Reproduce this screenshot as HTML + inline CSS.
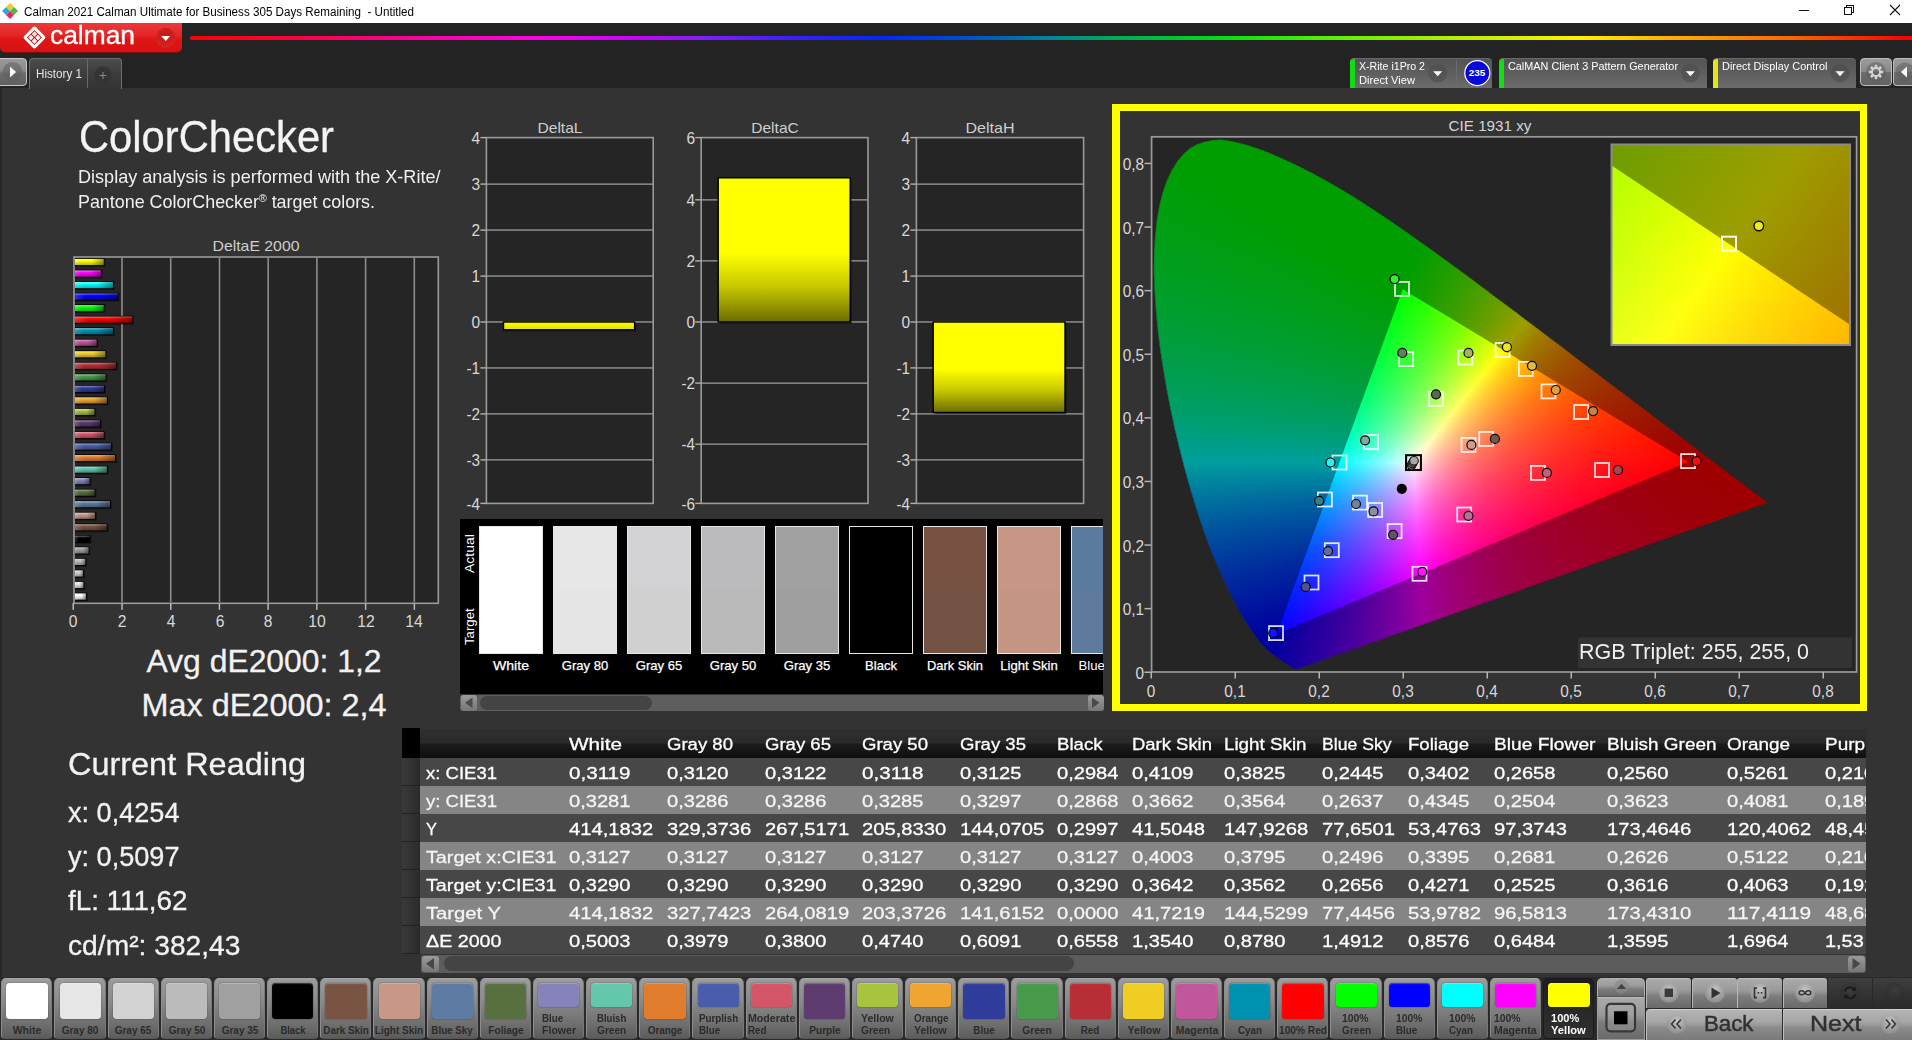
<!DOCTYPE html>
<html><head><meta charset="utf-8"><title>Calman</title>
<style>
html,body{margin:0;padding:0;}
html{width:1912px;height:1040px;overflow:hidden;}
body{width:1912px;height:1040px;overflow:hidden;background:#333;font-family:"Liberation Sans",sans-serif;position:relative;}
.a{position:absolute;box-sizing:border-box;}
.t{position:absolute;white-space:nowrap;line-height:1;}
svg{position:absolute;left:0;top:0;}
</style></head><body>

<div class="a" style="left:0px;top:0px;width:1912px;height:23px;background:#fff;"></div>
<svg width="24" height="23" viewBox="0 0 24 23">
<g transform="translate(10,11)">
<polygon points="0,-8 4,-4 0,0 -4,-4" fill="#f7c81e"/>
<polygon points="4,-4 8,0 4,4 0,0" fill="#4cb848"/>
<polygon points="-4,-4 0,0 -4,4 -8,0" fill="#29a9e0"/>
<polygon points="0,0 4,4 0,8 -4,4" fill="#e8245b"/>
</g></svg>
<span class="t" style="top:6.2px;left:24.0px;transform-origin:0 0;font-size:12px;color:#000;transform:scaleX(0.9697);">Calman 2021 Calman Ultimate for Business 305 Days Remaining&nbsp; - Untitled</span>
<svg width="1912" height="23" viewBox="0 0 1912 23" shape-rendering="crispEdges">
<rect x="1799" y="10" width="10" height="1" fill="#111"/>
<rect x="1844.5" y="7.5" width="7" height="7" fill="#fff" stroke="#111" stroke-width="1"/>
<path d="M1846.5 7.5 v-2 h7 v7 h-2" fill="none" stroke="#111" stroke-width="1"/>
</svg>
<svg width="1912" height="23" viewBox="0 0 1912 23">
<path d="M1890 5 l10 10 M1900 5 l-10 10" stroke="#111" stroke-width="1.1" fill="none"/>
</svg>
<div class="a" style="left:0px;top:23px;width:1912px;height:65px;background:#232323;"></div>
<div class="a" style="left:0px;top:23px;width:182.3px;height:28.6px;background:linear-gradient(#ea3a3a 0%,#e52424 45%,#dd1515 55%,#d81212 100%);border-radius:0 0 5px 5px;box-shadow:0 1px 0 #7a1010;"></div>
<svg width="190" height="60" viewBox="0 0 190 60"><g transform="translate(34.45,37.5) rotate(45)"><rect x="-8.3" y="-8.3" width="16.6" height="16.6" rx="2.2" fill="#fff"/><rect x="-5.3" y="-5.3" width="10.6" height="10.6" fill="#b81414"/><rect x="-4.5" y="-4.5" width="4.05" height="4.05" rx=".5" fill="#ffeeee"/><rect x="0.45" y="-4.5" width="4.05" height="4.05" rx=".5" fill="#ffeeee"/><rect x="-4.5" y="0.45" width="4.05" height="4.05" rx=".5" fill="#ffeeee"/><rect x="0.45" y="0.45" width="4.05" height="4.05" rx=".5" fill="#ffeeee"/></g><defs><radialGradient id="rdd" cx="50%" cy="40%" r="60%"><stop offset="0" stop-color="#c01818"/><stop offset="1" stop-color="#d62424"/></radialGradient></defs><circle cx="165.7" cy="37.7" r="10" fill="url(#rdd)"/><polygon points="161.2,36 170.2,36 165.7,41" fill="#fff"/></svg>
<span class="t" style="top:21.9px;left:50.3px;transform-origin:0 0;font-size:26.3px;color:#fff;transform:scaleX(1.0026);-webkit-text-stroke:0.35px #fff;">calman</span>
<div class="a" style="left:190px;top:35.6px;width:1722px;height:4.8px;background:linear-gradient(90deg,#ff0000 0%,#ff0040 6%,#ff0096 12.5%,#ff00e6 20.4%,#c800ff 25.7%,#821eff 29.7%,#3c1eff 34.9%,#0028ff 40.2%,#0050c8 45.4%,#0082a0 49.7%,#00aa5a 53.7%,#00dc14 59.7%,#50f000 65.5%,#b4f000 73.4%,#fff000 80.7%,#ffaa00 86.5%,#ff6400 93.1%,#ff0000 99.7%);filter:blur(0.6px);border-radius:2px 0 0 2px;"></div>
<div class="a" style="left:-1px;top:58px;width:28px;height:28.3px;background:linear-gradient(#9a9a9a,#8a8a8a 45%,#6c6c6c 55%,#606060);border:1px solid #c8c8c8;border-radius:0 4px 4px 0;"></div>
<svg width="30" height="90" viewBox="0 0 30 90"><circle cx="12.5" cy="72" r="10" fill="#5e5e5e" opacity=".55"/><polygon points="10,66.5 10,77.5 16,72" fill="#fff"/></svg>
<div class="a" style="left:29px;top:58px;width:92.5px;height:30.5px;background:linear-gradient(#4c4c4c,#3c3c3c 50%,#333);border:1px solid #6e6e6e;border-bottom:none;border-radius:4px 4px 0 0;"></div>
<div class="a" style="left:87px;top:59px;width:1px;height:29px;background:#6a6a6a;"></div>
<span class="t" style="top:67.7px;left:35.5px;transform-origin:0 0;font-size:12.2px;color:#e4e4e4;transform:scaleX(0.9565);">History 1</span>
<svg width="130" height="90" viewBox="0 0 130 90"><circle cx="103" cy="75" r="8.5" fill="#343434"/><path d="M99.5 75.5 h7 M103 72 v7" stroke="#8a8a8a" stroke-width="1"/></svg>
<div class="a" style="left:1349.7px;top:57.8px;width:142.6px;height:30px;background:linear-gradient(#545454,#5c5c5c 40%,#6c6c6c 100%);border-radius:4px 4px 0 0;border-top:1px solid #6a6a6a;overflow:hidden;"><div style="position:absolute;left:0;top:-1px;width:5.2px;height:31px;background:#14dc14"></div></div>
<span class="t" style="top:60.6px;left:1358.5px;transform-origin:0 0;font-size:11.3px;color:#fff;transform:scaleX(0.9385);">X-Rite i1Pro 2</span>
<span class="t" style="top:74.6px;left:1358.5px;transform-origin:0 0;font-size:11.3px;color:#fff;transform:scaleX(0.9838);">Direct View</span>
<svg width="1912" height="90" viewBox="0 0 1912 90"><circle cx="1437.7" cy="73.2" r="9.3" fill="#4a4a4a" opacity=".55"/><polygon points="1433.2,71.2 1442.2,71.2 1437.7,76.2" fill="#fff"/></svg>
<div class="a" style="left:1456px;top:60px;width:1px;height:28px;background:#6c6c6c;"></div>
<svg width="1912" height="90" viewBox="0 0 1912 90"><circle cx="1477.3" cy="73.1" r="12.5" fill="#0808dc" stroke="#fff" stroke-width="1.2"/></svg>
<span class="t" style="top:68.3px;left:1477.3px;transform-origin:0 0;font-size:9.8px;color:#fff;font-weight:bold;transform:translateX(-8.25px) scaleX(1.0086);">235</span>
<div class="a" style="left:1498.6px;top:57.8px;width:208px;height:30px;background:linear-gradient(#545454,#5c5c5c 40%,#6c6c6c 100%);border-radius:4px 4px 0 0;border-top:1px solid #6a6a6a;overflow:hidden;"><div style="position:absolute;left:0;top:-1px;width:5.2px;height:31px;background:#14dc14"></div></div>
<span class="t" style="top:60.6px;left:1507.5px;transform-origin:0 0;font-size:11.3px;color:#fff;transform:scaleX(0.9601);">CalMAN Client 3 Pattern Generator</span>
<svg width="1912" height="90" viewBox="0 0 1912 90"><circle cx="1690.4" cy="73.2" r="9.3" fill="#4a4a4a" opacity=".55"/><polygon points="1685.9,71.2 1694.9,71.2 1690.4,76.2" fill="#fff"/></svg>
<div class="a" style="left:1713.2px;top:57.8px;width:143px;height:30px;background:linear-gradient(#545454,#5c5c5c 40%,#6c6c6c 100%);border-radius:4px 4px 0 0;border-top:1px solid #6a6a6a;overflow:hidden;"><div style="position:absolute;left:0;top:-1px;width:5.2px;height:31px;background:#e4e41c"></div></div>
<span class="t" style="top:60.6px;left:1721.7px;transform-origin:0 0;font-size:11.3px;color:#fff;transform:scaleX(0.9657);">Direct Display Control</span>
<svg width="1912" height="90" viewBox="0 0 1912 90"><circle cx="1840" cy="73.2" r="9.3" fill="#4a4a4a" opacity=".55"/><polygon points="1835.5,71.2 1844.5,71.2 1840,76.2" fill="#fff"/></svg>
<div class="a" style="left:1859.6px;top:57.8px;width:32.8px;height:27.8px;background:linear-gradient(#9c9c9c,#8a8a8a 48%,#6e6e6e 52%,#626262);border:1px solid #bdbdbd;border-radius:4px;"></div>
<div class="a" style="left:1893px;top:57.8px;width:19px;height:27.8px;background:linear-gradient(#9c9c9c,#8a8a8a 48%,#6e6e6e 52%,#626262);border:1px solid #bdbdbd;border-right:none;border-radius:4px 0 0 4px;"></div>
<svg width="1912" height="90" viewBox="0 0 1912 90"><circle cx="1876" cy="72" r="10" fill="#5a5a5a" opacity=".5"/><rect x="-1.3" y="-7.2" width="2.6" height="3" fill="#d4d4d4" transform="translate(1876,72) rotate(0)"/><rect x="-1.3" y="-7.2" width="2.6" height="3" fill="#d4d4d4" transform="translate(1876,72) rotate(45)"/><rect x="-1.3" y="-7.2" width="2.6" height="3" fill="#d4d4d4" transform="translate(1876,72) rotate(90)"/><rect x="-1.3" y="-7.2" width="2.6" height="3" fill="#d4d4d4" transform="translate(1876,72) rotate(135)"/><rect x="-1.3" y="-7.2" width="2.6" height="3" fill="#d4d4d4" transform="translate(1876,72) rotate(180)"/><rect x="-1.3" y="-7.2" width="2.6" height="3" fill="#d4d4d4" transform="translate(1876,72) rotate(225)"/><rect x="-1.3" y="-7.2" width="2.6" height="3" fill="#d4d4d4" transform="translate(1876,72) rotate(270)"/><rect x="-1.3" y="-7.2" width="2.6" height="3" fill="#d4d4d4" transform="translate(1876,72) rotate(315)"/><circle cx="1876" cy="72" r="4.1" fill="none" stroke="#d4d4d4" stroke-width="2"/><circle cx="1905" cy="72" r="9.5" fill="#5a5a5a" opacity=".5"/><polygon points="1907,66.5 1907,77.5 1901,72" fill="#fff"/></svg>
<div class="a" style="left:0px;top:88px;width:1.5px;height:889px;background:#262626;"></div>
<span class="t" style="top:115.2px;left:78.5px;transform-origin:0 0;font-size:43.8px;color:#f4f4f4;transform:scaleX(0.9524);-webkit-text-stroke:0.3px #f2f2f2;">ColorChecker</span>
<span class="t" style="top:168.1px;left:78.0px;transform-origin:0 0;font-size:18.6px;color:#f0f0f0;transform:scaleX(0.9717);">Display analysis is performed with the X-Rite/</span>
<span class="t" style="top:192.9px;left:78.0px;transform-origin:0 0;font-size:18.6px;color:#f0f0f0;transform:scaleX(0.9616);">Pantone ColorChecker<span style="font-size:11px;position:relative;top:-5.5px">&reg;</span> target colors.</span>
<span class="t" style="top:237.8px;left:256.0px;transform-origin:0 0;font-size:15px;color:#cfcfcf;transform:translateX(-43.50px) scaleX(1.0537);">DeltaE 2000</span>
<svg width="460" height="640" viewBox="0 0 460 640"><defs><linearGradient id="b0" x1="0" y1="0" x2="0" y2="1"><stop offset="0" stop-color="#ffffff"/><stop offset=".35" stop-color="#ffffff"/><stop offset="1" stop-color="#b2b2b2"/></linearGradient><linearGradient id="b1" x1="0" y1="0" x2="0" y2="1"><stop offset="0" stop-color="#f1f1f1"/><stop offset=".35" stop-color="#e6e6e6"/><stop offset="1" stop-color="#a1a1a1"/></linearGradient><linearGradient id="b2" x1="0" y1="0" x2="0" y2="1"><stop offset="0" stop-color="#e6e6e7"/><stop offset=".35" stop-color="#d2d2d3"/><stop offset="1" stop-color="#939394"/></linearGradient><linearGradient id="b3" x1="0" y1="0" x2="0" y2="1"><stop offset="0" stop-color="#dadada"/><stop offset=".35" stop-color="#bbbbbc"/><stop offset="1" stop-color="#838384"/></linearGradient><linearGradient id="b4" x1="0" y1="0" x2="0" y2="1"><stop offset="0" stop-color="#cbcbcb"/><stop offset=".35" stop-color="#a0a0a0"/><stop offset="1" stop-color="#707070"/></linearGradient><linearGradient id="b5" x1="0" y1="0" x2="0" y2="1"><stop offset="0" stop-color="#737373"/><stop offset=".35" stop-color="#000000"/><stop offset="1" stop-color="#000000"/></linearGradient><linearGradient id="b6" x1="0" y1="0" x2="0" y2="1"><stop offset="0" stop-color="#b5a198"/><stop offset=".35" stop-color="#795443"/><stop offset="1" stop-color="#553b2f"/></linearGradient><linearGradient id="b7" x1="0" y1="0" x2="0" y2="1"><stop offset="0" stop-color="#e1c6bc"/><stop offset=".35" stop-color="#c99786"/><stop offset="1" stop-color="#8d6a5e"/></linearGradient><linearGradient id="b8" x1="0" y1="0" x2="0" y2="1"><stop offset="0" stop-color="#a6b6cc"/><stop offset=".35" stop-color="#5d7ba3"/><stop offset="1" stop-color="#415672"/></linearGradient><linearGradient id="b9" x1="0" y1="0" x2="0" y2="1"><stop offset="0" stop-color="#a3b096"/><stop offset=".35" stop-color="#587040"/><stop offset="1" stop-color="#3e4e2d"/></linearGradient><linearGradient id="b10" x1="0" y1="0" x2="0" y2="1"><stop offset="0" stop-color="#bcbbd8"/><stop offset=".35" stop-color="#8583b9"/><stop offset="1" stop-color="#5d5c82"/></linearGradient><linearGradient id="b11" x1="0" y1="0" x2="0" y2="1"><stop offset="0" stop-color="#a9e0d1"/><stop offset=".35" stop-color="#63c7ab"/><stop offset="1" stop-color="#458b78"/></linearGradient><linearGradient id="b12" x1="0" y1="0" x2="0" y2="1"><stop offset="0" stop-color="#eeb78a"/><stop offset=".35" stop-color="#e07c2b"/><stop offset="1" stop-color="#9d571e"/></linearGradient><linearGradient id="b13" x1="0" y1="0" x2="0" y2="1"><stop offset="0" stop-color="#9ba6d1"/><stop offset=".35" stop-color="#4a5dab"/><stop offset="1" stop-color="#344178"/></linearGradient><linearGradient id="b14" x1="0" y1="0" x2="0" y2="1"><stop offset="0" stop-color="#e7a2ab"/><stop offset=".35" stop-color="#d45567"/><stop offset="1" stop-color="#943b48"/></linearGradient><linearGradient id="b15" x1="0" y1="0" x2="0" y2="1"><stop offset="0" stop-color="#a693af"/><stop offset=".35" stop-color="#5e3b6e"/><stop offset="1" stop-color="#42294d"/></linearGradient><linearGradient id="b16" x1="0" y1="0" x2="0" y2="1"><stop offset="0" stop-color="#cfdf95"/><stop offset=".35" stop-color="#a8c43e"/><stop offset="1" stop-color="#76892b"/></linearGradient><linearGradient id="b17" x1="0" y1="0" x2="0" y2="1"><stop offset="0" stop-color="#f7ce8e"/><stop offset=".35" stop-color="#f0a531"/><stop offset="1" stop-color="#a87322"/></linearGradient><linearGradient id="b18" x1="0" y1="0" x2="0" y2="1"><stop offset="0" stop-color="#8d94c9"/><stop offset=".35" stop-color="#2f3c9c"/><stop offset="1" stop-color="#212a6d"/></linearGradient><linearGradient id="b19" x1="0" y1="0" x2="0" y2="1"><stop offset="0" stop-color="#99c79b"/><stop offset=".35" stop-color="#469a4a"/><stop offset="1" stop-color="#316c34"/></linearGradient><linearGradient id="b20" x1="0" y1="0" x2="0" y2="1"><stop offset="0" stop-color="#d88c91"/><stop offset=".35" stop-color="#b82e37"/><stop offset="1" stop-color="#812026"/></linearGradient><linearGradient id="b21" x1="0" y1="0" x2="0" y2="1"><stop offset="0" stop-color="#f7e485"/><stop offset=".35" stop-color="#f0cd22"/><stop offset="1" stop-color="#a89018"/></linearGradient><linearGradient id="b22" x1="0" y1="0" x2="0" y2="1"><stop offset="0" stop-color="#dda2c7"/><stop offset=".35" stop-color="#c2569a"/><stop offset="1" stop-color="#883c6c"/></linearGradient><linearGradient id="b23" x1="0" y1="0" x2="0" y2="1"><stop offset="0" stop-color="#73c2d4"/><stop offset=".35" stop-color="#0091b0"/><stop offset="1" stop-color="#00667b"/></linearGradient><linearGradient id="b24" x1="0" y1="0" x2="0" y2="1"><stop offset="0" stop-color="#ff7373"/><stop offset=".35" stop-color="#ff0000"/><stop offset="1" stop-color="#b20000"/></linearGradient><linearGradient id="b25" x1="0" y1="0" x2="0" y2="1"><stop offset="0" stop-color="#73ff73"/><stop offset=".35" stop-color="#00ff00"/><stop offset="1" stop-color="#00b200"/></linearGradient><linearGradient id="b26" x1="0" y1="0" x2="0" y2="1"><stop offset="0" stop-color="#7373ff"/><stop offset=".35" stop-color="#0000ff"/><stop offset="1" stop-color="#0000b2"/></linearGradient><linearGradient id="b27" x1="0" y1="0" x2="0" y2="1"><stop offset="0" stop-color="#73ffff"/><stop offset=".35" stop-color="#00ffff"/><stop offset="1" stop-color="#00b2b2"/></linearGradient><linearGradient id="b28" x1="0" y1="0" x2="0" y2="1"><stop offset="0" stop-color="#ff73ff"/><stop offset=".35" stop-color="#ff00ff"/><stop offset="1" stop-color="#b200b2"/></linearGradient><linearGradient id="b29" x1="0" y1="0" x2="0" y2="1"><stop offset="0" stop-color="#ffff73"/><stop offset=".35" stop-color="#ffff00"/><stop offset="1" stop-color="#b2b200"/></linearGradient><linearGradient id="bsh" x1="0" y1="0" x2="1" y2="0"><stop offset="0" stop-color="#fff" stop-opacity=".18"/><stop offset=".25" stop-color="#fff" stop-opacity="0"/><stop offset=".6" stop-color="#000" stop-opacity="0"/><stop offset="1" stop-color="#000" stop-opacity=".38"/></linearGradient></defs><rect x="74" y="257" width="364" height="346" fill="#252525"/><rect x="121.2" y="258" width="1.6" height="344" fill="#8c8c8c"/><rect x="169.9" y="258" width="1.6" height="344" fill="#8c8c8c"/><rect x="218.7" y="258" width="1.6" height="344" fill="#8c8c8c"/><rect x="267.4" y="258" width="1.6" height="344" fill="#8c8c8c"/><rect x="316.1" y="258" width="1.6" height="344" fill="#8c8c8c"/><rect x="364.8" y="258" width="1.6" height="344" fill="#8c8c8c"/><rect x="413.5" y="258" width="1.6" height="344" fill="#8c8c8c"/><rect x="74.6" y="593.12" width="13.09" height="8.3" fill="#000" opacity=".45"/><rect x="74.2" y="592.66" width="12.39" height="7.7" fill="#000"/><rect x="74.8" y="593.41" width="11.04" height="6.2" fill="url(#b0)"/><rect x="74.8" y="593.41" width="11.04" height="6.2" fill="url(#bsh)"/><rect x="74.6" y="581.58" width="10.59" height="8.3" fill="#000" opacity=".45"/><rect x="74.2" y="581.13" width="9.89" height="7.7" fill="#000"/><rect x="74.8" y="581.88" width="8.54" height="6.2" fill="url(#b1)"/><rect x="74.8" y="581.88" width="8.54" height="6.2" fill="url(#bsh)"/><rect x="74.6" y="570.04" width="10.16" height="8.3" fill="#000" opacity=".45"/><rect x="74.2" y="569.59" width="9.46" height="7.7" fill="#000"/><rect x="74.8" y="570.34" width="8.11" height="6.2" fill="url(#b2)"/><rect x="74.8" y="570.34" width="8.11" height="6.2" fill="url(#bsh)"/><rect x="74.6" y="558.51" width="12.45" height="8.3" fill="#000" opacity=".45"/><rect x="74.2" y="558.06" width="11.75" height="7.7" fill="#000"/><rect x="74.8" y="558.81" width="10.40" height="6.2" fill="url(#b3)"/><rect x="74.8" y="558.81" width="10.40" height="6.2" fill="url(#bsh)"/><rect x="74.6" y="546.98" width="15.74" height="8.3" fill="#000" opacity=".45"/><rect x="74.2" y="546.52" width="15.04" height="7.7" fill="#000"/><rect x="74.8" y="547.27" width="13.69" height="6.2" fill="url(#b4)"/><rect x="74.8" y="547.27" width="13.69" height="6.2" fill="url(#bsh)"/><rect x="74.6" y="535.44" width="16.88" height="8.3" fill="#000" opacity=".45"/><rect x="74.2" y="534.99" width="16.18" height="7.7" fill="#000"/><rect x="74.8" y="535.74" width="14.83" height="6.2" fill="url(#b5)"/><rect x="74.8" y="535.74" width="14.83" height="6.2" fill="url(#bsh)"/><rect x="74.6" y="523.91" width="33.88" height="8.3" fill="#000" opacity=".45"/><rect x="74.2" y="523.46" width="33.18" height="7.7" fill="#000"/><rect x="74.8" y="524.21" width="31.83" height="6.2" fill="url(#b6)"/><rect x="74.8" y="524.21" width="31.83" height="6.2" fill="url(#bsh)"/><rect x="74.6" y="512.37" width="22.29" height="8.3" fill="#000" opacity=".45"/><rect x="74.2" y="511.92" width="21.59" height="7.7" fill="#000"/><rect x="74.8" y="512.67" width="20.24" height="6.2" fill="url(#b7)"/><rect x="74.8" y="512.67" width="20.24" height="6.2" fill="url(#bsh)"/><rect x="74.6" y="500.84" width="37.23" height="8.3" fill="#000" opacity=".45"/><rect x="74.2" y="500.38" width="36.53" height="7.7" fill="#000"/><rect x="74.8" y="501.13" width="35.18" height="6.2" fill="url(#b8)"/><rect x="74.8" y="501.13" width="35.18" height="6.2" fill="url(#bsh)"/><rect x="74.6" y="489.30" width="21.79" height="8.3" fill="#000" opacity=".45"/><rect x="74.2" y="488.85" width="21.09" height="7.7" fill="#000"/><rect x="74.8" y="489.60" width="19.74" height="6.2" fill="url(#b9)"/><rect x="74.8" y="489.60" width="19.74" height="6.2" fill="url(#bsh)"/><rect x="74.6" y="477.76" width="16.70" height="8.3" fill="#000" opacity=".45"/><rect x="74.2" y="477.31" width="16.00" height="7.7" fill="#000"/><rect x="74.8" y="478.06" width="14.65" height="6.2" fill="url(#b10)"/><rect x="74.8" y="478.06" width="14.65" height="6.2" fill="url(#bsh)"/><rect x="74.6" y="466.23" width="34.02" height="8.3" fill="#000" opacity=".45"/><rect x="74.2" y="465.78" width="33.32" height="7.7" fill="#000"/><rect x="74.8" y="466.53" width="31.97" height="6.2" fill="url(#b11)"/><rect x="74.8" y="466.53" width="31.97" height="6.2" fill="url(#bsh)"/><rect x="74.6" y="454.70" width="42.22" height="8.3" fill="#000" opacity=".45"/><rect x="74.2" y="454.25" width="41.52" height="7.7" fill="#000"/><rect x="74.8" y="455.00" width="40.17" height="6.2" fill="url(#b12)"/><rect x="74.8" y="455.00" width="40.17" height="6.2" fill="url(#bsh)"/><rect x="74.6" y="443.16" width="38.17" height="8.3" fill="#000" opacity=".45"/><rect x="74.2" y="442.71" width="37.47" height="7.7" fill="#000"/><rect x="74.8" y="443.46" width="36.12" height="6.2" fill="url(#b13)"/><rect x="74.8" y="443.46" width="36.12" height="6.2" fill="url(#bsh)"/><rect x="74.6" y="431.62" width="30.86" height="8.3" fill="#000" opacity=".45"/><rect x="74.2" y="431.17" width="30.16" height="7.7" fill="#000"/><rect x="74.8" y="431.92" width="28.81" height="6.2" fill="url(#b14)"/><rect x="74.8" y="431.92" width="28.81" height="6.2" fill="url(#bsh)"/><rect x="74.6" y="420.09" width="27.21" height="8.3" fill="#000" opacity=".45"/><rect x="74.2" y="419.64" width="26.51" height="7.7" fill="#000"/><rect x="74.8" y="420.39" width="25.16" height="6.2" fill="url(#b15)"/><rect x="74.8" y="420.39" width="25.16" height="6.2" fill="url(#bsh)"/><rect x="74.6" y="408.56" width="21.61" height="8.3" fill="#000" opacity=".45"/><rect x="74.2" y="408.11" width="20.91" height="7.7" fill="#000"/><rect x="74.8" y="408.86" width="19.56" height="6.2" fill="url(#b16)"/><rect x="74.8" y="408.86" width="19.56" height="6.2" fill="url(#bsh)"/><rect x="74.6" y="397.02" width="34.03" height="8.3" fill="#000" opacity=".45"/><rect x="74.2" y="396.57" width="33.33" height="7.7" fill="#000"/><rect x="74.8" y="397.32" width="31.98" height="6.2" fill="url(#b17)"/><rect x="74.8" y="397.32" width="31.98" height="6.2" fill="url(#bsh)"/><rect x="74.6" y="385.49" width="31.35" height="8.3" fill="#000" opacity=".45"/><rect x="74.2" y="385.03" width="30.65" height="7.7" fill="#000"/><rect x="74.8" y="385.78" width="29.30" height="6.2" fill="url(#b18)"/><rect x="74.8" y="385.78" width="29.30" height="6.2" fill="url(#bsh)"/><rect x="74.6" y="373.95" width="32.81" height="8.3" fill="#000" opacity=".45"/><rect x="74.2" y="373.50" width="32.11" height="7.7" fill="#000"/><rect x="74.8" y="374.25" width="30.76" height="6.2" fill="url(#b19)"/><rect x="74.8" y="374.25" width="30.76" height="6.2" fill="url(#bsh)"/><rect x="74.6" y="362.42" width="43.04" height="8.3" fill="#000" opacity=".45"/><rect x="74.2" y="361.96" width="42.34" height="7.7" fill="#000"/><rect x="74.8" y="362.71" width="40.99" height="6.2" fill="url(#b20)"/><rect x="74.8" y="362.71" width="40.99" height="6.2" fill="url(#bsh)"/><rect x="74.6" y="350.88" width="32.57" height="8.3" fill="#000" opacity=".45"/><rect x="74.2" y="350.43" width="31.87" height="7.7" fill="#000"/><rect x="74.8" y="351.18" width="30.52" height="6.2" fill="url(#b21)"/><rect x="74.8" y="351.18" width="30.52" height="6.2" fill="url(#bsh)"/><rect x="74.6" y="339.35" width="23.80" height="8.3" fill="#000" opacity=".45"/><rect x="74.2" y="338.89" width="23.10" height="7.7" fill="#000"/><rect x="74.8" y="339.64" width="21.75" height="6.2" fill="url(#b22)"/><rect x="74.8" y="339.64" width="21.75" height="6.2" fill="url(#bsh)"/><rect x="74.6" y="327.81" width="40.12" height="8.3" fill="#000" opacity=".45"/><rect x="74.2" y="327.36" width="39.42" height="7.7" fill="#000"/><rect x="74.8" y="328.11" width="38.07" height="6.2" fill="url(#b23)"/><rect x="74.8" y="328.11" width="38.07" height="6.2" fill="url(#bsh)"/><rect x="74.6" y="316.28" width="59.36" height="8.3" fill="#000" opacity=".45"/><rect x="74.2" y="315.82" width="58.66" height="7.7" fill="#000"/><rect x="74.8" y="316.57" width="57.31" height="6.2" fill="url(#b24)"/><rect x="74.8" y="316.57" width="57.31" height="6.2" fill="url(#bsh)"/><rect x="74.6" y="304.74" width="30.86" height="8.3" fill="#000" opacity=".45"/><rect x="74.2" y="304.29" width="30.16" height="7.7" fill="#000"/><rect x="74.8" y="305.04" width="28.81" height="6.2" fill="url(#b25)"/><rect x="74.8" y="305.04" width="28.81" height="6.2" fill="url(#bsh)"/><rect x="74.6" y="293.21" width="44.99" height="8.3" fill="#000" opacity=".45"/><rect x="74.2" y="292.75" width="44.29" height="7.7" fill="#000"/><rect x="74.8" y="293.50" width="42.94" height="6.2" fill="url(#b26)"/><rect x="74.8" y="293.50" width="42.94" height="6.2" fill="url(#bsh)"/><rect x="74.6" y="281.67" width="40.12" height="8.3" fill="#000" opacity=".45"/><rect x="74.2" y="281.22" width="39.42" height="7.7" fill="#000"/><rect x="74.8" y="281.97" width="38.07" height="6.2" fill="url(#b27)"/><rect x="74.8" y="281.97" width="38.07" height="6.2" fill="url(#bsh)"/><rect x="74.6" y="270.14" width="28.18" height="8.3" fill="#000" opacity=".45"/><rect x="74.2" y="269.69" width="27.48" height="7.7" fill="#000"/><rect x="74.8" y="270.44" width="26.13" height="6.2" fill="url(#b28)"/><rect x="74.8" y="270.44" width="26.13" height="6.2" fill="url(#bsh)"/><rect x="74.6" y="258.60" width="30.86" height="8.3" fill="#000" opacity=".45"/><rect x="74.2" y="258.15" width="30.16" height="7.7" fill="#000"/><rect x="74.8" y="258.90" width="28.81" height="6.2" fill="url(#b29)"/><rect x="74.8" y="258.90" width="28.81" height="6.2" fill="url(#bsh)"/><rect x="74" y="257" width="364.3" height="346.3" fill="none" stroke="#9a9a9a" stroke-width="1.6"/><rect x="72.5" y="603" width="1.5" height="6.8" fill="#b8b8b8"/><rect x="121.3" y="603" width="1.5" height="6.8" fill="#b8b8b8"/><rect x="170.0" y="603" width="1.5" height="6.8" fill="#b8b8b8"/><rect x="218.7" y="603" width="1.5" height="6.8" fill="#b8b8b8"/><rect x="267.4" y="603" width="1.5" height="6.8" fill="#b8b8b8"/><rect x="316.1" y="603" width="1.5" height="6.8" fill="#b8b8b8"/><rect x="364.9" y="603" width="1.5" height="6.8" fill="#b8b8b8"/><rect x="413.6" y="603" width="1.5" height="6.8" fill="#b8b8b8"/></svg>
<span class="t" style="top:613.1px;left:73.3px;transform-origin:0 0;font-size:16.4px;color:#d8d8d8;transform:translateX(-4.35px) scaleX(0.9534);">0</span>
<span class="t" style="top:613.1px;left:122.0px;transform-origin:0 0;font-size:16.4px;color:#d8d8d8;transform:translateX(-4.35px) scaleX(0.9534);">2</span>
<span class="t" style="top:613.1px;left:170.7px;transform-origin:0 0;font-size:16.4px;color:#d8d8d8;transform:translateX(-4.35px) scaleX(0.9534);">4</span>
<span class="t" style="top:613.1px;left:219.5px;transform-origin:0 0;font-size:16.4px;color:#d8d8d8;transform:translateX(-4.35px) scaleX(0.9534);">6</span>
<span class="t" style="top:613.1px;left:268.2px;transform-origin:0 0;font-size:16.4px;color:#d8d8d8;transform:translateX(-4.35px) scaleX(0.9534);">8</span>
<span class="t" style="top:613.1px;left:316.9px;transform-origin:0 0;font-size:16.4px;color:#d8d8d8;transform:translateX(-8.80px) scaleX(0.9652);">10</span>
<span class="t" style="top:613.1px;left:365.6px;transform-origin:0 0;font-size:16.4px;color:#d8d8d8;transform:translateX(-8.80px) scaleX(0.9652);">12</span>
<span class="t" style="top:613.1px;left:414.3px;transform-origin:0 0;font-size:16.4px;color:#d8d8d8;transform:translateX(-8.80px) scaleX(0.9652);">14</span>
<span class="t" style="top:644.6px;left:263.5px;transform-origin:0 0;font-size:32px;color:#f2f2f2;transform:translateX(-117.50px) scaleX(0.9956);-webkit-text-stroke:0.3px #f2f2f2;">Avg dE2000: 1,2</span>
<span class="t" style="top:688.7px;left:263.5px;transform-origin:0 0;font-size:32px;color:#f2f2f2;transform:translateX(-122.50px) scaleX(1.0127);-webkit-text-stroke:0.3px #f2f2f2;">Max dE2000: 2,4</span>
<span class="t" style="top:748.4px;left:67.5px;transform-origin:0 0;font-size:32.2px;color:#f2f2f2;transform:scaleX(1.0077);-webkit-text-stroke:0.3px #f2f2f2;">Current Reading</span>
<span class="t" style="top:798.8px;left:67.5px;transform-origin:0 0;font-size:27.2px;color:#f2f2f2;transform:scaleX(0.9968);-webkit-text-stroke:0.3px #f2f2f2;">x: 0,4254</span>
<span class="t" style="top:842.6px;left:67.5px;transform-origin:0 0;font-size:27.2px;color:#f2f2f2;transform:scaleX(0.9968);-webkit-text-stroke:0.3px #f2f2f2;">y: 0,5097</span>
<span class="t" style="top:887.2px;left:67.5px;transform-origin:0 0;font-size:27.2px;color:#f2f2f2;transform:scaleX(1.0222);-webkit-text-stroke:0.3px #f2f2f2;">fL: 111,62</span>
<span class="t" style="top:931.5px;left:67.5px;transform-origin:0 0;font-size:27.2px;color:#f2f2f2;transform:scaleX(1.0377);-webkit-text-stroke:0.3px #f2f2f2;">cd/m&sup2;: 382,43</span>
<span class="t" style="top:129.7px;left:479.9px;transform-origin:0 0;font-size:16.1px;color:#d8d8d8;transform:translateX(-8.60px) scaleX(0.9606);">4</span>
<span class="t" style="top:176.2px;left:479.9px;transform-origin:0 0;font-size:16.1px;color:#d8d8d8;transform:translateX(-8.60px) scaleX(0.9606);">3</span>
<span class="t" style="top:222.2px;left:479.9px;transform-origin:0 0;font-size:16.1px;color:#d8d8d8;transform:translateX(-8.60px) scaleX(0.9606);">2</span>
<span class="t" style="top:268.1px;left:479.9px;transform-origin:0 0;font-size:16.1px;color:#d8d8d8;transform:translateX(-8.60px) scaleX(0.9606);">1</span>
<span class="t" style="top:314.1px;left:479.9px;transform-origin:0 0;font-size:16.1px;color:#d8d8d8;transform:translateX(-8.60px) scaleX(0.9606);">0</span>
<span class="t" style="top:360.0px;left:479.9px;transform-origin:0 0;font-size:16.1px;color:#d8d8d8;transform:translateX(-13.60px) scaleX(0.9502);">-1</span>
<span class="t" style="top:406.0px;left:479.9px;transform-origin:0 0;font-size:16.1px;color:#d8d8d8;transform:translateX(-13.60px) scaleX(0.9502);">-2</span>
<span class="t" style="top:451.9px;left:479.9px;transform-origin:0 0;font-size:16.1px;color:#d8d8d8;transform:translateX(-13.60px) scaleX(0.9502);">-3</span>
<span class="t" style="top:495.5px;left:479.9px;transform-origin:0 0;font-size:16.1px;color:#d8d8d8;transform:translateX(-13.60px) scaleX(0.9502);">-4</span>
<span class="t" style="top:129.7px;left:694.7px;transform-origin:0 0;font-size:16.1px;color:#d8d8d8;transform:translateX(-8.60px) scaleX(0.9606);">6</span>
<span class="t" style="top:191.9px;left:694.7px;transform-origin:0 0;font-size:16.1px;color:#d8d8d8;transform:translateX(-8.60px) scaleX(0.9606);">4</span>
<span class="t" style="top:253.0px;left:694.7px;transform-origin:0 0;font-size:16.1px;color:#d8d8d8;transform:translateX(-8.60px) scaleX(0.9606);">2</span>
<span class="t" style="top:314.1px;left:694.7px;transform-origin:0 0;font-size:16.1px;color:#d8d8d8;transform:translateX(-8.60px) scaleX(0.9606);">0</span>
<span class="t" style="top:375.2px;left:694.7px;transform-origin:0 0;font-size:16.1px;color:#d8d8d8;transform:translateX(-13.60px) scaleX(0.9502);">-2</span>
<span class="t" style="top:436.3px;left:694.7px;transform-origin:0 0;font-size:16.1px;color:#d8d8d8;transform:translateX(-13.60px) scaleX(0.9502);">-4</span>
<span class="t" style="top:495.5px;left:694.7px;transform-origin:0 0;font-size:16.1px;color:#d8d8d8;transform:translateX(-13.60px) scaleX(0.9502);">-6</span>
<span class="t" style="top:129.7px;left:909.9px;transform-origin:0 0;font-size:16.1px;color:#d8d8d8;transform:translateX(-8.60px) scaleX(0.9606);">4</span>
<span class="t" style="top:176.2px;left:909.9px;transform-origin:0 0;font-size:16.1px;color:#d8d8d8;transform:translateX(-8.60px) scaleX(0.9606);">3</span>
<span class="t" style="top:222.2px;left:909.9px;transform-origin:0 0;font-size:16.1px;color:#d8d8d8;transform:translateX(-8.60px) scaleX(0.9606);">2</span>
<span class="t" style="top:268.1px;left:909.9px;transform-origin:0 0;font-size:16.1px;color:#d8d8d8;transform:translateX(-8.60px) scaleX(0.9606);">1</span>
<span class="t" style="top:314.1px;left:909.9px;transform-origin:0 0;font-size:16.1px;color:#d8d8d8;transform:translateX(-8.60px) scaleX(0.9606);">0</span>
<span class="t" style="top:360.0px;left:909.9px;transform-origin:0 0;font-size:16.1px;color:#d8d8d8;transform:translateX(-13.60px) scaleX(0.9502);">-1</span>
<span class="t" style="top:406.0px;left:909.9px;transform-origin:0 0;font-size:16.1px;color:#d8d8d8;transform:translateX(-13.60px) scaleX(0.9502);">-2</span>
<span class="t" style="top:451.9px;left:909.9px;transform-origin:0 0;font-size:16.1px;color:#d8d8d8;transform:translateX(-13.60px) scaleX(0.9502);">-3</span>
<span class="t" style="top:495.5px;left:909.9px;transform-origin:0 0;font-size:16.1px;color:#d8d8d8;transform:translateX(-13.60px) scaleX(0.9502);">-4</span>
<svg width="1110" height="520" viewBox="0 0 1110 520"><defs><linearGradient id="yb" x1="0" y1="0" x2="0" y2="1"><stop offset="0" stop-color="#ffff00"/><stop offset=".52" stop-color="#ffff00"/><stop offset=".76" stop-color="#c6c600"/><stop offset="1" stop-color="#6c6c00"/></linearGradient><linearGradient id="yb2" x1="0" y1="0" x2="0" y2="1"><stop offset="0" stop-color="#ffff00"/><stop offset="1" stop-color="#e0e000"/></linearGradient></defs><rect x="486.4" y="137.6" width="166.8" height="365.8" fill="#252525"/><rect x="486.4" y="183.4" width="166.8" height="1.5" fill="#8c8c8c"/><rect x="486.4" y="229.3" width="166.8" height="1.5" fill="#8c8c8c"/><rect x="486.4" y="275.3" width="166.8" height="1.5" fill="#8c8c8c"/><rect x="486.4" y="321.2" width="166.8" height="1.5" fill="#8c8c8c"/><rect x="486.4" y="367.2" width="166.8" height="1.5" fill="#8c8c8c"/><rect x="486.4" y="413.1" width="166.8" height="1.5" fill="#8c8c8c"/><rect x="486.4" y="459.1" width="166.8" height="1.5" fill="#8c8c8c"/><rect x="505" y="323.5" width="131.1" height="7.8" fill="#000" opacity=".5"/><rect x="503.5" y="322.0" width="131.1" height="7.8" fill="url(#yb2)" stroke="#000" stroke-width="1.4"/><rect x="486.4" y="137.6" width="166.8" height="365.8" fill="none" stroke="#9a9a9a" stroke-width="1.6"/><rect x="480.4" y="136.9" width="6" height="1.4" fill="#b0b0b0"/><rect x="480.4" y="183.4" width="6" height="1.4" fill="#b0b0b0"/><rect x="480.4" y="229.4" width="6" height="1.4" fill="#b0b0b0"/><rect x="480.4" y="275.4" width="6" height="1.4" fill="#b0b0b0"/><rect x="480.4" y="321.3" width="6" height="1.4" fill="#b0b0b0"/><rect x="480.4" y="367.2" width="6" height="1.4" fill="#b0b0b0"/><rect x="480.4" y="413.2" width="6" height="1.4" fill="#b0b0b0"/><rect x="480.4" y="459.2" width="6" height="1.4" fill="#b0b0b0"/><rect x="480.4" y="502.7" width="6" height="1.4" fill="#b0b0b0"/><rect x="701.2" y="137.6" width="166.8" height="365.8" fill="#252525"/><rect x="701.2" y="199.1" width="166.8" height="1.5" fill="#8c8c8c"/><rect x="701.2" y="260.1" width="166.8" height="1.5" fill="#8c8c8c"/><rect x="701.2" y="321.2" width="166.8" height="1.5" fill="#8c8c8c"/><rect x="701.2" y="382.4" width="166.8" height="1.5" fill="#8c8c8c"/><rect x="701.2" y="443.4" width="166.8" height="1.5" fill="#8c8c8c"/><rect x="719.7" y="179.3" width="132" height="144.2" fill="#000" opacity=".5"/><rect x="718.2" y="177.8" width="132" height="144.2" fill="url(#yb)" stroke="#000" stroke-width="1.4"/><rect x="701.2" y="137.6" width="166.8" height="365.8" fill="none" stroke="#9a9a9a" stroke-width="1.6"/><rect x="695.2" y="136.9" width="6" height="1.4" fill="#b0b0b0"/><rect x="695.2" y="199.1" width="6" height="1.4" fill="#b0b0b0"/><rect x="695.2" y="260.2" width="6" height="1.4" fill="#b0b0b0"/><rect x="695.2" y="321.3" width="6" height="1.4" fill="#b0b0b0"/><rect x="695.2" y="382.4" width="6" height="1.4" fill="#b0b0b0"/><rect x="695.2" y="443.5" width="6" height="1.4" fill="#b0b0b0"/><rect x="695.2" y="502.7" width="6" height="1.4" fill="#b0b0b0"/><rect x="916.4" y="137.6" width="167.2" height="365.8" fill="#252525"/><rect x="916.4" y="183.4" width="167.2" height="1.5" fill="#8c8c8c"/><rect x="916.4" y="229.3" width="167.2" height="1.5" fill="#8c8c8c"/><rect x="916.4" y="275.3" width="167.2" height="1.5" fill="#8c8c8c"/><rect x="916.4" y="321.2" width="167.2" height="1.5" fill="#8c8c8c"/><rect x="916.4" y="367.2" width="167.2" height="1.5" fill="#8c8c8c"/><rect x="916.4" y="413.1" width="167.2" height="1.5" fill="#8c8c8c"/><rect x="916.4" y="459.1" width="167.2" height="1.5" fill="#8c8c8c"/><rect x="934.7" y="323.5" width="131.8" height="90.5" fill="#000" opacity=".5"/><rect x="933.2" y="322.0" width="131.8" height="90.5" fill="url(#yb)" stroke="#000" stroke-width="1.4"/><rect x="916.4" y="137.6" width="167.2" height="365.8" fill="none" stroke="#9a9a9a" stroke-width="1.6"/><rect x="910.4" y="136.9" width="6" height="1.4" fill="#b0b0b0"/><rect x="910.4" y="183.4" width="6" height="1.4" fill="#b0b0b0"/><rect x="910.4" y="229.4" width="6" height="1.4" fill="#b0b0b0"/><rect x="910.4" y="275.4" width="6" height="1.4" fill="#b0b0b0"/><rect x="910.4" y="321.3" width="6" height="1.4" fill="#b0b0b0"/><rect x="910.4" y="367.2" width="6" height="1.4" fill="#b0b0b0"/><rect x="910.4" y="413.2" width="6" height="1.4" fill="#b0b0b0"/><rect x="910.4" y="459.2" width="6" height="1.4" fill="#b0b0b0"/><rect x="910.4" y="502.7" width="6" height="1.4" fill="#b0b0b0"/></svg>
<span class="t" style="top:119.8px;left:559.5px;transform-origin:0 0;font-size:15px;color:#cfcfcf;transform:translateX(-22.50px) scaleX(1.0378);">DeltaL</span>
<span class="t" style="top:119.8px;left:775.0px;transform-origin:0 0;font-size:15px;color:#cfcfcf;transform:translateX(-23.75px) scaleX(1.0358);">DeltaC</span>
<span class="t" style="top:119.8px;left:989.5px;transform-origin:0 0;font-size:15px;color:#cfcfcf;transform:translateX(-24.50px) scaleX(1.0685);">DeltaH</span>
<div class="a" style="left:459.8px;top:518.5px;width:643.7px;height:175.5px;background:#000;overflow:hidden;"></div>
<div class="a" style="left:478.8px;top:526.2px;width:63.8px;height:128px;background:linear-gradient(#ffffff 0,#ffffff 50%,#ffffff 50%,#ffffff 100%);border:1.3px solid #e6e6e6;"></div>
<div class="a" style="left:552.85px;top:526.2px;width:63.8px;height:128px;background:linear-gradient(#e7e7e7 0,#e7e7e7 50%,#e5e5e5 50%,#e5e5e5 100%);border:1.3px solid #e6e6e6;"></div>
<div class="a" style="left:626.9px;top:526.2px;width:63.8px;height:128px;background:linear-gradient(#d2d2d4 0,#d2d2d4 50%,#d0d0d0 50%,#d0d0d0 100%);border:1.3px solid #e6e6e6;"></div>
<div class="a" style="left:700.95px;top:526.2px;width:63.8px;height:128px;background:linear-gradient(#bbbbbd 0,#bbbbbd 50%,#b9b9b9 50%,#b9b9b9 100%);border:1.3px solid #e6e6e6;"></div>
<div class="a" style="left:775px;top:526.2px;width:63.8px;height:128px;background:linear-gradient(#a1a1a1 0,#a1a1a1 50%,#9f9f9f 50%,#9f9f9f 100%);border:1.3px solid #e6e6e6;"></div>
<div class="a" style="left:849.05px;top:526.2px;width:63.8px;height:128px;background:linear-gradient(#000000 0,#000000 50%,#000000 50%,#000000 100%);border:1.3px solid #e6e6e6;"></div>
<div class="a" style="left:923.1px;top:526.2px;width:63.8px;height:128px;background:linear-gradient(#775242 0,#775242 50%,#735244 50%,#735244 100%);border:1.3px solid #e6e6e6;"></div>
<div class="a" style="left:997.15px;top:526.2px;width:63.8px;height:128px;background:linear-gradient(#c79684 0,#c79684 50%,#c49583 50%,#c49583 100%);border:1.3px solid #e6e6e6;"></div>
<div class="a" style="left:1071.2px;top:526.2px;width:32.3px;height:128px;background:linear-gradient(#5b7a9f 0,#5b7a9f 50%,#5e7a9c 50%,#5e7a9c 100%);border:1.3px solid #e6e6e6;border-right:none;"></div>
<span class="t" style="top:658.8px;left:510.7px;transform-origin:0 0;font-size:13.2px;color:#fff;transform:translateX(-18.00px) scaleX(1.0677);-webkit-text-stroke:0.25px #fff;">White</span>
<span class="t" style="top:658.8px;left:584.8px;transform-origin:0 0;font-size:13.2px;color:#fff;transform:translateX(-23.25px) scaleX(0.9910);-webkit-text-stroke:0.25px #fff;">Gray 80</span>
<span class="t" style="top:658.8px;left:658.8px;transform-origin:0 0;font-size:13.2px;color:#fff;transform:translateX(-23.25px) scaleX(0.9910);-webkit-text-stroke:0.25px #fff;">Gray 65</span>
<span class="t" style="top:658.8px;left:732.9px;transform-origin:0 0;font-size:13.2px;color:#fff;transform:translateX(-23.25px) scaleX(0.9910);-webkit-text-stroke:0.25px #fff;">Gray 50</span>
<span class="t" style="top:658.8px;left:806.9px;transform-origin:0 0;font-size:13.2px;color:#fff;transform:translateX(-23.25px) scaleX(0.9910);-webkit-text-stroke:0.25px #fff;">Gray 35</span>
<span class="t" style="top:658.8px;left:880.9px;transform-origin:0 0;font-size:13.2px;color:#fff;transform:translateX(-16.00px) scaleX(0.9922);-webkit-text-stroke:0.25px #fff;">Black</span>
<span class="t" style="top:658.8px;left:955.0px;transform-origin:0 0;font-size:13.2px;color:#fff;transform:translateX(-28.00px) scaleX(0.9795);-webkit-text-stroke:0.25px #fff;">Dark Skin</span>
<span class="t" style="top:658.8px;left:1029.1px;transform-origin:0 0;font-size:13.2px;color:#fff;transform:translateX(-28.75px) scaleX(0.9927);-webkit-text-stroke:0.25px #fff;">Light Skin</span>
<div class="a" style="left:1078.5px;top:656.5px;width:25px;height:18px;overflow:hidden"><span class="t" style="left:0;top:2.4px;font-size:13.2px;color:#fff">Blue Sky</span></div>
<span class="t" style="left:463px;top:573px;font-size:13.2px;color:#fff;transform-origin:0 0;transform:rotate(-90deg) scaleX(1.06)">Actual</span>
<span class="t" style="left:463px;top:644.5px;font-size:13.2px;color:#fff;transform-origin:0 0;transform:rotate(-90deg) scaleX(1.0)">Target</span>
<div class="a" style="left:459.8px;top:694.5px;width:643.7px;height:16.5px;background:#5e5e5e;border-radius:3px;"></div>
<div class="a" style="left:479.5px;top:695.5px;width:172px;height:14.5px;background:#444;border-radius:7px;"></div>
<div class="a" style="left:461px;top:695px;width:15.5px;height:15.5px;background:linear-gradient(#9a9a9a,#777);border-radius:3px;"></div>
<div class="a" style="left:1088px;top:695px;width:15.5px;height:15.5px;background:linear-gradient(#9a9a9a,#777);border-radius:3px;"></div>
<svg width="1110" height="720" viewBox="0 0 1110 720"><polygon points="472.5,697.5 472.5,708 465,702.7" fill="#4a4a4a"/><polygon points="1092,697.5 1092,708 1099.5,702.7" fill="#4a4a4a"/></svg>
<div class="a" style="left:1112px;top:103.8px;width:755px;height:607.2px;border:8px solid #ffff00;border-top-width:7.4px;border-bottom-width:7.4px;border-right-width:7.5px;"></div>
<div class="a" style="left:1151px;top:136px;width:706px;height:536.5px;background:#252525;"></div>
<svg width="1912" height="720" viewBox="0 0 1912 720"><defs><linearGradient id="g0" gradientUnits="userSpaceOnUse" x1="1211" x2="1226" y1="0" y2="0"><stop offset="0" stop-color="#00ff00"/><stop offset="1" stop-color="#00ff00"/></linearGradient><linearGradient id="g1" gradientUnits="userSpaceOnUse" x1="1202" x2="1237" y1="0" y2="0"><stop offset="0" stop-color="#00ff00"/><stop offset="1" stop-color="#00ff00"/></linearGradient><linearGradient id="g2" gradientUnits="userSpaceOnUse" x1="1196" x2="1245" y1="0" y2="0"><stop offset="0" stop-color="#00ff00"/><stop offset="1" stop-color="#00ff00"/></linearGradient><linearGradient id="g3" gradientUnits="userSpaceOnUse" x1="1193" x2="1252" y1="0" y2="0"><stop offset="0" stop-color="#00ff00"/><stop offset="1" stop-color="#00ff00"/></linearGradient><linearGradient id="g4" gradientUnits="userSpaceOnUse" x1="1189" x2="1258" y1="0" y2="0"><stop offset="0" stop-color="#00ff00"/><stop offset="1" stop-color="#00ff00"/></linearGradient><linearGradient id="g5" gradientUnits="userSpaceOnUse" x1="1186" x2="1264" y1="0" y2="0"><stop offset="0" stop-color="#00ff00"/><stop offset="1" stop-color="#00ff00"/></linearGradient><linearGradient id="g6" gradientUnits="userSpaceOnUse" x1="1184" x2="1269" y1="0" y2="0"><stop offset="0" stop-color="#00ff00"/><stop offset="1" stop-color="#00ff00"/></linearGradient><linearGradient id="g7" gradientUnits="userSpaceOnUse" x1="1182" x2="1273" y1="0" y2="0"><stop offset="0" stop-color="#00ff00"/><stop offset="1" stop-color="#00ff00"/></linearGradient><linearGradient id="g8" gradientUnits="userSpaceOnUse" x1="1180" x2="1278" y1="0" y2="0"><stop offset="0" stop-color="#00ff00"/><stop offset="1" stop-color="#00ff00"/></linearGradient><linearGradient id="g9" gradientUnits="userSpaceOnUse" x1="1179" x2="1283" y1="0" y2="0"><stop offset="0" stop-color="#00ff01"/><stop offset="1" stop-color="#00ff00"/></linearGradient><linearGradient id="g10" gradientUnits="userSpaceOnUse" x1="1177" x2="1287" y1="0" y2="0"><stop offset="0" stop-color="#00ff02"/><stop offset="1" stop-color="#00ff00"/></linearGradient><linearGradient id="g11" gradientUnits="userSpaceOnUse" x1="1175" x2="1292" y1="0" y2="0"><stop offset="0" stop-color="#00ff03"/><stop offset="1" stop-color="#00ff00"/></linearGradient><linearGradient id="g12" gradientUnits="userSpaceOnUse" x1="1174" x2="1296" y1="0" y2="0"><stop offset="0" stop-color="#00ff04"/><stop offset="0.148" stop-color="#00ff00"/><stop offset="1" stop-color="#00ff00"/></linearGradient><linearGradient id="g13" gradientUnits="userSpaceOnUse" x1="1173" x2="1300" y1="0" y2="0"><stop offset="0" stop-color="#00ff05"/><stop offset="0.173" stop-color="#00ff00"/><stop offset="1" stop-color="#00ff00"/></linearGradient><linearGradient id="g14" gradientUnits="userSpaceOnUse" x1="1172" x2="1304" y1="0" y2="0"><stop offset="0" stop-color="#00ff06"/><stop offset="0.197" stop-color="#00ff00"/><stop offset="1" stop-color="#00ff00"/></linearGradient><linearGradient id="g15" gradientUnits="userSpaceOnUse" x1="1170" x2="1308" y1="0" y2="0"><stop offset="0" stop-color="#00ff07"/><stop offset="0.232" stop-color="#00ff00"/><stop offset="1" stop-color="#00ff00"/></linearGradient><linearGradient id="g16" gradientUnits="userSpaceOnUse" x1="1169" x2="1312" y1="0" y2="0"><stop offset="0" stop-color="#00ff08"/><stop offset="0.252" stop-color="#00ff00"/><stop offset="1" stop-color="#00ff00"/></linearGradient><linearGradient id="g17" gradientUnits="userSpaceOnUse" x1="1168" x2="1316" y1="0" y2="0"><stop offset="0" stop-color="#00ff09"/><stop offset="0.27" stop-color="#00ff00"/><stop offset="1" stop-color="#00ff00"/></linearGradient><linearGradient id="g18" gradientUnits="userSpaceOnUse" x1="1168" x2="1319" y1="0" y2="0"><stop offset="0" stop-color="#00ff0a"/><stop offset="0.291" stop-color="#00ff00"/><stop offset="1" stop-color="#00ff00"/></linearGradient><linearGradient id="g19" gradientUnits="userSpaceOnUse" x1="1167" x2="1323" y1="0" y2="0"><stop offset="0" stop-color="#00ff0a"/><stop offset="0.308" stop-color="#00ff00"/><stop offset="1" stop-color="#00ff00"/></linearGradient><linearGradient id="g20" gradientUnits="userSpaceOnUse" x1="1166" x2="1327" y1="0" y2="0"><stop offset="0" stop-color="#00ff0b"/><stop offset="0.323" stop-color="#00ff00"/><stop offset="1" stop-color="#00ff00"/></linearGradient><linearGradient id="g21" gradientUnits="userSpaceOnUse" x1="1165" x2="1330" y1="0" y2="0"><stop offset="0" stop-color="#00ff0c"/><stop offset="0.345" stop-color="#00ff00"/><stop offset="1" stop-color="#00ff00"/></linearGradient><linearGradient id="g22" gradientUnits="userSpaceOnUse" x1="1164" x2="1334" y1="0" y2="0"><stop offset="0" stop-color="#00ff0d"/><stop offset="0.359" stop-color="#00ff00"/><stop offset="1" stop-color="#00ff00"/></linearGradient><linearGradient id="g23" gradientUnits="userSpaceOnUse" x1="1163" x2="1337" y1="0" y2="0"><stop offset="0" stop-color="#00ff0e"/><stop offset="0.374" stop-color="#00ff00"/><stop offset="1" stop-color="#00ff00"/></linearGradient><linearGradient id="g24" gradientUnits="userSpaceOnUse" x1="1163" x2="1340" y1="0" y2="0"><stop offset="0" stop-color="#00ff0f"/><stop offset="0.39" stop-color="#00ff00"/><stop offset="1" stop-color="#00ff00"/></linearGradient><linearGradient id="g25" gradientUnits="userSpaceOnUse" x1="1162" x2="1344" y1="0" y2="0"><stop offset="0" stop-color="#00ff10"/><stop offset="0.401" stop-color="#00ff00"/><stop offset="1" stop-color="#00ff00"/></linearGradient><linearGradient id="g26" gradientUnits="userSpaceOnUse" x1="1161" x2="1347" y1="0" y2="0"><stop offset="0" stop-color="#00ff11"/><stop offset="0.414" stop-color="#00ff00"/><stop offset="1" stop-color="#00ff00"/></linearGradient><linearGradient id="g27" gradientUnits="userSpaceOnUse" x1="1161" x2="1350" y1="0" y2="0"><stop offset="0" stop-color="#00ff12"/><stop offset="0.429" stop-color="#00ff00"/><stop offset="1" stop-color="#00ff00"/></linearGradient><linearGradient id="g28" gradientUnits="userSpaceOnUse" x1="1160" x2="1354" y1="0" y2="0"><stop offset="0" stop-color="#00ff13"/><stop offset="0.438" stop-color="#00ff00"/><stop offset="1" stop-color="#00ff00"/></linearGradient><linearGradient id="g29" gradientUnits="userSpaceOnUse" x1="1160" x2="1357" y1="0" y2="0"><stop offset="0" stop-color="#00ff14"/><stop offset="0.447" stop-color="#00ff00"/><stop offset="1" stop-color="#00ff00"/></linearGradient><linearGradient id="g30" gradientUnits="userSpaceOnUse" x1="1159" x2="1360" y1="0" y2="0"><stop offset="0" stop-color="#00ff15"/><stop offset="0.463" stop-color="#00ff00"/><stop offset="1" stop-color="#00ff00"/></linearGradient><linearGradient id="g31" gradientUnits="userSpaceOnUse" x1="1159" x2="1363" y1="0" y2="0"><stop offset="0" stop-color="#00ff15"/><stop offset="0.471" stop-color="#00ff00"/><stop offset="1" stop-color="#00ff00"/></linearGradient><linearGradient id="g32" gradientUnits="userSpaceOnUse" x1="1158" x2="1366" y1="0" y2="0"><stop offset="0" stop-color="#00ff16"/><stop offset="0.481" stop-color="#00ff00"/><stop offset="1" stop-color="#00ff00"/></linearGradient><linearGradient id="g33" gradientUnits="userSpaceOnUse" x1="1158" x2="1370" y1="0" y2="0"><stop offset="0" stop-color="#00ff17"/><stop offset="0.491" stop-color="#00ff00"/><stop offset="1" stop-color="#00ff00"/></linearGradient><linearGradient id="g34" gradientUnits="userSpaceOnUse" x1="1157" x2="1373" y1="0" y2="0"><stop offset="0" stop-color="#00ff18"/><stop offset="0.5" stop-color="#00ff00"/><stop offset="1" stop-color="#00ff00"/></linearGradient><linearGradient id="g35" gradientUnits="userSpaceOnUse" x1="1157" x2="1376" y1="0" y2="0"><stop offset="0" stop-color="#00ff19"/><stop offset="0.507" stop-color="#00ff00"/><stop offset="1" stop-color="#00ff00"/></linearGradient><linearGradient id="g36" gradientUnits="userSpaceOnUse" x1="1157" x2="1379" y1="0" y2="0"><stop offset="0" stop-color="#00ff1a"/><stop offset="0.518" stop-color="#00ff00"/><stop offset="1" stop-color="#00ff00"/></linearGradient><linearGradient id="g37" gradientUnits="userSpaceOnUse" x1="1156" x2="1382" y1="0" y2="0"><stop offset="0" stop-color="#00ff1b"/><stop offset="0.527" stop-color="#00ff00"/><stop offset="1" stop-color="#00ff00"/></linearGradient><linearGradient id="g38" gradientUnits="userSpaceOnUse" x1="1156" x2="1385" y1="0" y2="0"><stop offset="0" stop-color="#00ff1c"/><stop offset="0.533" stop-color="#00ff00"/><stop offset="1" stop-color="#00ff00"/></linearGradient><linearGradient id="g39" gradientUnits="userSpaceOnUse" x1="1156" x2="1388" y1="0" y2="0"><stop offset="0" stop-color="#00ff1d"/><stop offset="0.543" stop-color="#00ff00"/><stop offset="1" stop-color="#00ff00"/></linearGradient><linearGradient id="g40" gradientUnits="userSpaceOnUse" x1="1155" x2="1391" y1="0" y2="0"><stop offset="0" stop-color="#00ff1e"/><stop offset="0.551" stop-color="#00ff00"/><stop offset="1" stop-color="#00ff00"/></linearGradient><linearGradient id="g41" gradientUnits="userSpaceOnUse" x1="1155" x2="1394" y1="0" y2="0"><stop offset="0" stop-color="#00ff1f"/><stop offset="0.556" stop-color="#00ff00"/><stop offset="1" stop-color="#00ff00"/></linearGradient><linearGradient id="g42" gradientUnits="userSpaceOnUse" x1="1155" x2="1396" y1="0" y2="0"><stop offset="0" stop-color="#00ff20"/><stop offset="0.568" stop-color="#00ff00"/><stop offset="1" stop-color="#00ff00"/></linearGradient><linearGradient id="g43" gradientUnits="userSpaceOnUse" x1="1155" x2="1399" y1="0" y2="0"><stop offset="0" stop-color="#00ff21"/><stop offset="0.574" stop-color="#00ff00"/><stop offset="1" stop-color="#00ff00"/></linearGradient><linearGradient id="g44" gradientUnits="userSpaceOnUse" x1="1154" x2="1402" y1="0" y2="0"><stop offset="0" stop-color="#00ff22"/><stop offset="0.581" stop-color="#00ff00"/><stop offset="1" stop-color="#00ff00"/></linearGradient><linearGradient id="g45" gradientUnits="userSpaceOnUse" x1="1154" x2="1405" y1="0" y2="0"><stop offset="0" stop-color="#00ff23"/><stop offset="0.59" stop-color="#00ff00"/><stop offset="1" stop-color="#00ff00"/></linearGradient><linearGradient id="g46" gradientUnits="userSpaceOnUse" x1="1154" x2="1408" y1="0" y2="0"><stop offset="0" stop-color="#00ff23"/><stop offset="0.594" stop-color="#00ff00"/><stop offset="1" stop-color="#00ff00"/></linearGradient><linearGradient id="g47" gradientUnits="userSpaceOnUse" x1="1154" x2="1411" y1="0" y2="0"><stop offset="0" stop-color="#00ff24"/><stop offset="0.599" stop-color="#00ff00"/><stop offset="1" stop-color="#00ff00"/></linearGradient><linearGradient id="g48" gradientUnits="userSpaceOnUse" x1="1154" x2="1414" y1="0" y2="0"><stop offset="0" stop-color="#00ff25"/><stop offset="0.608" stop-color="#00ff00"/><stop offset="1" stop-color="#00ff00"/></linearGradient><linearGradient id="g49" gradientUnits="userSpaceOnUse" x1="1153" x2="1416" y1="0" y2="0"><stop offset="0" stop-color="#00ff26"/><stop offset="0.616" stop-color="#00ff00"/><stop offset="1" stop-color="#00ff00"/></linearGradient><linearGradient id="g50" gradientUnits="userSpaceOnUse" x1="1153" x2="1419" y1="0" y2="0"><stop offset="0" stop-color="#00ff27"/><stop offset="0.62" stop-color="#00ff00"/><stop offset="1" stop-color="#00ff00"/></linearGradient><linearGradient id="g51" gradientUnits="userSpaceOnUse" x1="1153" x2="1422" y1="0" y2="0"><stop offset="0" stop-color="#00ff28"/><stop offset="0.628" stop-color="#00ff00"/><stop offset="1" stop-color="#02ff00"/></linearGradient><linearGradient id="g52" gradientUnits="userSpaceOnUse" x1="1153" x2="1425" y1="0" y2="0"><stop offset="0" stop-color="#00ff29"/><stop offset="0.632" stop-color="#00ff00"/><stop offset="0.982" stop-color="#00ff00"/><stop offset="1" stop-color="#06ff00"/></linearGradient><linearGradient id="g53" gradientUnits="userSpaceOnUse" x1="1153" x2="1428" y1="0" y2="0"><stop offset="0" stop-color="#00ff2a"/><stop offset="0.636" stop-color="#00ff00"/><stop offset="0.967" stop-color="#00ff00"/><stop offset="1" stop-color="#0bff00"/></linearGradient><linearGradient id="g54" gradientUnits="userSpaceOnUse" x1="1153" x2="1430" y1="0" y2="0"><stop offset="0" stop-color="#00ff2b"/><stop offset="0.646" stop-color="#00ff00"/><stop offset="0.957" stop-color="#00ff00"/><stop offset="1" stop-color="#0fff00"/></linearGradient><linearGradient id="g55" gradientUnits="userSpaceOnUse" x1="1153" x2="1433" y1="0" y2="0"><stop offset="0" stop-color="#00ff2c"/><stop offset="0.65" stop-color="#00ff00"/><stop offset="0.943" stop-color="#00ff00"/><stop offset="1" stop-color="#13ff00"/></linearGradient><linearGradient id="g56" gradientUnits="userSpaceOnUse" x1="1153" x2="1436" y1="0" y2="0"><stop offset="0" stop-color="#00ff2d"/><stop offset="0.364" stop-color="#00ff17"/><stop offset="0.654" stop-color="#00ff00"/><stop offset="0.933" stop-color="#00ff00"/><stop offset="1" stop-color="#18ff00"/></linearGradient><linearGradient id="g57" gradientUnits="userSpaceOnUse" x1="1152" x2="1439" y1="0" y2="0"><stop offset="0" stop-color="#00ff2f"/><stop offset="0.662" stop-color="#00ff00"/><stop offset="0.92" stop-color="#00ff00"/><stop offset="1" stop-color="#1dff00"/></linearGradient><linearGradient id="g58" gradientUnits="userSpaceOnUse" x1="1152" x2="1442" y1="0" y2="0"><stop offset="0" stop-color="#00ff30"/><stop offset="0.666" stop-color="#00ff00"/><stop offset="0.907" stop-color="#00ff00"/><stop offset="1" stop-color="#22ff00"/></linearGradient><linearGradient id="g59" gradientUnits="userSpaceOnUse" x1="1152" x2="1444" y1="0" y2="0"><stop offset="0" stop-color="#00ff31"/><stop offset="0.315" stop-color="#00ff1d"/><stop offset="0.671" stop-color="#00ff00"/><stop offset="0.897" stop-color="#00ff00"/><stop offset="1" stop-color="#26ff00"/></linearGradient><linearGradient id="g60" gradientUnits="userSpaceOnUse" x1="1152" x2="1447" y1="0" y2="0"><stop offset="0" stop-color="#00ff32"/><stop offset="0.447" stop-color="#00ff14"/><stop offset="0.675" stop-color="#00ff00"/><stop offset="0.888" stop-color="#00ff00"/><stop offset="1" stop-color="#2bff00"/></linearGradient><linearGradient id="g61" gradientUnits="userSpaceOnUse" x1="1152" x2="1450" y1="0" y2="0"><stop offset="0" stop-color="#00ff33"/><stop offset="0.456" stop-color="#00ff14"/><stop offset="0.681" stop-color="#00ff00"/><stop offset="0.876" stop-color="#00ff00"/><stop offset="1" stop-color="#31ff00"/></linearGradient><linearGradient id="g62" gradientUnits="userSpaceOnUse" x1="1152" x2="1453" y1="0" y2="0"><stop offset="0" stop-color="#00ff34"/><stop offset="0.389" stop-color="#00ff1a"/><stop offset="0.684" stop-color="#00ff00"/><stop offset="0.864" stop-color="#00ff00"/><stop offset="1" stop-color="#36ff00"/></linearGradient><linearGradient id="g63" gradientUnits="userSpaceOnUse" x1="1152" x2="1455" y1="0" y2="0"><stop offset="0" stop-color="#00ff35"/><stop offset="0.413" stop-color="#00ff19"/><stop offset="0.69" stop-color="#00ff00"/><stop offset="0.855" stop-color="#00ff00"/><stop offset="1" stop-color="#3aff00"/></linearGradient><linearGradient id="g64" gradientUnits="userSpaceOnUse" x1="1152" x2="1458" y1="0" y2="0"><stop offset="0" stop-color="#00ff36"/><stop offset="0.435" stop-color="#00ff18"/><stop offset="0.696" stop-color="#00ff00"/><stop offset="0.846" stop-color="#00ff00"/><stop offset="1" stop-color="#40ff00"/></linearGradient><linearGradient id="g65" gradientUnits="userSpaceOnUse" x1="1152" x2="1461" y1="0" y2="0"><stop offset="0" stop-color="#00ff37"/><stop offset="0.395" stop-color="#00ff1c"/><stop offset="0.699" stop-color="#00ff00"/><stop offset="0.835" stop-color="#00ff00"/><stop offset="1" stop-color="#46ff00"/></linearGradient><linearGradient id="g66" gradientUnits="userSpaceOnUse" x1="1152" x2="1463" y1="0" y2="0"><stop offset="0" stop-color="#00ff38"/><stop offset="0.418" stop-color="#00ff1b"/><stop offset="0.704" stop-color="#00ff00"/><stop offset="0.826" stop-color="#00ff00"/><stop offset="1" stop-color="#4aff00"/></linearGradient><linearGradient id="g67" gradientUnits="userSpaceOnUse" x1="1152" x2="1466" y1="0" y2="0"><stop offset="0" stop-color="#00ff39"/><stop offset="0.379" stop-color="#00ff1f"/><stop offset="0.71" stop-color="#00ff00"/><stop offset="0.818" stop-color="#00ff00"/><stop offset="1" stop-color="#50ff00"/></linearGradient><linearGradient id="g68" gradientUnits="userSpaceOnUse" x1="1152" x2="1469" y1="0" y2="0"><stop offset="0" stop-color="#00ff3a"/><stop offset="0.413" stop-color="#00ff1d"/><stop offset="0.713" stop-color="#00ff00"/><stop offset="0.808" stop-color="#00ff00"/><stop offset="1" stop-color="#57ff00"/></linearGradient><linearGradient id="g69" gradientUnits="userSpaceOnUse" x1="1152" x2="1472" y1="0" y2="0"><stop offset="0" stop-color="#00ff3c"/><stop offset="0.388" stop-color="#00ff20"/><stop offset="0.716" stop-color="#00ff00"/><stop offset="0.797" stop-color="#00ff00"/><stop offset="1" stop-color="#5dff00"/></linearGradient><linearGradient id="g70" gradientUnits="userSpaceOnUse" x1="1153" x2="1474" y1="0" y2="0"><stop offset="0" stop-color="#00ff3d"/><stop offset="0.421" stop-color="#00ff1e"/><stop offset="0.723" stop-color="#00ff00"/><stop offset="0.788" stop-color="#00ff00"/><stop offset="0.888" stop-color="#2bff00"/><stop offset="1" stop-color="#62ff00"/></linearGradient><linearGradient id="g71" gradientUnits="userSpaceOnUse" x1="1153" x2="1477" y1="0" y2="0"><stop offset="0" stop-color="#00ff3e"/><stop offset="0.395" stop-color="#00ff21"/><stop offset="0.725" stop-color="#00ff00"/><stop offset="0.781" stop-color="#00ff00"/><stop offset="0.898" stop-color="#35ff00"/><stop offset="1" stop-color="#69ff00"/></linearGradient><linearGradient id="g72" gradientUnits="userSpaceOnUse" x1="1153" x2="1480" y1="0" y2="0"><stop offset="0" stop-color="#00ff3f"/><stop offset="0.382" stop-color="#00ff23"/><stop offset="0.728" stop-color="#00ff00"/><stop offset="0.771" stop-color="#00ff00"/><stop offset="0.875" stop-color="#2fff00"/><stop offset="1" stop-color="#6fff00"/></linearGradient><linearGradient id="g73" gradientUnits="userSpaceOnUse" x1="1153" x2="1482" y1="0" y2="0"><stop offset="0" stop-color="#00ff40"/><stop offset="0.371" stop-color="#00ff25"/><stop offset="0.763" stop-color="#00ff00"/><stop offset="0.86" stop-color="#2cff00"/><stop offset="1" stop-color="#75ff00"/></linearGradient><linearGradient id="g74" gradientUnits="userSpaceOnUse" x1="1153" x2="1485" y1="0" y2="0"><stop offset="0" stop-color="#00ff41"/><stop offset="0.358" stop-color="#00ff27"/><stop offset="0.753" stop-color="#00ff00"/><stop offset="0.898" stop-color="#44ff00"/><stop offset="1" stop-color="#7cff00"/></linearGradient><linearGradient id="g75" gradientUnits="userSpaceOnUse" x1="1153" x2="1488" y1="0" y2="0"><stop offset="0" stop-color="#00ff42"/><stop offset="0.403" stop-color="#00ff24"/><stop offset="0.746" stop-color="#00ff00"/><stop offset="0.887" stop-color="#44ff00"/><stop offset="1" stop-color="#83ff00"/></linearGradient><linearGradient id="g76" gradientUnits="userSpaceOnUse" x1="1153" x2="1490" y1="0" y2="0"><stop offset="0" stop-color="#00ff44"/><stop offset="0.404" stop-color="#00ff25"/><stop offset="0.739" stop-color="#00ff01"/><stop offset="0.878" stop-color="#44ff00"/><stop offset="1" stop-color="#89ff00"/></linearGradient><linearGradient id="g77" gradientUnits="userSpaceOnUse" x1="1153" x2="1493" y1="0" y2="0"><stop offset="0" stop-color="#00ff45"/><stop offset="0.403" stop-color="#00ff26"/><stop offset="0.729" stop-color="#00ff03"/><stop offset="0.868" stop-color="#44ff00"/><stop offset="1" stop-color="#91ff00"/></linearGradient><linearGradient id="g78" gradientUnits="userSpaceOnUse" x1="1153" x2="1496" y1="0" y2="0"><stop offset="0" stop-color="#00ff46"/><stop offset="0.347" stop-color="#00ff2c"/><stop offset="0.72" stop-color="#00ff05"/><stop offset="0.752" stop-color="#0fff00"/><stop offset="0.857" stop-color="#44ff00"/><stop offset="1" stop-color="#98ff00"/></linearGradient><linearGradient id="g79" gradientUnits="userSpaceOnUse" x1="1153" x2="1498" y1="0" y2="0"><stop offset="0" stop-color="#00ff47"/><stop offset="0.359" stop-color="#00ff2c"/><stop offset="0.716" stop-color="#00ff06"/><stop offset="0.759" stop-color="#15ff00"/><stop offset="0.849" stop-color="#44ff00"/><stop offset="1" stop-color="#9fff00"/></linearGradient><linearGradient id="g80" gradientUnits="userSpaceOnUse" x1="1153" x2="1501" y1="0" y2="0"><stop offset="0" stop-color="#00ff49"/><stop offset="0.371" stop-color="#00ff2c"/><stop offset="0.707" stop-color="#00ff07"/><stop offset="0.761" stop-color="#1bff00"/><stop offset="0.862" stop-color="#51ff00"/><stop offset="1" stop-color="#a7ff00"/></linearGradient><linearGradient id="g81" gradientUnits="userSpaceOnUse" x1="1154" x2="1504" y1="0" y2="0"><stop offset="0" stop-color="#00ff4a"/><stop offset="0.38" stop-color="#00ff2c"/><stop offset="0.697" stop-color="#00ff09"/><stop offset="0.763" stop-color="#21ff00"/><stop offset="0.837" stop-color="#49ff00"/><stop offset="1" stop-color="#afff00"/></linearGradient><linearGradient id="g82" gradientUnits="userSpaceOnUse" x1="1154" x2="1506" y1="0" y2="0"><stop offset="0" stop-color="#00ff4b"/><stop offset="0.392" stop-color="#00ff2c"/><stop offset="0.693" stop-color="#00ff0a"/><stop offset="0.77" stop-color="#28ff00"/><stop offset="0.864" stop-color="#5dff00"/><stop offset="1" stop-color="#b6ff00"/></linearGradient><linearGradient id="g83" gradientUnits="userSpaceOnUse" x1="1154" x2="1509" y1="0" y2="0"><stop offset="0" stop-color="#00ff4c"/><stop offset="0.361" stop-color="#00ff30"/><stop offset="0.685" stop-color="#00ff0c"/><stop offset="0.772" stop-color="#2eff00"/><stop offset="0.845" stop-color="#58ff00"/><stop offset="1" stop-color="#bfff00"/></linearGradient><linearGradient id="g84" gradientUnits="userSpaceOnUse" x1="1154" x2="1512" y1="0" y2="0"><stop offset="0" stop-color="#00ff4e"/><stop offset="0.383" stop-color="#00ff2f"/><stop offset="0.676" stop-color="#00ff0e"/><stop offset="0.774" stop-color="#34ff00"/><stop offset="0.846" stop-color="#5fff00"/><stop offset="1" stop-color="#c8ff00"/></linearGradient><linearGradient id="g85" gradientUnits="userSpaceOnUse" x1="1154" x2="1514" y1="0" y2="0"><stop offset="0" stop-color="#00ff4f"/><stop offset="0.364" stop-color="#00ff32"/><stop offset="0.669" stop-color="#00ff10"/><stop offset="0.781" stop-color="#3cff00"/><stop offset="0.831" stop-color="#5aff00"/><stop offset="0.931" stop-color="#9cff00"/><stop offset="1" stop-color="#d0ff00"/></linearGradient><linearGradient id="g86" gradientUnits="userSpaceOnUse" x1="1154" x2="1517" y1="0" y2="0"><stop offset="0" stop-color="#00ff50"/><stop offset="0.333" stop-color="#00ff36"/><stop offset="0.664" stop-color="#00ff11"/><stop offset="0.782" stop-color="#43ff00"/><stop offset="0.846" stop-color="#6aff00"/><stop offset="1" stop-color="#d9ff00"/></linearGradient><linearGradient id="g87" gradientUnits="userSpaceOnUse" x1="1155" x2="1520" y1="0" y2="0"><stop offset="0" stop-color="#00ff52"/><stop offset="0.364" stop-color="#00ff34"/><stop offset="0.655" stop-color="#00ff13"/><stop offset="0.784" stop-color="#4aff00"/><stop offset="0.855" stop-color="#77ff00"/><stop offset="1" stop-color="#e3ff00"/></linearGradient><linearGradient id="g88" gradientUnits="userSpaceOnUse" x1="1155" x2="1522" y1="0" y2="0"><stop offset="0" stop-color="#00ff53"/><stop offset="0.357" stop-color="#00ff36"/><stop offset="0.649" stop-color="#00ff15"/><stop offset="0.79" stop-color="#52ff00"/><stop offset="0.837" stop-color="#70ff00"/><stop offset="0.924" stop-color="#aeff00"/><stop offset="1" stop-color="#ebff00"/></linearGradient><linearGradient id="g89" gradientUnits="userSpaceOnUse" x1="1155" x2="1525" y1="0" y2="0"><stop offset="0" stop-color="#00ff54"/><stop offset="0.349" stop-color="#00ff38"/><stop offset="0.641" stop-color="#00ff16"/><stop offset="0.792" stop-color="#59ff00"/><stop offset="0.832" stop-color="#74ff00"/><stop offset="0.922" stop-color="#b5ff00"/><stop offset="1" stop-color="#f6ff00"/></linearGradient><linearGradient id="g90" gradientUnits="userSpaceOnUse" x1="1155" x2="1528" y1="0" y2="0"><stop offset="0" stop-color="#00ff56"/><stop offset="0.34" stop-color="#00ff3a"/><stop offset="0.635" stop-color="#00ff18"/><stop offset="0.794" stop-color="#61ff00"/><stop offset="0.831" stop-color="#7aff00"/><stop offset="0.914" stop-color="#b8ff00"/><stop offset="1" stop-color="#fffe00"/></linearGradient><linearGradient id="g91" gradientUnits="userSpaceOnUse" x1="1155" x2="1530" y1="0" y2="0"><stop offset="0" stop-color="#00ff57"/><stop offset="0.333" stop-color="#00ff3c"/><stop offset="0.629" stop-color="#00ff1a"/><stop offset="0.712" stop-color="#30ff0e"/><stop offset="0.8" stop-color="#6aff00"/><stop offset="0.885" stop-color="#a8ff00"/><stop offset="0.989" stop-color="#ffff00"/><stop offset="1" stop-color="#fff500"/></linearGradient><linearGradient id="g92" gradientUnits="userSpaceOnUse" x1="1155" x2="1533" y1="0" y2="0"><stop offset="0" stop-color="#00ff59"/><stop offset="0.336" stop-color="#00ff3d"/><stop offset="0.622" stop-color="#00ff1c"/><stop offset="0.728" stop-color="#3fff0c"/><stop offset="0.807" stop-color="#75ff00"/><stop offset="0.884" stop-color="#afff00"/><stop offset="0.976" stop-color="#feff00"/><stop offset="1" stop-color="#ffeb00"/></linearGradient><linearGradient id="g93" gradientUnits="userSpaceOnUse" x1="1156" x2="1536" y1="0" y2="0"><stop offset="0" stop-color="#00ff5a"/><stop offset="0.337" stop-color="#00ff3e"/><stop offset="0.613" stop-color="#00ff1d"/><stop offset="0.718" stop-color="#3fff0e"/><stop offset="0.808" stop-color="#7dff00"/><stop offset="0.895" stop-color="#c1ff00"/><stop offset="0.963" stop-color="#fdff00"/><stop offset="1" stop-color="#ffe100"/></linearGradient><linearGradient id="g94" gradientUnits="userSpaceOnUse" x1="1156" x2="1538" y1="0" y2="0"><stop offset="0" stop-color="#00ff5c"/><stop offset="0.351" stop-color="#00ff3e"/><stop offset="0.61" stop-color="#00ff1f"/><stop offset="0.694" stop-color="#33ff13"/><stop offset="0.78" stop-color="#6eff05"/><stop offset="0.809" stop-color="#84ff00"/><stop offset="0.874" stop-color="#b7ff00"/><stop offset="0.955" stop-color="#ffff00"/><stop offset="1" stop-color="#ffda00"/></linearGradient><linearGradient id="g95" gradientUnits="userSpaceOnUse" x1="1156" x2="1541" y1="0" y2="0"><stop offset="0" stop-color="#00ff5d"/><stop offset="0.294" stop-color="#00ff45"/><stop offset="0.603" stop-color="#00ff21"/><stop offset="0.694" stop-color="#38ff14"/><stop offset="0.782" stop-color="#76ff05"/><stop offset="0.852" stop-color="#adff00"/><stop offset="0.943" stop-color="#feff00"/><stop offset="1" stop-color="#ffd100"/></linearGradient><linearGradient id="g96" gradientUnits="userSpaceOnUse" x1="1156" x2="1544" y1="0" y2="0"><stop offset="0" stop-color="#00ff5f"/><stop offset="0.327" stop-color="#00ff43"/><stop offset="0.595" stop-color="#00ff23"/><stop offset="0.668" stop-color="#2cff19"/><stop offset="0.753" stop-color="#67ff0b"/><stop offset="0.812" stop-color="#95ff00"/><stop offset="0.933" stop-color="#ffff00"/><stop offset="0.961" stop-color="#ffe500"/><stop offset="1" stop-color="#ffc900"/></linearGradient><linearGradient id="g97" gradientUnits="userSpaceOnUse" x1="1157" x2="1546" y1="0" y2="0"><stop offset="0" stop-color="#00ff60"/><stop offset="0.35" stop-color="#00ff42"/><stop offset="0.591" stop-color="#00ff25"/><stop offset="0.753" stop-color="#6dff0c"/><stop offset="0.817" stop-color="#a0ff00"/><stop offset="0.923" stop-color="#feff00"/><stop offset="0.949" stop-color="#ffe800"/><stop offset="1" stop-color="#ffc300"/></linearGradient><linearGradient id="g98" gradientUnits="userSpaceOnUse" x1="1157" x2="1549" y1="0" y2="0"><stop offset="0" stop-color="#00ff61"/><stop offset="0.324" stop-color="#00ff46"/><stop offset="0.584" stop-color="#00ff27"/><stop offset="0.724" stop-color="#5eff11"/><stop offset="0.819" stop-color="#a9ff00"/><stop offset="0.911" stop-color="#fdff00"/><stop offset="0.974" stop-color="#ffcb00"/><stop offset="1" stop-color="#ffbb00"/></linearGradient><linearGradient id="g99" gradientUnits="userSpaceOnUse" x1="1157" x2="1551" y1="0" y2="0"><stop offset="0" stop-color="#00ff63"/><stop offset="0.358" stop-color="#00ff44"/><stop offset="0.579" stop-color="#00ff29"/><stop offset="0.723" stop-color="#62ff12"/><stop offset="0.822" stop-color="#b3ff00"/><stop offset="0.904" stop-color="#ffff00"/><stop offset="0.957" stop-color="#ffd100"/><stop offset="1" stop-color="#ffb500"/></linearGradient><linearGradient id="g100" gradientUnits="userSpaceOnUse" x1="1157" x2="1554" y1="0" y2="0"><stop offset="0" stop-color="#00ff65"/><stop offset="0.343" stop-color="#00ff47"/><stop offset="0.572" stop-color="#00ff2b"/><stop offset="0.635" stop-color="#28ff22"/><stop offset="0.723" stop-color="#68ff13"/><stop offset="0.826" stop-color="#bfff00"/><stop offset="0.892" stop-color="#feff00"/><stop offset="0.952" stop-color="#ffcc00"/><stop offset="1" stop-color="#ffae00"/></linearGradient><linearGradient id="g101" gradientUnits="userSpaceOnUse" x1="1157" x2="1557" y1="0" y2="0"><stop offset="0" stop-color="#00ff66"/><stop offset="0.338" stop-color="#00ff49"/><stop offset="0.568" stop-color="#00ff2d"/><stop offset="0.657" stop-color="#3dff1f"/><stop offset="0.762" stop-color="#8fff0d"/><stop offset="0.828" stop-color="#c9ff00"/><stop offset="0.882" stop-color="#ffff00"/><stop offset="0.932" stop-color="#ffd200"/><stop offset="1" stop-color="#ffa700"/></linearGradient><linearGradient id="g102" gradientUnits="userSpaceOnUse" x1="1158" x2="1559" y1="0" y2="0"><stop offset="0" stop-color="#00ff68"/><stop offset="0.332" stop-color="#00ff4b"/><stop offset="0.561" stop-color="#00ff2f"/><stop offset="0.651" stop-color="#3dff21"/><stop offset="0.743" stop-color="#85ff12"/><stop offset="0.83" stop-color="#d4ff00"/><stop offset="0.873" stop-color="#feff00"/><stop offset="0.933" stop-color="#ffcb00"/><stop offset="1" stop-color="#ffa200"/></linearGradient><linearGradient id="g103" gradientUnits="userSpaceOnUse" x1="1158" x2="1562" y1="0" y2="0"><stop offset="0" stop-color="#00ff69"/><stop offset="0.257" stop-color="#00ff54"/><stop offset="0.554" stop-color="#00ff31"/><stop offset="0.641" stop-color="#3bff24"/><stop offset="0.72" stop-color="#79ff16"/><stop offset="0.834" stop-color="#e1ff00"/><stop offset="0.864" stop-color="#fffe00"/><stop offset="0.928" stop-color="#ffc600"/><stop offset="1" stop-color="#ff9b00"/></linearGradient><linearGradient id="g104" gradientUnits="userSpaceOnUse" x1="1158" x2="1565" y1="0" y2="0"><stop offset="0" stop-color="#00ff6b"/><stop offset="0.342" stop-color="#00ff4d"/><stop offset="0.548" stop-color="#00ff33"/><stop offset="0.634" stop-color="#3bff26"/><stop offset="0.727" stop-color="#86ff16"/><stop offset="0.803" stop-color="#ccff07"/><stop offset="0.853" stop-color="#ffff00"/><stop offset="0.885" stop-color="#ffe000"/><stop offset="0.921" stop-color="#ffc300"/><stop offset="1" stop-color="#ff9500"/></linearGradient><linearGradient id="g105" gradientUnits="userSpaceOnUse" x1="1158" x2="1567" y1="0" y2="0"><stop offset="0" stop-color="#00ff6d"/><stop offset="0.347" stop-color="#00ff4e"/><stop offset="0.545" stop-color="#00ff35"/><stop offset="0.628" stop-color="#3bff28"/><stop offset="0.711" stop-color="#7eff1a"/><stop offset="0.778" stop-color="#baff0d"/><stop offset="0.844" stop-color="#feff00"/><stop offset="0.917" stop-color="#ffc000"/><stop offset="1" stop-color="#ff9100"/></linearGradient><linearGradient id="g106" gradientUnits="userSpaceOnUse" x1="1159" x2="1570" y1="0" y2="0"><stop offset="0" stop-color="#00ff6e"/><stop offset="0.275" stop-color="#00ff57"/><stop offset="0.538" stop-color="#00ff37"/><stop offset="0.618" stop-color="#39ff2b"/><stop offset="0.693" stop-color="#76ff1e"/><stop offset="0.769" stop-color="#bbff10"/><stop offset="0.835" stop-color="#ffff02"/><stop offset="0.869" stop-color="#ffdd00"/><stop offset="0.903" stop-color="#ffc200"/><stop offset="0.951" stop-color="#ffa300"/><stop offset="1" stop-color="#ff8b00"/></linearGradient><linearGradient id="g107" gradientUnits="userSpaceOnUse" x1="1159" x2="1573" y1="0" y2="0"><stop offset="0" stop-color="#00ff70"/><stop offset="0.251" stop-color="#00ff5b"/><stop offset="0.531" stop-color="#00ff39"/><stop offset="0.594" stop-color="#2cff30"/><stop offset="0.674" stop-color="#6cff23"/><stop offset="0.761" stop-color="#bcff12"/><stop offset="0.824" stop-color="#feff05"/><stop offset="0.855" stop-color="#ffe000"/><stop offset="0.906" stop-color="#ffb800"/><stop offset="1" stop-color="#ff8500"/></linearGradient><linearGradient id="g108" gradientUnits="userSpaceOnUse" x1="1159" x2="1575" y1="0" y2="0"><stop offset="0" stop-color="#00ff72"/><stop offset="0.279" stop-color="#00ff5a"/><stop offset="0.526" stop-color="#00ff3c"/><stop offset="0.603" stop-color="#37ff30"/><stop offset="0.683" stop-color="#79ff23"/><stop offset="0.743" stop-color="#b1ff17"/><stop offset="0.817" stop-color="#fffe07"/><stop offset="0.846" stop-color="#ffe100"/><stop offset="0.894" stop-color="#ffba00"/><stop offset="0.945" stop-color="#ff9b00"/><stop offset="1" stop-color="#ff8100"/></linearGradient><linearGradient id="g109" gradientUnits="userSpaceOnUse" x1="1160" x2="1578" y1="0" y2="0"><stop offset="0" stop-color="#00ff73"/><stop offset="0.244" stop-color="#00ff5f"/><stop offset="0.522" stop-color="#00ff3e"/><stop offset="0.593" stop-color="#35ff33"/><stop offset="0.667" stop-color="#73ff26"/><stop offset="0.742" stop-color="#b9ff18"/><stop offset="0.806" stop-color="#ffff0a"/><stop offset="0.847" stop-color="#ffd700"/><stop offset="0.888" stop-color="#ffb700"/><stop offset="0.943" stop-color="#ff9600"/><stop offset="1" stop-color="#ff7c00"/></linearGradient><linearGradient id="g110" gradientUnits="userSpaceOnUse" x1="1160" x2="1581" y1="0" y2="0"><stop offset="0" stop-color="#00ff75"/><stop offset="0.261" stop-color="#00ff5f"/><stop offset="0.515" stop-color="#00ff40"/><stop offset="0.584" stop-color="#33ff36"/><stop offset="0.656" stop-color="#6fff2a"/><stop offset="0.722" stop-color="#aeff1d"/><stop offset="0.798" stop-color="#fffe0d"/><stop offset="0.838" stop-color="#ffd503"/><stop offset="0.881" stop-color="#ffb400"/><stop offset="0.931" stop-color="#ff9600"/><stop offset="1" stop-color="#ff7700"/></linearGradient><linearGradient id="g111" gradientUnits="userSpaceOnUse" x1="1160" x2="1583" y1="0" y2="0"><stop offset="0" stop-color="#00ff77"/><stop offset="0.26" stop-color="#00ff61"/><stop offset="0.511" stop-color="#00ff43"/><stop offset="0.577" stop-color="#31ff39"/><stop offset="0.66" stop-color="#78ff2b"/><stop offset="0.728" stop-color="#bbff1d"/><stop offset="0.79" stop-color="#ffff10"/><stop offset="0.823" stop-color="#ffdc07"/><stop offset="0.853" stop-color="#ffc200"/><stop offset="0.877" stop-color="#ffb100"/><stop offset="0.931" stop-color="#ff9100"/><stop offset="1" stop-color="#ff7300"/></linearGradient><linearGradient id="g112" gradientUnits="userSpaceOnUse" x1="1161" x2="1586" y1="0" y2="0"><stop offset="0" stop-color="#00ff79"/><stop offset="0.266" stop-color="#00ff62"/><stop offset="0.506" stop-color="#00ff45"/><stop offset="0.567" stop-color="#2fff3b"/><stop offset="0.647" stop-color="#74ff2e"/><stop offset="0.715" stop-color="#b7ff21"/><stop offset="0.779" stop-color="#feff13"/><stop offset="0.824" stop-color="#ffd207"/><stop offset="0.871" stop-color="#ffae00"/><stop offset="0.934" stop-color="#ff8a00"/><stop offset="1" stop-color="#ff6f00"/></linearGradient><linearGradient id="g113" gradientUnits="userSpaceOnUse" x1="1161" x2="1588" y1="0" y2="0"><stop offset="0" stop-color="#00ff7a"/><stop offset="0.265" stop-color="#00ff64"/><stop offset="0.501" stop-color="#00ff47"/><stop offset="0.557" stop-color="#2bff3f"/><stop offset="0.649" stop-color="#7bff2f"/><stop offset="0.71" stop-color="#b8ff24"/><stop offset="0.773" stop-color="#fffe16"/><stop offset="0.808" stop-color="#ffd90c"/><stop offset="0.871" stop-color="#ffa800"/><stop offset="0.923" stop-color="#ff8b00"/><stop offset="1" stop-color="#ff6b00"/></linearGradient><linearGradient id="g114" gradientUnits="userSpaceOnUse" x1="1161" x2="1591" y1="0" y2="0"><stop offset="0" stop-color="#00ff7c"/><stop offset="0.253" stop-color="#00ff67"/><stop offset="0.495" stop-color="#00ff4a"/><stop offset="0.549" stop-color="#29ff42"/><stop offset="0.637" stop-color="#77ff33"/><stop offset="0.698" stop-color="#b4ff27"/><stop offset="0.763" stop-color="#feff19"/><stop offset="0.819" stop-color="#ffc709"/><stop offset="0.877" stop-color="#ff9e00"/><stop offset="0.93" stop-color="#ff8200"/><stop offset="1" stop-color="#ff6700"/></linearGradient><linearGradient id="g115" gradientUnits="userSpaceOnUse" x1="1161" x2="1594" y1="0" y2="0"><stop offset="0" stop-color="#00ff7e"/><stop offset="0.273" stop-color="#00ff67"/><stop offset="0.49" stop-color="#00ff4c"/><stop offset="0.538" stop-color="#25ff45"/><stop offset="0.626" stop-color="#73ff36"/><stop offset="0.681" stop-color="#abff2c"/><stop offset="0.755" stop-color="#fffe1c"/><stop offset="0.792" stop-color="#ffd610"/><stop offset="0.861" stop-color="#ffa100"/><stop offset="0.915" stop-color="#ff8400"/><stop offset="1" stop-color="#ff6300"/></linearGradient><linearGradient id="g116" gradientUnits="userSpaceOnUse" x1="1162" x2="1596" y1="0" y2="0"><stop offset="0" stop-color="#00ff80"/><stop offset="0.26" stop-color="#00ff6a"/><stop offset="0.486" stop-color="#00ff4e"/><stop offset="0.588" stop-color="#55ff3f"/><stop offset="0.634" stop-color="#81ff37"/><stop offset="0.689" stop-color="#bbff2c"/><stop offset="0.747" stop-color="#ffff1f"/><stop offset="0.79" stop-color="#ffd011"/><stop offset="0.853" stop-color="#ffa103"/><stop offset="0.903" stop-color="#ff8500"/><stop offset="1" stop-color="#ff5f00"/></linearGradient><linearGradient id="g117" gradientUnits="userSpaceOnUse" x1="1162" x2="1599" y1="0" y2="0"><stop offset="0" stop-color="#00ff82"/><stop offset="0.27" stop-color="#00ff6b"/><stop offset="0.481" stop-color="#00ff51"/><stop offset="0.551" stop-color="#3bff46"/><stop offset="0.616" stop-color="#76ff3b"/><stop offset="0.682" stop-color="#bcff2f"/><stop offset="0.737" stop-color="#feff23"/><stop offset="0.767" stop-color="#ffde18"/><stop offset="0.803" stop-color="#ffbd0e"/><stop offset="0.854" stop-color="#ff9a03"/><stop offset="0.945" stop-color="#ff6e00"/><stop offset="1" stop-color="#ff5b00"/></linearGradient><linearGradient id="g118" gradientUnits="userSpaceOnUse" x1="1163" x2="1602" y1="0" y2="0"><stop offset="0" stop-color="#00ff84"/><stop offset="0.248" stop-color="#00ff6f"/><stop offset="0.474" stop-color="#00ff54"/><stop offset="0.569" stop-color="#51ff45"/><stop offset="0.613" stop-color="#7bff3e"/><stop offset="0.67" stop-color="#b8ff33"/><stop offset="0.729" stop-color="#ffff26"/><stop offset="0.772" stop-color="#ffcf16"/><stop offset="0.843" stop-color="#ff9a05"/><stop offset="0.868" stop-color="#ff8c00"/><stop offset="0.938" stop-color="#ff6c00"/><stop offset="1" stop-color="#ff5800"/></linearGradient><linearGradient id="g119" gradientUnits="userSpaceOnUse" x1="1163" x2="1604" y1="0" y2="0"><stop offset="0" stop-color="#00ff86"/><stop offset="0.279" stop-color="#00ff6e"/><stop offset="0.469" stop-color="#00ff56"/><stop offset="0.535" stop-color="#36ff4d"/><stop offset="0.596" stop-color="#70ff42"/><stop offset="0.664" stop-color="#b9ff36"/><stop offset="0.721" stop-color="#feff29"/><stop offset="0.76" stop-color="#ffd41b"/><stop offset="0.789" stop-color="#ffba12"/><stop offset="0.841" stop-color="#ff9606"/><stop offset="0.871" stop-color="#ff8600"/><stop offset="0.914" stop-color="#ff7200"/><stop offset="1" stop-color="#ff5500"/></linearGradient><linearGradient id="g120" gradientUnits="userSpaceOnUse" x1="1163" x2="1607" y1="0" y2="0"><stop offset="0" stop-color="#00ff88"/><stop offset="0.27" stop-color="#00ff71"/><stop offset="0.466" stop-color="#00ff59"/><stop offset="0.534" stop-color="#3aff4f"/><stop offset="0.595" stop-color="#75ff45"/><stop offset="0.658" stop-color="#baff39"/><stop offset="0.712" stop-color="#fdff2d"/><stop offset="0.775" stop-color="#ffbe16"/><stop offset="0.831" stop-color="#ff9608"/><stop offset="0.874" stop-color="#ff7f00"/><stop offset="0.91" stop-color="#ff6f00"/><stop offset="1" stop-color="#ff5100"/></linearGradient><linearGradient id="g121" gradientUnits="userSpaceOnUse" x1="1164" x2="1610" y1="0" y2="0"><stop offset="0" stop-color="#00ff8a"/><stop offset="0.24" stop-color="#00ff76"/><stop offset="0.46" stop-color="#00ff5c"/><stop offset="0.529" stop-color="#3cff51"/><stop offset="0.603" stop-color="#86ff45"/><stop offset="0.657" stop-color="#c3ff3a"/><stop offset="0.704" stop-color="#ffff30"/><stop offset="0.742" stop-color="#ffd320"/><stop offset="0.783" stop-color="#ffb014"/><stop offset="0.821" stop-color="#ff960a"/><stop offset="0.874" stop-color="#ff7a00"/><stop offset="0.906" stop-color="#ff6c00"/><stop offset="1" stop-color="#ff4e00"/></linearGradient><linearGradient id="g122" gradientUnits="userSpaceOnUse" x1="1164" x2="1612" y1="0" y2="0"><stop offset="0" stop-color="#00ff8c"/><stop offset="0.252" stop-color="#00ff77"/><stop offset="0.455" stop-color="#00ff5e"/><stop offset="0.525" stop-color="#3cff54"/><stop offset="0.589" stop-color="#7dff49"/><stop offset="0.654" stop-color="#c7ff3d"/><stop offset="0.696" stop-color="#feff34"/><stop offset="0.725" stop-color="#ffdd27"/><stop offset="0.763" stop-color="#ffb91a"/><stop offset="0.826" stop-color="#ff8e0a"/><stop offset="0.877" stop-color="#ff7500"/><stop offset="0.938" stop-color="#ff5d00"/><stop offset="1" stop-color="#ff4b00"/></linearGradient><linearGradient id="g123" gradientUnits="userSpaceOnUse" x1="1164" x2="1615" y1="0" y2="0"><stop offset="0" stop-color="#00ff8e"/><stop offset="0.244" stop-color="#00ff7a"/><stop offset="0.45" stop-color="#00ff61"/><stop offset="0.521" stop-color="#3eff57"/><stop offset="0.581" stop-color="#7bff4d"/><stop offset="0.641" stop-color="#c0ff41"/><stop offset="0.69" stop-color="#ffff37"/><stop offset="0.721" stop-color="#ffd929"/><stop offset="0.761" stop-color="#ffb41b"/><stop offset="0.816" stop-color="#ff8e0c"/><stop offset="0.878" stop-color="#ff7000"/><stop offset="1" stop-color="#ff4700"/></linearGradient><linearGradient id="g124" gradientUnits="userSpaceOnUse" x1="1165" x2="1617" y1="0" y2="0"><stop offset="0" stop-color="#00ff90"/><stop offset="0.235" stop-color="#00ff7d"/><stop offset="0.447" stop-color="#00ff64"/><stop offset="0.496" stop-color="#2bff5d"/><stop offset="0.566" stop-color="#72ff51"/><stop offset="0.635" stop-color="#c1ff45"/><stop offset="0.681" stop-color="#feff3b"/><stop offset="0.71" stop-color="#ffdc2d"/><stop offset="0.75" stop-color="#ffb61e"/><stop offset="0.808" stop-color="#ff8e0f"/><stop offset="0.883" stop-color="#ff6a00"/><stop offset="1" stop-color="#ff4500"/></linearGradient><linearGradient id="g125" gradientUnits="userSpaceOnUse" x1="1165" x2="1620" y1="0" y2="0"><stop offset="0" stop-color="#00ff92"/><stop offset="0.237" stop-color="#00ff7f"/><stop offset="0.442" stop-color="#00ff67"/><stop offset="0.495" stop-color="#2fff5f"/><stop offset="0.569" stop-color="#7cff53"/><stop offset="0.622" stop-color="#baff49"/><stop offset="0.673" stop-color="#fdff3f"/><stop offset="0.705" stop-color="#ffd82f"/><stop offset="0.736" stop-color="#ffba23"/><stop offset="0.804" stop-color="#ff8a0f"/><stop offset="0.884" stop-color="#ff6500"/><stop offset="1" stop-color="#ff4200"/></linearGradient><linearGradient id="g126" gradientUnits="userSpaceOnUse" x1="1165" x2="1623" y1="0" y2="0"><stop offset="0" stop-color="#00ff94"/><stop offset="0.21" stop-color="#00ff84"/><stop offset="0.437" stop-color="#00ff6a"/><stop offset="0.491" stop-color="#31ff62"/><stop offset="0.561" stop-color="#7aff57"/><stop offset="0.616" stop-color="#bbff4d"/><stop offset="0.666" stop-color="#ffff42"/><stop offset="0.694" stop-color="#ffdb33"/><stop offset="0.736" stop-color="#ffb323"/><stop offset="0.795" stop-color="#ff8a12"/><stop offset="0.884" stop-color="#ff6100"/><stop offset="1" stop-color="#ff3f00"/></linearGradient><linearGradient id="g127" gradientUnits="userSpaceOnUse" x1="1166" x2="1625" y1="0" y2="0"><stop offset="0" stop-color="#00ff96"/><stop offset="0.233" stop-color="#00ff84"/><stop offset="0.434" stop-color="#00ff6d"/><stop offset="0.488" stop-color="#33ff65"/><stop offset="0.553" stop-color="#78ff5a"/><stop offset="0.612" stop-color="#bfff50"/><stop offset="0.658" stop-color="#fdff46"/><stop offset="0.691" stop-color="#ffd735"/><stop offset="0.725" stop-color="#ffb526"/><stop offset="0.793" stop-color="#ff8612"/><stop offset="0.889" stop-color="#ff5c00"/><stop offset="1" stop-color="#ff3c00"/></linearGradient><linearGradient id="g128" gradientUnits="userSpaceOnUse" x1="1166" x2="1628" y1="0" y2="0"><stop offset="0" stop-color="#00ff99"/><stop offset="0.216" stop-color="#00ff88"/><stop offset="0.429" stop-color="#00ff70"/><stop offset="0.485" stop-color="#35ff68"/><stop offset="0.545" stop-color="#76ff5e"/><stop offset="0.597" stop-color="#b5ff55"/><stop offset="0.652" stop-color="#ffff4a"/><stop offset="0.68" stop-color="#ffda3a"/><stop offset="0.725" stop-color="#ffae26"/><stop offset="0.792" stop-color="#ff8113"/><stop offset="0.89" stop-color="#ff5800"/><stop offset="1" stop-color="#ff3900"/></linearGradient><linearGradient id="g129" gradientUnits="userSpaceOnUse" x1="1166" x2="1631" y1="0" y2="0"><stop offset="0" stop-color="#00ff9b"/><stop offset="0.262" stop-color="#00ff86"/><stop offset="0.424" stop-color="#00ff73"/><stop offset="0.48" stop-color="#35ff6b"/><stop offset="0.538" stop-color="#74ff62"/><stop offset="0.591" stop-color="#b6ff58"/><stop offset="0.643" stop-color="#feff4e"/><stop offset="0.688" stop-color="#ffc835"/><stop offset="0.723" stop-color="#ffa927"/><stop offset="0.772" stop-color="#ff8718"/><stop offset="0.837" stop-color="#ff6709"/><stop offset="0.89" stop-color="#ff5400"/><stop offset="1" stop-color="#ff3700"/></linearGradient><linearGradient id="g130" gradientUnits="userSpaceOnUse" x1="1167" x2="1633" y1="0" y2="0"><stop offset="0" stop-color="#00ff9d"/><stop offset="0.215" stop-color="#00ff8d"/><stop offset="0.418" stop-color="#00ff76"/><stop offset="0.476" stop-color="#37ff6e"/><stop offset="0.539" stop-color="#7cff64"/><stop offset="0.586" stop-color="#b7ff5c"/><stop offset="0.635" stop-color="#fdff52"/><stop offset="0.665" stop-color="#ffd940"/><stop offset="0.702" stop-color="#ffb42f"/><stop offset="0.745" stop-color="#ff9320"/><stop offset="0.783" stop-color="#ff7c15"/><stop offset="0.835" stop-color="#ff640a"/><stop offset="0.893" stop-color="#ff5000"/><stop offset="1" stop-color="#ff3400"/></linearGradient><linearGradient id="g131" gradientUnits="userSpaceOnUse" x1="1167" x2="1636" y1="0" y2="0"><stop offset="0" stop-color="#00ffa0"/><stop offset="0.198" stop-color="#00ff91"/><stop offset="0.416" stop-color="#00ff79"/><stop offset="0.48" stop-color="#40ff70"/><stop offset="0.531" stop-color="#7aff68"/><stop offset="0.582" stop-color="#bbff5f"/><stop offset="0.629" stop-color="#feff56"/><stop offset="0.665" stop-color="#ffd03f"/><stop offset="0.704" stop-color="#ffab2e"/><stop offset="0.772" stop-color="#ff7d18"/><stop offset="0.829" stop-color="#ff620b"/><stop offset="0.896" stop-color="#ff4b00"/><stop offset="1" stop-color="#ff3200"/></linearGradient><linearGradient id="g132" gradientUnits="userSpaceOnUse" x1="1168" x2="1639" y1="0" y2="0"><stop offset="0" stop-color="#00ffa2"/><stop offset="0.214" stop-color="#00ff92"/><stop offset="0.41" stop-color="#00ff7c"/><stop offset="0.473" stop-color="#40ff74"/><stop offset="0.522" stop-color="#78ff6c"/><stop offset="0.58" stop-color="#c2ff62"/><stop offset="0.62" stop-color="#fdff5a"/><stop offset="0.654" stop-color="#ffd344"/><stop offset="0.692" stop-color="#ffad32"/><stop offset="0.76" stop-color="#ff7e1b"/><stop offset="0.824" stop-color="#ff600c"/><stop offset="0.896" stop-color="#ff4800"/><stop offset="1" stop-color="#ff2f00"/></linearGradient><linearGradient id="g133" gradientUnits="userSpaceOnUse" x1="1168" x2="1641" y1="0" y2="0"><stop offset="0" stop-color="#00ffa4"/><stop offset="0.222" stop-color="#00ff94"/><stop offset="0.406" stop-color="#00ff80"/><stop offset="0.463" stop-color="#39ff78"/><stop offset="0.52" stop-color="#7bff6f"/><stop offset="0.558" stop-color="#acff69"/><stop offset="0.615" stop-color="#ffff5e"/><stop offset="0.638" stop-color="#ffde4e"/><stop offset="0.681" stop-color="#ffb137"/><stop offset="0.719" stop-color="#ff9328"/><stop offset="0.763" stop-color="#ff781b"/><stop offset="0.822" stop-color="#ff5d0d"/><stop offset="0.899" stop-color="#ff4400"/><stop offset="1" stop-color="#ff2d00"/></linearGradient><linearGradient id="g134" gradientUnits="userSpaceOnUse" x1="1168" x2="1644" y1="0" y2="0"><stop offset="0" stop-color="#00ffa7"/><stop offset="0.218" stop-color="#00ff97"/><stop offset="0.401" stop-color="#00ff83"/><stop offset="0.443" stop-color="#29ff7e"/><stop offset="0.502" stop-color="#6cff75"/><stop offset="0.553" stop-color="#adff6d"/><stop offset="0.607" stop-color="#feff62"/><stop offset="0.641" stop-color="#ffd24b"/><stop offset="0.683" stop-color="#ffa836"/><stop offset="0.752" stop-color="#ff791d"/><stop offset="0.817" stop-color="#ff5b0e"/><stop offset="0.901" stop-color="#ff4000"/><stop offset="1" stop-color="#ff2a00"/></linearGradient><linearGradient id="g135" gradientUnits="userSpaceOnUse" x1="1169" x2="1647" y1="0" y2="0"><stop offset="0" stop-color="#00ffa9"/><stop offset="0.236" stop-color="#00ff98"/><stop offset="0.397" stop-color="#00ff86"/><stop offset="0.464" stop-color="#47ff7d"/><stop offset="0.508" stop-color="#7cff77"/><stop offset="0.548" stop-color="#b1ff70"/><stop offset="0.598" stop-color="#fcff67"/><stop offset="0.64" stop-color="#ffc94a"/><stop offset="0.672" stop-color="#ffaa3a"/><stop offset="0.705" stop-color="#ff902c"/><stop offset="0.755" stop-color="#ff721c"/><stop offset="0.812" stop-color="#ff590f"/><stop offset="0.902" stop-color="#ff3d00"/><stop offset="1" stop-color="#ff2800"/></linearGradient><linearGradient id="g136" gradientUnits="userSpaceOnUse" x1="1169" x2="1649" y1="0" y2="0"><stop offset="0" stop-color="#00ffac"/><stop offset="0.2" stop-color="#00ff9e"/><stop offset="0.394" stop-color="#00ff8a"/><stop offset="0.429" stop-color="#24ff85"/><stop offset="0.496" stop-color="#72ff7c"/><stop offset="0.548" stop-color="#b8ff73"/><stop offset="0.594" stop-color="#feff6b"/><stop offset="0.623" stop-color="#ffd655"/><stop offset="0.66" stop-color="#ffae3f"/><stop offset="0.702" stop-color="#ff8d2d"/><stop offset="0.744" stop-color="#ff7420"/><stop offset="0.808" stop-color="#ff5710"/><stop offset="0.904" stop-color="#ff3a00"/><stop offset="1" stop-color="#ff2600"/></linearGradient><linearGradient id="g137" gradientUnits="userSpaceOnUse" x1="1170" x2="1652" y1="0" y2="0"><stop offset="0" stop-color="#00ffae"/><stop offset="0.185" stop-color="#00ffa2"/><stop offset="0.388" stop-color="#00ff8e"/><stop offset="0.425" stop-color="#26ff89"/><stop offset="0.481" stop-color="#68ff81"/><stop offset="0.519" stop-color="#99ff7b"/><stop offset="0.585" stop-color="#fdff70"/><stop offset="0.62" stop-color="#ffcf55"/><stop offset="0.662" stop-color="#ffa53e"/><stop offset="0.73" stop-color="#ff7624"/><stop offset="0.811" stop-color="#ff5210"/><stop offset="0.905" stop-color="#ff3700"/><stop offset="1" stop-color="#ff2400"/></linearGradient><linearGradient id="g138" gradientUnits="userSpaceOnUse" x1="1170" x2="1654" y1="0" y2="0"><stop offset="0" stop-color="#00ffb1"/><stop offset="0.231" stop-color="#00ffa1"/><stop offset="0.384" stop-color="#00ff91"/><stop offset="0.44" stop-color="#3bff8a"/><stop offset="0.492" stop-color="#7bff83"/><stop offset="0.548" stop-color="#caff7a"/><stop offset="0.581" stop-color="#ffff74"/><stop offset="0.605" stop-color="#ffda5f"/><stop offset="0.653" stop-color="#ffa742"/><stop offset="0.69" stop-color="#ff8a32"/><stop offset="0.736" stop-color="#ff6f22"/><stop offset="0.814" stop-color="#ff4e0f"/><stop offset="0.901" stop-color="#ff3601"/><stop offset="1" stop-color="#ff2200"/></linearGradient><linearGradient id="g139" gradientUnits="userSpaceOnUse" x1="1170" x2="1657" y1="0" y2="0"><stop offset="0" stop-color="#00ffb4"/><stop offset="0.382" stop-color="#00ff95"/><stop offset="0.435" stop-color="#3bff8e"/><stop offset="0.483" stop-color="#76ff88"/><stop offset="0.538" stop-color="#c5ff7f"/><stop offset="0.573" stop-color="#feff79"/><stop offset="0.604" stop-color="#ffd35f"/><stop offset="0.645" stop-color="#ffa746"/><stop offset="0.682" stop-color="#ff8a35"/><stop offset="0.721" stop-color="#ff7227"/><stop offset="0.801" stop-color="#ff4f12"/><stop offset="0.887" stop-color="#ff3603"/><stop offset="1" stop-color="#ff2000"/></linearGradient><linearGradient id="g140" gradientUnits="userSpaceOnUse" x1="1171" x2="1660" y1="0" y2="0"><stop offset="0" stop-color="#00ffb6"/><stop offset="0.207" stop-color="#00ffa9"/><stop offset="0.376" stop-color="#00ff98"/><stop offset="0.415" stop-color="#2aff94"/><stop offset="0.466" stop-color="#69ff8d"/><stop offset="0.526" stop-color="#bdff84"/><stop offset="0.564" stop-color="#fcff7e"/><stop offset="0.597" stop-color="#ffd162"/><stop offset="0.632" stop-color="#ffab4b"/><stop offset="0.677" stop-color="#ff8736"/><stop offset="0.708" stop-color="#ff742b"/><stop offset="0.769" stop-color="#ff5719"/><stop offset="0.836" stop-color="#ff400b"/><stop offset="0.91" stop-color="#ff2e00"/><stop offset="1" stop-color="#ff1d00"/></linearGradient><linearGradient id="g141" gradientUnits="userSpaceOnUse" x1="1171" x2="1662" y1="0" y2="0"><stop offset="0" stop-color="#00ffb9"/><stop offset="0.196" stop-color="#00ffad"/><stop offset="0.373" stop-color="#00ff9c"/><stop offset="0.418" stop-color="#31ff97"/><stop offset="0.473" stop-color="#77ff90"/><stop offset="0.517" stop-color="#b8ff89"/><stop offset="0.56" stop-color="#feff82"/><stop offset="0.593" stop-color="#ffcf65"/><stop offset="0.635" stop-color="#ffa249"/><stop offset="0.68" stop-color="#ff8035"/><stop offset="0.715" stop-color="#ff6c28"/><stop offset="0.766" stop-color="#ff551a"/><stop offset="0.831" stop-color="#ff3f0d"/><stop offset="0.914" stop-color="#ff2b00"/><stop offset="1" stop-color="#ff1c00"/></linearGradient><linearGradient id="g142" gradientUnits="userSpaceOnUse" x1="1172" x2="1665" y1="0" y2="0"><stop offset="0" stop-color="#00ffbc"/><stop offset="0.369" stop-color="#00ffa0"/><stop offset="0.408" stop-color="#2cff9c"/><stop offset="0.462" stop-color="#72ff95"/><stop offset="0.509" stop-color="#b6ff8e"/><stop offset="0.552" stop-color="#fdff87"/><stop offset="0.58" stop-color="#ffd56d"/><stop offset="0.627" stop-color="#ffa24d"/><stop offset="0.698" stop-color="#ff702e"/><stop offset="0.761" stop-color="#ff531b"/><stop offset="0.834" stop-color="#ff3b0c"/><stop offset="0.915" stop-color="#ff2800"/><stop offset="1" stop-color="#ff1a00"/></linearGradient><linearGradient id="g143" gradientUnits="userSpaceOnUse" x1="1172" x2="1668" y1="0" y2="0"><stop offset="0" stop-color="#00ffbf"/><stop offset="0.365" stop-color="#00ffa4"/><stop offset="0.427" stop-color="#4aff9d"/><stop offset="0.464" stop-color="#7bff98"/><stop offset="0.51" stop-color="#c1ff92"/><stop offset="0.546" stop-color="#ffff8c"/><stop offset="0.573" stop-color="#ffd672"/><stop offset="0.601" stop-color="#ffb45c"/><stop offset="0.643" stop-color="#ff8e44"/><stop offset="0.685" stop-color="#ff7232"/><stop offset="0.746" stop-color="#ff551f"/><stop offset="0.812" stop-color="#ff3e10"/><stop offset="0.915" stop-color="#ff2600"/><stop offset="1" stop-color="#ff1800"/></linearGradient><linearGradient id="g144" gradientUnits="userSpaceOnUse" x1="1173" x2="1670" y1="0" y2="0"><stop offset="0" stop-color="#00ffc1"/><stop offset="0.36" stop-color="#00ffa8"/><stop offset="0.396" stop-color="#29ffa4"/><stop offset="0.453" stop-color="#73ff9e"/><stop offset="0.503" stop-color="#bfff97"/><stop offset="0.539" stop-color="#fdff91"/><stop offset="0.573" stop-color="#ffcc70"/><stop offset="0.608" stop-color="#ffa657"/><stop offset="0.648" stop-color="#ff8541"/><stop offset="0.69" stop-color="#ff6b30"/><stop offset="0.744" stop-color="#ff521f"/><stop offset="0.817" stop-color="#ff3a10"/><stop offset="0.918" stop-color="#ff2300"/><stop offset="1" stop-color="#ff1600"/></linearGradient><linearGradient id="g145" gradientUnits="userSpaceOnUse" x1="1173" x2="1673" y1="0" y2="0"><stop offset="0" stop-color="#00ffc4"/><stop offset="0.356" stop-color="#00ffac"/><stop offset="0.408" stop-color="#3dffa7"/><stop offset="0.456" stop-color="#7fffa1"/><stop offset="0.496" stop-color="#bdff9c"/><stop offset="0.534" stop-color="#ffff96"/><stop offset="0.562" stop-color="#ffd278"/><stop offset="0.582" stop-color="#ffb967"/><stop offset="0.624" stop-color="#ff914c"/><stop offset="0.676" stop-color="#ff6e35"/><stop offset="0.74" stop-color="#ff5021"/><stop offset="0.806" stop-color="#ff3a12"/><stop offset="0.92" stop-color="#ff2100"/><stop offset="1" stop-color="#ff1400"/></linearGradient><linearGradient id="g146" gradientUnits="userSpaceOnUse" x1="1174" x2="1676" y1="0" y2="0"><stop offset="0" stop-color="#00ffc7"/><stop offset="0.353" stop-color="#00ffb0"/><stop offset="0.388" stop-color="#2bffad"/><stop offset="0.44" stop-color="#71ffa7"/><stop offset="0.48" stop-color="#aeffa2"/><stop offset="0.526" stop-color="#feff9c"/><stop offset="0.562" stop-color="#ffc876"/><stop offset="0.602" stop-color="#ff9d58"/><stop offset="0.635" stop-color="#ff8245"/><stop offset="0.691" stop-color="#ff612f"/><stop offset="0.769" stop-color="#ff4219"/><stop offset="0.861" stop-color="#ff2a08"/><stop offset="0.92" stop-color="#ff1e00"/><stop offset="1" stop-color="#ff1200"/></linearGradient><linearGradient id="g147" gradientUnits="userSpaceOnUse" x1="1174" x2="1678" y1="0" y2="0"><stop offset="0" stop-color="#00ffca"/><stop offset="0.349" stop-color="#00ffb5"/><stop offset="0.429" stop-color="#66ffad"/><stop offset="0.474" stop-color="#acffa7"/><stop offset="0.52" stop-color="#fcffa1"/><stop offset="0.558" stop-color="#ffc679"/><stop offset="0.595" stop-color="#ff9d5c"/><stop offset="0.645" stop-color="#ff7741"/><stop offset="0.698" stop-color="#ff5a2d"/><stop offset="0.77" stop-color="#ff3f19"/><stop offset="0.863" stop-color="#ff2708"/><stop offset="0.923" stop-color="#ff1c00"/><stop offset="1" stop-color="#ff1100"/></linearGradient><linearGradient id="g148" gradientUnits="userSpaceOnUse" x1="1174" x2="1681" y1="0" y2="0"><stop offset="0" stop-color="#00ffce"/><stop offset="0.345" stop-color="#00ffb9"/><stop offset="0.379" stop-color="#28ffb6"/><stop offset="0.432" stop-color="#72ffb1"/><stop offset="0.485" stop-color="#c8ffab"/><stop offset="0.515" stop-color="#ffffa7"/><stop offset="0.552" stop-color="#ffc47c"/><stop offset="0.588" stop-color="#ff9d60"/><stop offset="0.635" stop-color="#ff7845"/><stop offset="0.698" stop-color="#ff562c"/><stop offset="0.779" stop-color="#ff3917"/><stop offset="0.87" stop-color="#ff2407"/><stop offset="0.925" stop-color="#ff1a00"/><stop offset="1" stop-color="#ff0f00"/></linearGradient><linearGradient id="g149" gradientUnits="userSpaceOnUse" x1="1175" x2="1683" y1="0" y2="0"><stop offset="0" stop-color="#00ffd1"/><stop offset="0.341" stop-color="#00ffbe"/><stop offset="0.364" stop-color="#1bffbc"/><stop offset="0.415" stop-color="#61ffb7"/><stop offset="0.463" stop-color="#abffb2"/><stop offset="0.51" stop-color="#fffdab"/><stop offset="0.541" stop-color="#ffca85"/><stop offset="0.579" stop-color="#ff9f65"/><stop offset="0.62" stop-color="#ff7d4c"/><stop offset="0.679" stop-color="#ff5b33"/><stop offset="0.76" stop-color="#ff3c1c"/><stop offset="0.858" stop-color="#ff2409"/><stop offset="0.927" stop-color="#ff1700"/><stop offset="1" stop-color="#ff0d00"/></linearGradient><linearGradient id="g150" gradientUnits="userSpaceOnUse" x1="1175" x2="1686" y1="0" y2="0"><stop offset="0" stop-color="#00ffd4"/><stop offset="0.339" stop-color="#00ffc2"/><stop offset="0.384" stop-color="#3affbe"/><stop offset="0.425" stop-color="#76ffbb"/><stop offset="0.462" stop-color="#b3ffb7"/><stop offset="0.503" stop-color="#ffffb2"/><stop offset="0.53" stop-color="#ffd08f"/><stop offset="0.569" stop-color="#ffa16b"/><stop offset="0.624" stop-color="#ff7549"/><stop offset="0.681" stop-color="#ff5632"/><stop offset="0.744" stop-color="#ff3e20"/><stop offset="0.84" stop-color="#ff250c"/><stop offset="0.928" stop-color="#ff1500"/><stop offset="1" stop-color="#ff0c00"/></linearGradient><linearGradient id="g151" gradientUnits="userSpaceOnUse" x1="1176" x2="1689" y1="0" y2="0"><stop offset="0" stop-color="#00ffd7"/><stop offset="0.333" stop-color="#00ffc7"/><stop offset="0.378" stop-color="#3affc3"/><stop offset="0.427" stop-color="#83ffbf"/><stop offset="0.497" stop-color="#fffcb6"/><stop offset="0.513" stop-color="#ffe0a0"/><stop offset="0.536" stop-color="#ffbe86"/><stop offset="0.573" stop-color="#ff9666"/><stop offset="0.62" stop-color="#ff724b"/><stop offset="0.659" stop-color="#ff5c39"/><stop offset="0.727" stop-color="#ff4024"/><stop offset="0.809" stop-color="#ff2912"/><stop offset="0.928" stop-color="#ff1300"/><stop offset="1" stop-color="#ff0a00"/></linearGradient><linearGradient id="g152" gradientUnits="userSpaceOnUse" x1="1176" x2="1691" y1="0" y2="0"><stop offset="0" stop-color="#00ffda"/><stop offset="0.332" stop-color="#01ffcb"/><stop offset="0.367" stop-color="#2fffc9"/><stop offset="0.412" stop-color="#71ffc5"/><stop offset="0.454" stop-color="#b9ffc2"/><stop offset="0.491" stop-color="#fffebd"/><stop offset="0.52" stop-color="#ffcc96"/><stop offset="0.567" stop-color="#ff966a"/><stop offset="0.612" stop-color="#ff734f"/><stop offset="0.666" stop-color="#ff5537"/><stop offset="0.744" stop-color="#ff3820"/><stop offset="0.829" stop-color="#ff230e"/><stop offset="0.932" stop-color="#ff1100"/><stop offset="1" stop-color="#ff0800"/></linearGradient><linearGradient id="g153" gradientUnits="userSpaceOnUse" x1="1177" x2="1694" y1="0" y2="0"><stop offset="0" stop-color="#00ffde"/><stop offset="0.327" stop-color="#01ffd0"/><stop offset="0.368" stop-color="#37ffcd"/><stop offset="0.412" stop-color="#7bffca"/><stop offset="0.451" stop-color="#beffc7"/><stop offset="0.478" stop-color="#f3ffc5"/><stop offset="0.485" stop-color="#fffcc1"/><stop offset="0.516" stop-color="#ffc797"/><stop offset="0.559" stop-color="#ff966f"/><stop offset="0.602" stop-color="#ff7453"/><stop offset="0.665" stop-color="#ff5136"/><stop offset="0.747" stop-color="#ff341f"/><stop offset="0.841" stop-color="#ff1e0c"/><stop offset="0.932" stop-color="#ff0f00"/><stop offset="1" stop-color="#ff0700"/></linearGradient><linearGradient id="g154" gradientUnits="userSpaceOnUse" x1="1177" x2="1697" y1="0" y2="0"><stop offset="0" stop-color="#00ffe1"/><stop offset="0.323" stop-color="#00ffd5"/><stop offset="0.362" stop-color="#34ffd3"/><stop offset="0.402" stop-color="#72ffd0"/><stop offset="0.444" stop-color="#bcffcd"/><stop offset="0.479" stop-color="#fffdc9"/><stop offset="0.512" stop-color="#ffc59a"/><stop offset="0.554" stop-color="#ff9471"/><stop offset="0.592" stop-color="#ff7557"/><stop offset="0.648" stop-color="#ff553d"/><stop offset="0.723" stop-color="#ff3824"/><stop offset="0.817" stop-color="#ff2110"/><stop offset="0.933" stop-color="#ff0d00"/><stop offset="1" stop-color="#ff0500"/></linearGradient><linearGradient id="g155" gradientUnits="userSpaceOnUse" x1="1178" x2="1699" y1="0" y2="0"><stop offset="0" stop-color="#00ffe5"/><stop offset="0.319" stop-color="#00ffda"/><stop offset="0.357" stop-color="#34ffd8"/><stop offset="0.401" stop-color="#79ffd6"/><stop offset="0.441" stop-color="#c1ffd3"/><stop offset="0.472" stop-color="#ffffd1"/><stop offset="0.489" stop-color="#ffdeb4"/><stop offset="0.507" stop-color="#ffc39e"/><stop offset="0.547" stop-color="#ff9476"/><stop offset="0.589" stop-color="#ff7259"/><stop offset="0.651" stop-color="#ff503b"/><stop offset="0.745" stop-color="#ff2f1f"/><stop offset="0.831" stop-color="#ff1c0e"/><stop offset="0.937" stop-color="#ff0b00"/><stop offset="1" stop-color="#ff0400"/></linearGradient><linearGradient id="g156" gradientUnits="userSpaceOnUse" x1="1178" x2="1702" y1="0" y2="0"><stop offset="0" stop-color="#00ffe8"/><stop offset="0.317" stop-color="#01ffdf"/><stop offset="0.351" stop-color="#31ffde"/><stop offset="0.391" stop-color="#70ffdc"/><stop offset="0.429" stop-color="#b4ffda"/><stop offset="0.468" stop-color="#fffcd5"/><stop offset="0.485" stop-color="#ffdcb8"/><stop offset="0.504" stop-color="#ffbe9f"/><stop offset="0.54" stop-color="#ff947a"/><stop offset="0.58" stop-color="#ff735d"/><stop offset="0.634" stop-color="#ff5442"/><stop offset="0.718" stop-color="#ff3426"/><stop offset="0.807" stop-color="#ff1e12"/><stop offset="0.937" stop-color="#ff0a00"/><stop offset="1" stop-color="#ff0200"/></linearGradient><linearGradient id="g157" gradientUnits="userSpaceOnUse" x1="1179" x2="1705" y1="0" y2="0"><stop offset="0" stop-color="#00ffec"/><stop offset="0.312" stop-color="#00ffe4"/><stop offset="0.342" stop-color="#2bffe3"/><stop offset="0.39" stop-color="#77ffe1"/><stop offset="0.426" stop-color="#b9ffe0"/><stop offset="0.46" stop-color="#fffedd"/><stop offset="0.492" stop-color="#ffc4a9"/><stop offset="0.532" stop-color="#ff947e"/><stop offset="0.576" stop-color="#ff705e"/><stop offset="0.635" stop-color="#ff4f41"/><stop offset="0.7" stop-color="#ff372a"/><stop offset="0.785" stop-color="#ff2016"/><stop offset="0.937" stop-color="#ff0800"/><stop offset="1" stop-color="#ff0100"/></linearGradient><linearGradient id="g158" gradientUnits="userSpaceOnUse" x1="1179" x2="1707" y1="0" y2="0"><stop offset="0" stop-color="#00fff0"/><stop offset="0.309" stop-color="#00ffea"/><stop offset="0.337" stop-color="#28ffe9"/><stop offset="0.383" stop-color="#71ffe8"/><stop offset="0.413" stop-color="#a8ffe6"/><stop offset="0.456" stop-color="#fffce2"/><stop offset="0.473" stop-color="#ffdac3"/><stop offset="0.491" stop-color="#ffbfaa"/><stop offset="0.527" stop-color="#ff9483"/><stop offset="0.564" stop-color="#ff7465"/><stop offset="0.621" stop-color="#ff5247"/><stop offset="0.708" stop-color="#ff3128"/><stop offset="0.797" stop-color="#ff1c14"/><stop offset="0.939" stop-color="#ff0600"/><stop offset="1" stop-color="#ff0000"/></linearGradient><linearGradient id="g159" gradientUnits="userSpaceOnUse" x1="1180" x2="1710" y1="0" y2="0"><stop offset="0" stop-color="#00fff3"/><stop offset="0.304" stop-color="#00ffef"/><stop offset="0.328" stop-color="#22ffef"/><stop offset="0.374" stop-color="#6bffee"/><stop offset="0.409" stop-color="#adffed"/><stop offset="0.449" stop-color="#fffdea"/><stop offset="0.466" stop-color="#ffdbca"/><stop offset="0.485" stop-color="#ffbdae"/><stop offset="0.521" stop-color="#ff9286"/><stop offset="0.57" stop-color="#ff6b60"/><stop offset="0.623" stop-color="#ff4d45"/><stop offset="0.698" stop-color="#ff312b"/><stop offset="0.781" stop-color="#ff1d17"/><stop offset="0.942" stop-color="#ff0400"/><stop offset="1" stop-color="#ff0000"/></linearGradient><linearGradient id="g160" gradientUnits="userSpaceOnUse" x1="1180" x2="1713" y1="0" y2="0"><stop offset="0" stop-color="#00fff7"/><stop offset="0.302" stop-color="#01fff5"/><stop offset="0.343" stop-color="#3ffff4"/><stop offset="0.377" stop-color="#79fff4"/><stop offset="0.407" stop-color="#b2fff3"/><stop offset="0.443" stop-color="#fffff3"/><stop offset="0.456" stop-color="#ffe3d8"/><stop offset="0.475" stop-color="#ffc3ba"/><stop offset="0.497" stop-color="#ffa59c"/><stop offset="0.514" stop-color="#ff928b"/><stop offset="0.559" stop-color="#ff6d66"/><stop offset="0.608" stop-color="#ff504b"/><stop offset="0.702" stop-color="#ff2d2a"/><stop offset="0.786" stop-color="#ff1a16"/><stop offset="0.942" stop-color="#ff0300"/><stop offset="1" stop-color="#ff0000"/></linearGradient><linearGradient id="g161" gradientUnits="userSpaceOnUse" x1="1181" x2="1715" y1="0" y2="0"><stop offset="0" stop-color="#00fffb"/><stop offset="0.298" stop-color="#00fffb"/><stop offset="0.339" stop-color="#3ffffb"/><stop offset="0.371" stop-color="#76fffa"/><stop offset="0.408" stop-color="#bffffa"/><stop offset="0.438" stop-color="#fffcf8"/><stop offset="0.453" stop-color="#ffded9"/><stop offset="0.47" stop-color="#ffc1bd"/><stop offset="0.509" stop-color="#ff908d"/><stop offset="0.556" stop-color="#ff6a67"/><stop offset="0.61" stop-color="#ff4b4a"/><stop offset="0.682" stop-color="#ff312f"/><stop offset="0.772" stop-color="#ff1a19"/><stop offset="0.925" stop-color="#ff0302"/><stop offset="1" stop-color="#ff0000"/></linearGradient><linearGradient id="g162" gradientUnits="userSpaceOnUse" x1="1181" x2="1718" y1="0" y2="0"><stop offset="0" stop-color="#00ffff"/><stop offset="0.294" stop-color="#00fdff"/><stop offset="0.363" stop-color="#6ffdff"/><stop offset="0.393" stop-color="#a8fdff"/><stop offset="0.434" stop-color="#fffafd"/><stop offset="0.453" stop-color="#ffd4d7"/><stop offset="0.467" stop-color="#ffbcbe"/><stop offset="0.505" stop-color="#ff8e90"/><stop offset="0.557" stop-color="#ff6466"/><stop offset="0.615" stop-color="#ff4647"/><stop offset="0.691" stop-color="#ff2b2c"/><stop offset="0.786" stop-color="#ff1517"/><stop offset="0.935" stop-color="#ff0001"/><stop offset="1" stop-color="#ff0000"/></linearGradient><linearGradient id="g163" gradientUnits="userSpaceOnUse" x1="1182" x2="1721" y1="0" y2="0"><stop offset="0" stop-color="#00fbff"/><stop offset="0.291" stop-color="#01f8ff"/><stop offset="0.319" stop-color="#2bf7ff"/><stop offset="0.36" stop-color="#70f6ff"/><stop offset="0.393" stop-color="#b0f6ff"/><stop offset="0.43" stop-color="#fff3fd"/><stop offset="0.449" stop-color="#ffcfd7"/><stop offset="0.466" stop-color="#ffb4bc"/><stop offset="0.501" stop-color="#ff8b91"/><stop offset="0.545" stop-color="#ff666c"/><stop offset="0.61" stop-color="#ff4448"/><stop offset="0.666" stop-color="#ff2f34"/><stop offset="0.716" stop-color="#ff2225"/><stop offset="0.809" stop-color="#ff0f13"/><stop offset="0.922" stop-color="#ff0003"/><stop offset="1" stop-color="#ff0000"/></linearGradient><linearGradient id="g164" gradientUnits="userSpaceOnUse" x1="1182" x2="1723" y1="0" y2="0"><stop offset="0" stop-color="#00f7ff"/><stop offset="0.288" stop-color="#01f2ff"/><stop offset="0.312" stop-color="#24f1ff"/><stop offset="0.364" stop-color="#7bf0ff"/><stop offset="0.394" stop-color="#b4efff"/><stop offset="0.429" stop-color="#ffecfe"/><stop offset="0.447" stop-color="#ffc9d8"/><stop offset="0.464" stop-color="#ffb0bd"/><stop offset="0.497" stop-color="#ff8994"/><stop offset="0.545" stop-color="#ff626c"/><stop offset="0.608" stop-color="#ff4249"/><stop offset="0.677" stop-color="#ff2a30"/><stop offset="0.804" stop-color="#ff0e14"/><stop offset="0.909" stop-color="#ff0005"/><stop offset="1" stop-color="#ff0000"/></linearGradient><linearGradient id="g165" gradientUnits="userSpaceOnUse" x1="1183" x2="1726" y1="0" y2="0"><stop offset="0" stop-color="#00f3ff"/><stop offset="0.284" stop-color="#00ecff"/><stop offset="0.319" stop-color="#34ebff"/><stop offset="0.355" stop-color="#72eaff"/><stop offset="0.392" stop-color="#b8e8ff"/><stop offset="0.425" stop-color="#ffe6fe"/><stop offset="0.442" stop-color="#ffc7dc"/><stop offset="0.46" stop-color="#ffabbe"/><stop offset="0.494" stop-color="#ff8595"/><stop offset="0.54" stop-color="#ff616e"/><stop offset="0.604" stop-color="#ff3f4a"/><stop offset="0.669" stop-color="#ff2932"/><stop offset="0.792" stop-color="#ff0e16"/><stop offset="0.895" stop-color="#ff0006"/><stop offset="1" stop-color="#ff0000"/></linearGradient><linearGradient id="g166" gradientUnits="userSpaceOnUse" x1="1184" x2="1728" y1="0" y2="0"><stop offset="0" stop-color="#00efff"/><stop offset="0.279" stop-color="#00e7ff"/><stop offset="0.311" stop-color="#2de6ff"/><stop offset="0.353" stop-color="#73e4ff"/><stop offset="0.392" stop-color="#bce2ff"/><stop offset="0.423" stop-color="#ffe0ff"/><stop offset="0.45" stop-color="#ffb0ca"/><stop offset="0.491" stop-color="#ff8196"/><stop offset="0.537" stop-color="#ff5e6f"/><stop offset="0.601" stop-color="#ff3d4b"/><stop offset="0.682" stop-color="#ff232e"/><stop offset="0.8" stop-color="#ff0b14"/><stop offset="0.882" stop-color="#ff0008"/><stop offset="0.952" stop-color="#ff0000"/><stop offset="1" stop-color="#ff0000"/></linearGradient><linearGradient id="g167" gradientUnits="userSpaceOnUse" x1="1184" x2="1731" y1="0" y2="0"><stop offset="0" stop-color="#00ebff"/><stop offset="0.278" stop-color="#01e2ff"/><stop offset="0.314" stop-color="#37e0ff"/><stop offset="0.358" stop-color="#81ddff"/><stop offset="0.391" stop-color="#c0dbff"/><stop offset="0.42" stop-color="#ffd9ff"/><stop offset="0.45" stop-color="#ffa9c8"/><stop offset="0.488" stop-color="#ff7e97"/><stop offset="0.534" stop-color="#ff5b70"/><stop offset="0.598" stop-color="#ff3b4c"/><stop offset="0.671" stop-color="#ff2331"/><stop offset="0.801" stop-color="#ff0914"/><stop offset="0.87" stop-color="#ff000a"/><stop offset="0.952" stop-color="#ff0000"/><stop offset="1" stop-color="#ff0000"/></linearGradient><linearGradient id="g168" gradientUnits="userSpaceOnUse" x1="1185" x2="1734" y1="0" y2="0"><stop offset="0" stop-color="#00e7ff"/><stop offset="0.273" stop-color="#00dcff"/><stop offset="0.317" stop-color="#41daff"/><stop offset="0.35" stop-color="#78d8ff"/><stop offset="0.419" stop-color="#ffd0fc"/><stop offset="0.448" stop-color="#ffa2c6"/><stop offset="0.485" stop-color="#ff7a98"/><stop offset="0.537" stop-color="#ff546c"/><stop offset="0.596" stop-color="#ff384c"/><stop offset="0.707" stop-color="#ff1827"/><stop offset="0.809" stop-color="#ff0613"/><stop offset="0.856" stop-color="#ff000c"/><stop offset="0.953" stop-color="#ff0000"/><stop offset="1" stop-color="#ff0000"/></linearGradient><linearGradient id="g169" gradientUnits="userSpaceOnUse" x1="1185" x2="1736" y1="0" y2="0"><stop offset="0" stop-color="#00e3ff"/><stop offset="0.27" stop-color="#00d7ff"/><stop offset="0.309" stop-color="#37d5ff"/><stop offset="0.348" stop-color="#79d2ff"/><stop offset="0.417" stop-color="#ffcafc"/><stop offset="0.432" stop-color="#ffb1df"/><stop offset="0.452" stop-color="#ff96bf"/><stop offset="0.492" stop-color="#ff6f90"/><stop offset="0.546" stop-color="#ff4b66"/><stop offset="0.603" stop-color="#ff3349"/><stop offset="0.711" stop-color="#ff1526"/><stop offset="0.828" stop-color="#ff0210"/><stop offset="0.955" stop-color="#ff0000"/><stop offset="1" stop-color="#ff0000"/></linearGradient><linearGradient id="g170" gradientUnits="userSpaceOnUse" x1="1186" x2="1739" y1="0" y2="0"><stop offset="0" stop-color="#00dfff"/><stop offset="0.266" stop-color="#00d2ff"/><stop offset="0.295" stop-color="#28d0ff"/><stop offset="0.331" stop-color="#61ceff"/><stop offset="0.367" stop-color="#a1caff"/><stop offset="0.414" stop-color="#ffc4fd"/><stop offset="0.445" stop-color="#ff96c5"/><stop offset="0.488" stop-color="#ff6b91"/><stop offset="0.542" stop-color="#ff4967"/><stop offset="0.599" stop-color="#ff314a"/><stop offset="0.694" stop-color="#ff162a"/><stop offset="0.83" stop-color="#ff0010"/><stop offset="0.946" stop-color="#ff0001"/><stop offset="1" stop-color="#ff0000"/></linearGradient><linearGradient id="g171" gradientUnits="userSpaceOnUse" x1="1186" x2="1742" y1="0" y2="0"><stop offset="0" stop-color="#00dcff"/><stop offset="0.264" stop-color="#01cdff"/><stop offset="0.311" stop-color="#45caff"/><stop offset="0.347" stop-color="#81c6ff"/><stop offset="0.412" stop-color="#ffbefd"/><stop offset="0.43" stop-color="#ffa2da"/><stop offset="0.448" stop-color="#ff8cbe"/><stop offset="0.486" stop-color="#ff6892"/><stop offset="0.538" stop-color="#ff4769"/><stop offset="0.595" stop-color="#ff2f4b"/><stop offset="0.698" stop-color="#ff1329"/><stop offset="0.809" stop-color="#ff0113"/><stop offset="0.957" stop-color="#ff0000"/><stop offset="1" stop-color="#ff0000"/></linearGradient><linearGradient id="g172" gradientUnits="userSpaceOnUse" x1="1187" x2="1744" y1="0" y2="0"><stop offset="0" stop-color="#00d8ff"/><stop offset="0.26" stop-color="#00c9ff"/><stop offset="0.303" stop-color="#3ec5ff"/><stop offset="0.348" stop-color="#88c1ff"/><stop offset="0.409" stop-color="#ffb8fe"/><stop offset="0.424" stop-color="#ffa2e1"/><stop offset="0.442" stop-color="#ff8bc4"/><stop offset="0.483" stop-color="#ff6593"/><stop offset="0.535" stop-color="#ff456a"/><stop offset="0.594" stop-color="#ff2c4b"/><stop offset="0.679" stop-color="#ff152e"/><stop offset="0.806" stop-color="#ff0014"/><stop offset="0.939" stop-color="#ff0002"/><stop offset="1" stop-color="#ff0000"/></linearGradient><linearGradient id="g173" gradientUnits="userSpaceOnUse" x1="1187" x2="1747" y1="0" y2="0"><stop offset="0" stop-color="#00d4ff"/><stop offset="0.257" stop-color="#00c4ff"/><stop offset="0.304" stop-color="#42c0ff"/><stop offset="0.35" stop-color="#8fbbff"/><stop offset="0.407" stop-color="#ffb3fe"/><stop offset="0.436" stop-color="#ff8bca"/><stop offset="0.457" stop-color="#ff75ad"/><stop offset="0.48" stop-color="#ff6294"/><stop offset="0.532" stop-color="#ff426b"/><stop offset="0.591" stop-color="#ff2a4c"/><stop offset="0.689" stop-color="#ff112b"/><stop offset="0.793" stop-color="#ff0016"/><stop offset="0.93" stop-color="#ff0003"/><stop offset="1" stop-color="#ff0000"/></linearGradient><linearGradient id="g174" gradientUnits="userSpaceOnUse" x1="1188" x2="1750" y1="0" y2="0"><stop offset="0" stop-color="#00d1ff"/><stop offset="0.254" stop-color="#01bfff"/><stop offset="0.302" stop-color="#46bbff"/><stop offset="0.336" stop-color="#7db7ff"/><stop offset="0.368" stop-color="#b7b3ff"/><stop offset="0.404" stop-color="#ffaeff"/><stop offset="0.422" stop-color="#ff94dc"/><stop offset="0.438" stop-color="#ff81c3"/><stop offset="0.479" stop-color="#ff5d93"/><stop offset="0.528" stop-color="#ff406c"/><stop offset="0.58" stop-color="#ff2b50"/><stop offset="0.657" stop-color="#ff1634"/><stop offset="0.779" stop-color="#ff0018"/><stop offset="0.931" stop-color="#ff0003"/><stop offset="1" stop-color="#ff0000"/></linearGradient><linearGradient id="g175" gradientUnits="userSpaceOnUse" x1="1189" x2="1752" y1="0" y2="0"><stop offset="0" stop-color="#00cdff"/><stop offset="0.25" stop-color="#01bbff"/><stop offset="0.321" stop-color="#69b3ff"/><stop offset="0.359" stop-color="#aaaeff"/><stop offset="0.401" stop-color="#ffa8ff"/><stop offset="0.432" stop-color="#ff81c9"/><stop offset="0.476" stop-color="#ff5a94"/><stop offset="0.524" stop-color="#ff3e6e"/><stop offset="0.586" stop-color="#ff264d"/><stop offset="0.677" stop-color="#ff0f2e"/><stop offset="0.769" stop-color="#ff001a"/><stop offset="0.888" stop-color="#ff0008"/><stop offset="1" stop-color="#ff0000"/></linearGradient><linearGradient id="g176" gradientUnits="userSpaceOnUse" x1="1189" x2="1755" y1="0" y2="0"><stop offset="0" stop-color="#00caff"/><stop offset="0.247" stop-color="#00b7ff"/><stop offset="0.32" stop-color="#6aaeff"/><stop offset="0.355" stop-color="#a7a9ff"/><stop offset="0.401" stop-color="#ffa0fc"/><stop offset="0.435" stop-color="#ff77c2"/><stop offset="0.479" stop-color="#ff5390"/><stop offset="0.521" stop-color="#ff3c6f"/><stop offset="0.597" stop-color="#ff2048"/><stop offset="0.684" stop-color="#ff0c2c"/><stop offset="0.756" stop-color="#ff001c"/><stop offset="0.889" stop-color="#ff0008"/><stop offset="1" stop-color="#ff0000"/></linearGradient><linearGradient id="g177" gradientUnits="userSpaceOnUse" x1="1190" x2="1757" y1="0" y2="0"><stop offset="0" stop-color="#00c6ff"/><stop offset="0.243" stop-color="#00b2ff"/><stop offset="0.28" stop-color="#32aeff"/><stop offset="0.317" stop-color="#6ba9ff"/><stop offset="0.356" stop-color="#aea4ff"/><stop offset="0.399" stop-color="#ff9bfc"/><stop offset="0.436" stop-color="#ff70be"/><stop offset="0.481" stop-color="#ff4d8c"/><stop offset="0.534" stop-color="#ff3266"/><stop offset="0.589" stop-color="#ff204b"/><stop offset="0.638" stop-color="#ff1339"/><stop offset="0.744" stop-color="#ff001f"/><stop offset="0.882" stop-color="#ff0009"/><stop offset="1" stop-color="#ff0000"/></linearGradient><linearGradient id="g178" gradientUnits="userSpaceOnUse" x1="1190" x2="1760" y1="0" y2="0"><stop offset="0" stop-color="#00c3ff"/><stop offset="0.242" stop-color="#01aeff"/><stop offset="0.314" stop-color="#69a5ff"/><stop offset="0.353" stop-color="#ab9fff"/><stop offset="0.396" stop-color="#ff96fd"/><stop offset="0.418" stop-color="#ff7cd6"/><stop offset="0.433" stop-color="#ff6cbf"/><stop offset="0.47" stop-color="#ff5095"/><stop offset="0.528" stop-color="#ff3269"/><stop offset="0.593" stop-color="#ff1c49"/><stop offset="0.647" stop-color="#ff0f36"/><stop offset="0.732" stop-color="#ff0021"/><stop offset="0.882" stop-color="#ff0009"/><stop offset="1" stop-color="#ff0000"/></linearGradient><linearGradient id="g179" gradientUnits="userSpaceOnUse" x1="1191" x2="1763" y1="0" y2="0"><stop offset="0" stop-color="#00bfff"/><stop offset="0.238" stop-color="#00aaff"/><stop offset="0.283" stop-color="#3fa4ff"/><stop offset="0.322" stop-color="#7b9eff"/><stop offset="0.355" stop-color="#b599ff"/><stop offset="0.393" stop-color="#ff91fd"/><stop offset="0.428" stop-color="#ff6ac2"/><stop offset="0.472" stop-color="#ff4991"/><stop offset="0.523" stop-color="#ff306b"/><stop offset="0.584" stop-color="#ff1b4c"/><stop offset="0.636" stop-color="#ff0f39"/><stop offset="0.72" stop-color="#ff0024"/><stop offset="0.858" stop-color="#ff000c"/><stop offset="1" stop-color="#ff0000"/></linearGradient><linearGradient id="g180" gradientUnits="userSpaceOnUse" x1="1191" x2="1765" y1="0" y2="0"><stop offset="0" stop-color="#00bcff"/><stop offset="0.235" stop-color="#00a6ff"/><stop offset="0.308" stop-color="#689cff"/><stop offset="0.352" stop-color="#b295ff"/><stop offset="0.392" stop-color="#ff8cfe"/><stop offset="0.408" stop-color="#ff79e0"/><stop offset="0.43" stop-color="#ff63be"/><stop offset="0.47" stop-color="#ff4792"/><stop offset="0.519" stop-color="#ff2f6d"/><stop offset="0.589" stop-color="#ff184a"/><stop offset="0.709" stop-color="#ff0026"/><stop offset="0.845" stop-color="#ff000e"/><stop offset="1" stop-color="#ff0000"/></linearGradient><linearGradient id="g181" gradientUnits="userSpaceOnUse" x1="1192" x2="1768" y1="0" y2="0"><stop offset="0" stop-color="#00b8ff"/><stop offset="0.233" stop-color="#01a2ff"/><stop offset="0.281" stop-color="#449bff"/><stop offset="0.312" stop-color="#7496ff"/><stop offset="0.356" stop-color="#bf8fff"/><stop offset="0.389" stop-color="#ff88fe"/><stop offset="0.422" stop-color="#ff64c6"/><stop offset="0.464" stop-color="#ff4696"/><stop offset="0.514" stop-color="#ff2d6f"/><stop offset="0.58" stop-color="#ff184d"/><stop offset="0.696" stop-color="#ff0029"/><stop offset="0.852" stop-color="#ff000d"/><stop offset="1" stop-color="#ff0000"/></linearGradient><linearGradient id="g182" gradientUnits="userSpaceOnUse" x1="1193" x2="1768" y1="0" y2="0"><stop offset="0" stop-color="#00b5ff"/><stop offset="0.23" stop-color="#019eff"/><stop offset="0.273" stop-color="#3b98ff"/><stop offset="0.311" stop-color="#7592ff"/><stop offset="0.353" stop-color="#bc8aff"/><stop offset="0.388" stop-color="#ff83ff"/><stop offset="0.419" stop-color="#ff62c9"/><stop offset="0.463" stop-color="#ff4397"/><stop offset="0.511" stop-color="#ff2c71"/><stop offset="0.574" stop-color="#ff1750"/><stop offset="0.687" stop-color="#ff002c"/><stop offset="0.77" stop-color="#ff001a"/><stop offset="0.897" stop-color="#ff0008"/><stop offset="1" stop-color="#ff0000"/></linearGradient><linearGradient id="g183" gradientUnits="userSpaceOnUse" x1="1193" x2="1765" y1="0" y2="0"><stop offset="0" stop-color="#00b2ff"/><stop offset="0.229" stop-color="#009aff"/><stop offset="0.266" stop-color="#3095ff"/><stop offset="0.318" stop-color="#7e8cff"/><stop offset="0.351" stop-color="#b686ff"/><stop offset="0.39" stop-color="#ff7eff"/><stop offset="0.425" stop-color="#ff5cc5"/><stop offset="0.47" stop-color="#ff3d93"/><stop offset="0.512" stop-color="#ff2a73"/><stop offset="0.584" stop-color="#ff144e"/><stop offset="0.684" stop-color="#ff002e"/><stop offset="0.773" stop-color="#ff001b"/><stop offset="0.89" stop-color="#ff000a"/><stop offset="1" stop-color="#ff0000"/></linearGradient><linearGradient id="g184" gradientUnits="userSpaceOnUse" x1="1194" x2="1760" y1="0" y2="0"><stop offset="0" stop-color="#00afff"/><stop offset="0.228" stop-color="#0096ff"/><stop offset="0.274" stop-color="#3b90ff"/><stop offset="0.311" stop-color="#7189ff"/><stop offset="0.346" stop-color="#aa83ff"/><stop offset="0.392" stop-color="#ff7aff"/><stop offset="0.426" stop-color="#ff59c8"/><stop offset="0.47" stop-color="#ff3d97"/><stop offset="0.514" stop-color="#ff2975"/><stop offset="0.59" stop-color="#ff124e"/><stop offset="0.68" stop-color="#ff0031"/><stop offset="0.777" stop-color="#ff001c"/><stop offset="1" stop-color="#ff0001"/></linearGradient><linearGradient id="g185" gradientUnits="userSpaceOnUse" x1="1195" x2="1754" y1="0" y2="0"><stop offset="0" stop-color="#00abff"/><stop offset="0.229" stop-color="#0192ff"/><stop offset="0.279" stop-color="#418bff"/><stop offset="0.318" stop-color="#7a84ff"/><stop offset="0.397" stop-color="#ff73fc"/><stop offset="0.433" stop-color="#ff53c4"/><stop offset="0.47" stop-color="#ff3c9b"/><stop offset="0.517" stop-color="#ff2777"/><stop offset="0.59" stop-color="#ff1151"/><stop offset="0.678" stop-color="#ff0034"/><stop offset="0.746" stop-color="#ff0024"/><stop offset="0.884" stop-color="#ff000e"/><stop offset="1" stop-color="#ff0002"/></linearGradient><linearGradient id="g186" gradientUnits="userSpaceOnUse" x1="1195" x2="1748" y1="0" y2="0"><stop offset="0" stop-color="#00a8ff"/><stop offset="0.23" stop-color="#018fff"/><stop offset="0.277" stop-color="#3b88ff"/><stop offset="0.32" stop-color="#7880ff"/><stop offset="0.401" stop-color="#ff6ffd"/><stop offset="0.42" stop-color="#ff5ede"/><stop offset="0.443" stop-color="#ff4cbe"/><stop offset="0.481" stop-color="#ff3697"/><stop offset="0.523" stop-color="#ff2578"/><stop offset="0.582" stop-color="#ff1358"/><stop offset="0.676" stop-color="#ff0038"/><stop offset="0.758" stop-color="#ff0024"/><stop offset="0.882" stop-color="#ff0010"/><stop offset="1" stop-color="#ff0004"/></linearGradient><linearGradient id="g187" gradientUnits="userSpaceOnUse" x1="1196" x2="1743" y1="0" y2="0"><stop offset="0" stop-color="#00a5ff"/><stop offset="0.229" stop-color="#008bff"/><stop offset="0.272" stop-color="#3585ff"/><stop offset="0.32" stop-color="#767dff"/><stop offset="0.356" stop-color="#ae76ff"/><stop offset="0.404" stop-color="#ff6bfd"/><stop offset="0.439" stop-color="#ff4ec8"/><stop offset="0.481" stop-color="#ff359b"/><stop offset="0.537" stop-color="#ff1f72"/><stop offset="0.589" stop-color="#ff1158"/><stop offset="0.675" stop-color="#ff003a"/><stop offset="0.762" stop-color="#ff0025"/><stop offset="0.879" stop-color="#ff0012"/><stop offset="1" stop-color="#ff0005"/></linearGradient><linearGradient id="g188" gradientUnits="userSpaceOnUse" x1="1196" x2="1737" y1="0" y2="0"><stop offset="0" stop-color="#00a2ff"/><stop offset="0.229" stop-color="#0088ff"/><stop offset="0.268" stop-color="#2d82ff"/><stop offset="0.318" stop-color="#6f7aff"/><stop offset="0.349" stop-color="#9d74ff"/><stop offset="0.409" stop-color="#ff67fe"/><stop offset="0.442" stop-color="#ff4ccb"/><stop offset="0.486" stop-color="#ff339c"/><stop offset="0.54" stop-color="#ff1e75"/><stop offset="0.604" stop-color="#ff0d55"/><stop offset="0.673" stop-color="#ff003e"/><stop offset="0.774" stop-color="#ff0025"/><stop offset="0.909" stop-color="#ff0010"/><stop offset="1" stop-color="#ff0007"/></linearGradient><linearGradient id="g189" gradientUnits="userSpaceOnUse" x1="1197" x2="1731" y1="0" y2="0"><stop offset="0" stop-color="#009fff"/><stop offset="0.23" stop-color="#0184ff"/><stop offset="0.268" stop-color="#2c7eff"/><stop offset="0.324" stop-color="#7575ff"/><stop offset="0.358" stop-color="#a66eff"/><stop offset="0.412" stop-color="#ff62fe"/><stop offset="0.449" stop-color="#ff46c7"/><stop offset="0.496" stop-color="#ff2e98"/><stop offset="0.543" stop-color="#ff1d77"/><stop offset="0.612" stop-color="#ff0b55"/><stop offset="0.67" stop-color="#ff0041"/><stop offset="0.781" stop-color="#ff0026"/><stop offset="1" stop-color="#ff0008"/></linearGradient><linearGradient id="g190" gradientUnits="userSpaceOnUse" x1="1198" x2="1726" y1="0" y2="0"><stop offset="0" stop-color="#009bff"/><stop offset="0.229" stop-color="#0181ff"/><stop offset="0.275" stop-color="#347aff"/><stop offset="0.324" stop-color="#7371ff"/><stop offset="0.364" stop-color="#ac6aff"/><stop offset="0.415" stop-color="#ff5eff"/><stop offset="0.451" stop-color="#ff44ca"/><stop offset="0.496" stop-color="#ff2d9c"/><stop offset="0.545" stop-color="#ff1b79"/><stop offset="0.61" stop-color="#ff0b59"/><stop offset="0.667" stop-color="#ff0045"/><stop offset="0.777" stop-color="#ff0029"/><stop offset="0.877" stop-color="#ff0018"/><stop offset="1" stop-color="#ff000a"/></linearGradient><linearGradient id="g191" gradientUnits="userSpaceOnUse" x1="1198" x2="1720" y1="0" y2="0"><stop offset="0" stop-color="#0098ff"/><stop offset="0.23" stop-color="#007eff"/><stop offset="0.284" stop-color="#3c75ff"/><stop offset="0.331" stop-color="#796dff"/><stop offset="0.374" stop-color="#b565ff"/><stop offset="0.42" stop-color="#ff5aff"/><stop offset="0.46" stop-color="#ff3ec6"/><stop offset="0.498" stop-color="#ff2ca0"/><stop offset="0.55" stop-color="#ff197b"/><stop offset="0.609" stop-color="#ff0b5d"/><stop offset="0.667" stop-color="#ff0048"/><stop offset="0.764" stop-color="#ff002e"/><stop offset="0.891" stop-color="#ff0018"/><stop offset="1" stop-color="#ff000b"/></linearGradient><linearGradient id="g192" gradientUnits="userSpaceOnUse" x1="1199" x2="1714" y1="0" y2="0"><stop offset="0" stop-color="#0095ff"/><stop offset="0.231" stop-color="#017aff"/><stop offset="0.291" stop-color="#4471ff"/><stop offset="0.328" stop-color="#726aff"/><stop offset="0.379" stop-color="#b860ff"/><stop offset="0.423" stop-color="#ff56ff"/><stop offset="0.462" stop-color="#ff3cc9"/><stop offset="0.505" stop-color="#ff289f"/><stop offset="0.551" stop-color="#ff197e"/><stop offset="0.608" stop-color="#ff0b61"/><stop offset="0.664" stop-color="#ff004c"/><stop offset="0.781" stop-color="#ff002d"/><stop offset="1" stop-color="#ff000d"/></linearGradient><linearGradient id="g193" gradientUnits="userSpaceOnUse" x1="1200" x2="1709" y1="0" y2="0"><stop offset="0" stop-color="#0092ff"/><stop offset="0.23" stop-color="#0177ff"/><stop offset="0.285" stop-color="#3c6eff"/><stop offset="0.342" stop-color="#8264ff"/><stop offset="0.428" stop-color="#ff51fd"/><stop offset="0.464" stop-color="#ff3acc"/><stop offset="0.505" stop-color="#ff27a3"/><stop offset="0.554" stop-color="#ff1780"/><stop offset="0.615" stop-color="#ff0861"/><stop offset="0.66" stop-color="#ff0050"/><stop offset="0.772" stop-color="#ff0031"/><stop offset="0.89" stop-color="#ff001c"/><stop offset="1" stop-color="#ff000f"/></linearGradient><linearGradient id="g194" gradientUnits="userSpaceOnUse" x1="1200" x2="1703" y1="0" y2="0"><stop offset="0" stop-color="#008fff"/><stop offset="0.231" stop-color="#0074ff"/><stop offset="0.328" stop-color="#6c64ff"/><stop offset="0.38" stop-color="#b05aff"/><stop offset="0.433" stop-color="#ff4dfd"/><stop offset="0.473" stop-color="#ff35c8"/><stop offset="0.517" stop-color="#ff239f"/><stop offset="0.571" stop-color="#ff127b"/><stop offset="0.636" stop-color="#ff045c"/><stop offset="0.708" stop-color="#ff0044"/><stop offset="0.789" stop-color="#ff0030"/><stop offset="1" stop-color="#ff0011"/></linearGradient><linearGradient id="g195" gradientUnits="userSpaceOnUse" x1="1201" x2="1697" y1="0" y2="0"><stop offset="0" stop-color="#008cff"/><stop offset="0.23" stop-color="#0071ff"/><stop offset="0.327" stop-color="#6861ff"/><stop offset="0.371" stop-color="#a058ff"/><stop offset="0.438" stop-color="#ff49fd"/><stop offset="0.468" stop-color="#ff37d4"/><stop offset="0.518" stop-color="#ff22a3"/><stop offset="0.575" stop-color="#ff117d"/><stop offset="0.635" stop-color="#ff0460"/><stop offset="0.657" stop-color="#ff0058"/><stop offset="0.778" stop-color="#ff0035"/><stop offset="1" stop-color="#ff0012"/></linearGradient><linearGradient id="g196" gradientUnits="userSpaceOnUse" x1="1202" x2="1692" y1="0" y2="0"><stop offset="0" stop-color="#0089ff"/><stop offset="0.231" stop-color="#016eff"/><stop offset="0.29" stop-color="#3d64ff"/><stop offset="0.335" stop-color="#705cff"/><stop offset="0.376" stop-color="#a354ff"/><stop offset="0.441" stop-color="#ff46fe"/><stop offset="0.476" stop-color="#ff32d0"/><stop offset="0.518" stop-color="#ff21a7"/><stop offset="0.576" stop-color="#ff1080"/><stop offset="0.631" stop-color="#ff0465"/><stop offset="0.7" stop-color="#ff004c"/><stop offset="0.776" stop-color="#ff0038"/><stop offset="0.886" stop-color="#ff0023"/><stop offset="1" stop-color="#ff0014"/></linearGradient><linearGradient id="g197" gradientUnits="userSpaceOnUse" x1="1202" x2="1686" y1="0" y2="0"><stop offset="0" stop-color="#0087ff"/><stop offset="0.231" stop-color="#016bff"/><stop offset="0.279" stop-color="#2f63ff"/><stop offset="0.345" stop-color="#7858ff"/><stop offset="0.407" stop-color="#c74bff"/><stop offset="0.446" stop-color="#ff42fe"/><stop offset="0.479" stop-color="#ff30d3"/><stop offset="0.527" stop-color="#ff1da6"/><stop offset="0.581" stop-color="#ff0e82"/><stop offset="0.64" stop-color="#ff0265"/><stop offset="0.705" stop-color="#ff004e"/><stop offset="0.802" stop-color="#ff0035"/><stop offset="1" stop-color="#ff0016"/></linearGradient><linearGradient id="g198" gradientUnits="userSpaceOnUse" x1="1203" x2="1680" y1="0" y2="0"><stop offset="0" stop-color="#0084ff"/><stop offset="0.231" stop-color="#0068ff"/><stop offset="0.294" stop-color="#3d5eff"/><stop offset="0.358" stop-color="#8552ff"/><stop offset="0.403" stop-color="#bc49ff"/><stop offset="0.451" stop-color="#ff3eff"/><stop offset="0.482" stop-color="#ff2ed6"/><stop offset="0.52" stop-color="#ff1fb1"/><stop offset="0.568" stop-color="#ff118e"/><stop offset="0.635" stop-color="#ff036b"/><stop offset="0.709" stop-color="#ff0050"/><stop offset="0.801" stop-color="#ff0038"/><stop offset="1" stop-color="#ff0018"/></linearGradient><linearGradient id="g199" gradientUnits="userSpaceOnUse" x1="1204" x2="1675" y1="0" y2="0"><stop offset="0" stop-color="#0081ff"/><stop offset="0.229" stop-color="#0065ff"/><stop offset="0.278" stop-color="#2d5dff"/><stop offset="0.348" stop-color="#7751ff"/><stop offset="0.399" stop-color="#b447ff"/><stop offset="0.454" stop-color="#ff3bff"/><stop offset="0.499" stop-color="#ff26c9"/><stop offset="0.539" stop-color="#ff18a6"/><stop offset="0.588" stop-color="#ff0b86"/><stop offset="0.645" stop-color="#ff006a"/><stop offset="0.728" stop-color="#ff004d"/><stop offset="0.803" stop-color="#ff003a"/><stop offset="1" stop-color="#ff001a"/></linearGradient><linearGradient id="g200" gradientUnits="userSpaceOnUse" x1="1205" x2="1669" y1="0" y2="0"><stop offset="0" stop-color="#007eff"/><stop offset="0.231" stop-color="#0162ff"/><stop offset="0.297" stop-color="#3f57ff"/><stop offset="0.353" stop-color="#7a4dff"/><stop offset="0.42" stop-color="#ca40ff"/><stop offset="0.459" stop-color="#ff37ff"/><stop offset="0.5" stop-color="#ff25ce"/><stop offset="0.547" stop-color="#ff15a5"/><stop offset="0.603" stop-color="#ff0782"/><stop offset="0.657" stop-color="#ff0069"/><stop offset="0.739" stop-color="#ff004d"/><stop offset="0.825" stop-color="#ff0038"/><stop offset="1" stop-color="#ff001c"/></linearGradient><linearGradient id="g201" gradientUnits="userSpaceOnUse" x1="1205" x2="1663" y1="0" y2="0"><stop offset="0" stop-color="#007bff"/><stop offset="0.234" stop-color="#025fff"/><stop offset="0.301" stop-color="#4054ff"/><stop offset="0.354" stop-color="#764bff"/><stop offset="0.4" stop-color="#aa42ff"/><stop offset="0.467" stop-color="#ff33fd"/><stop offset="0.502" stop-color="#ff23d3"/><stop offset="0.537" stop-color="#ff18b3"/><stop offset="0.59" stop-color="#ff0a8f"/><stop offset="0.651" stop-color="#ff0070"/><stop offset="0.782" stop-color="#ff0045"/><stop offset="0.886" stop-color="#ff002f"/><stop offset="1" stop-color="#ff001e"/></linearGradient><linearGradient id="g202" gradientUnits="userSpaceOnUse" x1="1206" x2="1658" y1="0" y2="0"><stop offset="0" stop-color="#0078ff"/><stop offset="0.23" stop-color="#005cff"/><stop offset="0.303" stop-color="#4151ff"/><stop offset="0.358" stop-color="#7947ff"/><stop offset="0.416" stop-color="#ba3cff"/><stop offset="0.471" stop-color="#ff30fd"/><stop offset="0.513" stop-color="#ff1ecd"/><stop offset="0.558" stop-color="#ff11a8"/><stop offset="0.635" stop-color="#ff007b"/><stop offset="0.664" stop-color="#ff006e"/><stop offset="0.728" stop-color="#ff0057"/><stop offset="0.805" stop-color="#ff0042"/><stop offset="1" stop-color="#ff0020"/></linearGradient><linearGradient id="g203" gradientUnits="userSpaceOnUse" x1="1207" x2="1652" y1="0" y2="0"><stop offset="0" stop-color="#0075ff"/><stop offset="0.231" stop-color="#0159ff"/><stop offset="0.351" stop-color="#6e46ff"/><stop offset="0.404" stop-color="#a83cff"/><stop offset="0.476" stop-color="#ff2cfd"/><stop offset="0.515" stop-color="#ff1dd2"/><stop offset="0.56" stop-color="#ff10ac"/><stop offset="0.634" stop-color="#ff0080"/><stop offset="0.676" stop-color="#ff006d"/><stop offset="0.798" stop-color="#ff0047"/><stop offset="1" stop-color="#ff0023"/></linearGradient><linearGradient id="g204" gradientUnits="userSpaceOnUse" x1="1208" x2="1647" y1="0" y2="0"><stop offset="0" stop-color="#0073ff"/><stop offset="0.23" stop-color="#0157ff"/><stop offset="0.308" stop-color="#434bff"/><stop offset="0.355" stop-color="#7143ff"/><stop offset="0.415" stop-color="#b037ff"/><stop offset="0.481" stop-color="#ff29fe"/><stop offset="0.526" stop-color="#ff18cc"/><stop offset="0.567" stop-color="#ff0dab"/><stop offset="0.629" stop-color="#ff0087"/><stop offset="0.69" stop-color="#ff006b"/><stop offset="0.813" stop-color="#ff0046"/><stop offset="1" stop-color="#ff0025"/></linearGradient><linearGradient id="g205" gradientUnits="userSpaceOnUse" x1="1208" x2="1641" y1="0" y2="0"><stop offset="0" stop-color="#0070ff"/><stop offset="0.231" stop-color="#0054ff"/><stop offset="0.312" stop-color="#4448ff"/><stop offset="0.363" stop-color="#743fff"/><stop offset="0.427" stop-color="#b833ff"/><stop offset="0.487" stop-color="#ff26fe"/><stop offset="0.527" stop-color="#ff18d3"/><stop offset="0.577" stop-color="#ff0aaa"/><stop offset="0.626" stop-color="#ff008d"/><stop offset="0.681" stop-color="#ff0073"/><stop offset="0.811" stop-color="#ff004a"/><stop offset="1" stop-color="#ff0027"/></linearGradient><linearGradient id="g206" gradientUnits="userSpaceOnUse" x1="1209" x2="1635" y1="0" y2="0"><stop offset="0" stop-color="#006dff"/><stop offset="0.23" stop-color="#0052ff"/><stop offset="0.317" stop-color="#4745ff"/><stop offset="0.369" stop-color="#773cff"/><stop offset="0.427" stop-color="#b331ff"/><stop offset="0.493" stop-color="#ff23ff"/><stop offset="0.528" stop-color="#ff16d8"/><stop offset="0.58" stop-color="#ff09ae"/><stop offset="0.622" stop-color="#ff0094"/><stop offset="0.7" stop-color="#ff0070"/><stop offset="0.829" stop-color="#ff0049"/><stop offset="1" stop-color="#ff002a"/></linearGradient><linearGradient id="g207" gradientUnits="userSpaceOnUse" x1="1210" x2="1630" y1="0" y2="0"><stop offset="0" stop-color="#006aff"/><stop offset="0.231" stop-color="#014fff"/><stop offset="0.367" stop-color="#733aff"/><stop offset="0.443" stop-color="#c02bff"/><stop offset="0.498" stop-color="#ff1fff"/><stop offset="0.531" stop-color="#ff14db"/><stop offset="0.574" stop-color="#ff09b7"/><stop offset="0.619" stop-color="#ff009a"/><stop offset="0.662" stop-color="#ff0084"/><stop offset="0.729" stop-color="#ff0069"/><stop offset="0.805" stop-color="#ff0052"/><stop offset="1" stop-color="#ff002c"/></linearGradient><linearGradient id="g208" gradientUnits="userSpaceOnUse" x1="1211" x2="1624" y1="0" y2="0"><stop offset="0" stop-color="#0068ff"/><stop offset="0.232" stop-color="#024cff"/><stop offset="0.329" stop-color="#4f3eff"/><stop offset="0.383" stop-color="#7f34ff"/><stop offset="0.443" stop-color="#bb29ff"/><stop offset="0.504" stop-color="#ff1cff"/><stop offset="0.54" stop-color="#ff11d9"/><stop offset="0.584" stop-color="#ff06b6"/><stop offset="0.615" stop-color="#ff00a2"/><stop offset="0.685" stop-color="#ff007e"/><stop offset="0.818" stop-color="#ff0052"/><stop offset="1" stop-color="#ff002f"/></linearGradient><linearGradient id="g209" gradientUnits="userSpaceOnUse" x1="1212" x2="1618" y1="0" y2="0"><stop offset="0" stop-color="#0065ff"/><stop offset="0.229" stop-color="#004aff"/><stop offset="0.286" stop-color="#2a42ff"/><stop offset="0.382" stop-color="#7b32ff"/><stop offset="0.512" stop-color="#ff18fd"/><stop offset="0.544" stop-color="#ff0fdc"/><stop offset="0.586" stop-color="#ff05ba"/><stop offset="0.611" stop-color="#ff00aa"/><stop offset="0.682" stop-color="#ff0084"/><stop offset="0.744" stop-color="#ff006c"/><stop offset="0.825" stop-color="#ff0054"/><stop offset="1" stop-color="#ff0032"/></linearGradient><linearGradient id="g210" gradientUnits="userSpaceOnUse" x1="1212" x2="1613" y1="0" y2="0"><stop offset="0" stop-color="#0062ff"/><stop offset="0.229" stop-color="#0048ff"/><stop offset="0.292" stop-color="#2d3fff"/><stop offset="0.367" stop-color="#6a33ff"/><stop offset="0.441" stop-color="#af25ff"/><stop offset="0.519" stop-color="#ff15fd"/><stop offset="0.546" stop-color="#ff0ee1"/><stop offset="0.586" stop-color="#ff04c0"/><stop offset="0.636" stop-color="#ff00a0"/><stop offset="0.686" stop-color="#ff0087"/><stop offset="0.756" stop-color="#ff006c"/><stop offset="0.838" stop-color="#ff0054"/><stop offset="1" stop-color="#ff0034"/></linearGradient><linearGradient id="g211" gradientUnits="userSpaceOnUse" x1="1213" x2="1607" y1="0" y2="0"><stop offset="0" stop-color="#0060ff"/><stop offset="0.231" stop-color="#0145ff"/><stop offset="0.297" stop-color="#303cff"/><stop offset="0.376" stop-color="#6f2fff"/><stop offset="0.439" stop-color="#a824ff"/><stop offset="0.525" stop-color="#ff12fe"/><stop offset="0.558" stop-color="#ff0add"/><stop offset="0.599" stop-color="#ff01bd"/><stop offset="0.688" stop-color="#ff008b"/><stop offset="0.815" stop-color="#ff005e"/><stop offset="1" stop-color="#ff0037"/></linearGradient><linearGradient id="g212" gradientUnits="userSpaceOnUse" x1="1214" x2="1601" y1="0" y2="0"><stop offset="0" stop-color="#005dff"/><stop offset="0.233" stop-color="#0242ff"/><stop offset="0.3" stop-color="#3139ff"/><stop offset="0.385" stop-color="#742cff"/><stop offset="0.455" stop-color="#b21fff"/><stop offset="0.532" stop-color="#ff10fe"/><stop offset="0.571" stop-color="#ff06d9"/><stop offset="0.62" stop-color="#ff00b5"/><stop offset="0.713" stop-color="#ff0085"/><stop offset="0.829" stop-color="#ff005e"/><stop offset="1" stop-color="#ff003a"/></linearGradient><linearGradient id="g213" gradientUnits="userSpaceOnUse" x1="1215" x2="1596" y1="0" y2="0"><stop offset="0" stop-color="#005aff"/><stop offset="0.228" stop-color="#0040ff"/><stop offset="0.302" stop-color="#3236ff"/><stop offset="0.394" stop-color="#7928ff"/><stop offset="0.465" stop-color="#b71bff"/><stop offset="0.538" stop-color="#ff0dfe"/><stop offset="0.593" stop-color="#ff00ce"/><stop offset="0.622" stop-color="#ff00b9"/><stop offset="0.714" stop-color="#ff0089"/><stop offset="0.835" stop-color="#ff0060"/><stop offset="1" stop-color="#ff003d"/></linearGradient><linearGradient id="g214" gradientUnits="userSpaceOnUse" x1="1216" x2="1590" y1="0" y2="0"><stop offset="0" stop-color="#0058ff"/><stop offset="0.23" stop-color="#013eff"/><stop offset="0.305" stop-color="#3334ff"/><stop offset="0.388" stop-color="#7127ff"/><stop offset="0.476" stop-color="#bc18ff"/><stop offset="0.545" stop-color="#ff0aff"/><stop offset="0.588" stop-color="#ff00d8"/><stop offset="0.626" stop-color="#ff00bd"/><stop offset="0.719" stop-color="#ff008c"/><stop offset="0.85" stop-color="#ff0060"/><stop offset="1" stop-color="#ff0041"/></linearGradient><linearGradient id="g215" gradientUnits="userSpaceOnUse" x1="1217" x2="1584" y1="0" y2="0"><stop offset="0" stop-color="#0055ff"/><stop offset="0.229" stop-color="#013cff"/><stop offset="0.308" stop-color="#3431ff"/><stop offset="0.401" stop-color="#7823ff"/><stop offset="0.488" stop-color="#c114ff"/><stop offset="0.553" stop-color="#ff07ff"/><stop offset="0.586" stop-color="#ff00e1"/><stop offset="0.627" stop-color="#ff00c3"/><stop offset="0.725" stop-color="#ff008f"/><stop offset="0.847" stop-color="#ff0065"/><stop offset="1" stop-color="#ff0044"/></linearGradient><linearGradient id="g216" gradientUnits="userSpaceOnUse" x1="1218" x2="1579" y1="0" y2="0"><stop offset="0" stop-color="#0053ff"/><stop offset="0.227" stop-color="#003aff"/><stop offset="0.335" stop-color="#462bff"/><stop offset="0.413" stop-color="#7f1fff"/><stop offset="0.499" stop-color="#c610ff"/><stop offset="0.56" stop-color="#ff04ff"/><stop offset="0.601" stop-color="#ff00db"/><stop offset="0.64" stop-color="#ff00c0"/><stop offset="0.745" stop-color="#ff008b"/><stop offset="0.861" stop-color="#ff0065"/><stop offset="1" stop-color="#ff0047"/></linearGradient><linearGradient id="g217" gradientUnits="userSpaceOnUse" x1="1219" x2="1573" y1="0" y2="0"><stop offset="0" stop-color="#0050ff"/><stop offset="0.226" stop-color="#0037ff"/><stop offset="0.311" stop-color="#342cff"/><stop offset="0.404" stop-color="#751fff"/><stop offset="0.483" stop-color="#b311ff"/><stop offset="0.571" stop-color="#ff01fd"/><stop offset="0.644" stop-color="#ff00c4"/><stop offset="0.734" stop-color="#ff0095"/><stop offset="0.856" stop-color="#ff006b"/><stop offset="1" stop-color="#ff004b"/></linearGradient><linearGradient id="g218" gradientUnits="userSpaceOnUse" x1="1219" x2="1567" y1="0" y2="0"><stop offset="0" stop-color="#004eff"/><stop offset="0.23" stop-color="#0135ff"/><stop offset="0.336" stop-color="#4227ff"/><stop offset="0.422" stop-color="#7e1aff"/><stop offset="0.506" stop-color="#bf0cff"/><stop offset="0.58" stop-color="#ff00fd"/><stop offset="0.647" stop-color="#ff00ca"/><stop offset="0.707" stop-color="#ff00a8"/><stop offset="0.756" stop-color="#ff0092"/><stop offset="0.862" stop-color="#ff006e"/><stop offset="1" stop-color="#ff004f"/></linearGradient><linearGradient id="g219" gradientUnits="userSpaceOnUse" x1="1220" x2="1562" y1="0" y2="0"><stop offset="0" stop-color="#004bff"/><stop offset="0.231" stop-color="#0233ff"/><stop offset="0.336" stop-color="#4125ff"/><stop offset="0.409" stop-color="#721aff"/><stop offset="0.482" stop-color="#a80fff"/><stop offset="0.564" stop-color="#ec00ff"/><stop offset="0.588" stop-color="#ff00fe"/><stop offset="0.661" stop-color="#ff00c7"/><stop offset="0.76" stop-color="#ff0095"/><stop offset="0.863" stop-color="#ff0072"/><stop offset="1" stop-color="#ff0052"/></linearGradient><linearGradient id="g220" gradientUnits="userSpaceOnUse" x1="1221" x2="1556" y1="0" y2="0"><stop offset="0" stop-color="#0049ff"/><stop offset="0.227" stop-color="#0031ff"/><stop offset="0.34" stop-color="#4222ff"/><stop offset="0.433" stop-color="#7f15ff"/><stop offset="0.558" stop-color="#df00ff"/><stop offset="0.597" stop-color="#ff00fe"/><stop offset="0.636" stop-color="#ff00df"/><stop offset="0.678" stop-color="#ff00c4"/><stop offset="0.77" stop-color="#ff0097"/><stop offset="0.884" stop-color="#ff0071"/><stop offset="1" stop-color="#ff0056"/></linearGradient><linearGradient id="g221" gradientUnits="userSpaceOnUse" x1="1222" x2="1550" y1="0" y2="0"><stop offset="0" stop-color="#0046ff"/><stop offset="0.229" stop-color="#012fff"/><stop offset="0.341" stop-color="#4120ff"/><stop offset="0.454" stop-color="#8a10ff"/><stop offset="0.552" stop-color="#d300ff"/><stop offset="0.607" stop-color="#ff00fe"/><stop offset="0.683" stop-color="#ff00c8"/><stop offset="0.765" stop-color="#ff009f"/><stop offset="0.86" stop-color="#ff007d"/><stop offset="1" stop-color="#ff005a"/></linearGradient><linearGradient id="g222" gradientUnits="userSpaceOnUse" x1="1223" x2="1545" y1="0" y2="0"><stop offset="0" stop-color="#0044ff"/><stop offset="0.227" stop-color="#012dff"/><stop offset="0.342" stop-color="#401eff"/><stop offset="0.441" stop-color="#7e11ff"/><stop offset="0.543" stop-color="#c700ff"/><stop offset="0.615" stop-color="#ff00ff"/><stop offset="0.683" stop-color="#ff00ce"/><stop offset="0.773" stop-color="#ff00a1"/><stop offset="0.885" stop-color="#ff007a"/><stop offset="1" stop-color="#ff005e"/></linearGradient><linearGradient id="g223" gradientUnits="userSpaceOnUse" x1="1224" x2="1539" y1="0" y2="0"><stop offset="0" stop-color="#0041ff"/><stop offset="0.229" stop-color="#022aff"/><stop offset="0.343" stop-color="#3f1cff"/><stop offset="0.47" stop-color="#8d0bff"/><stop offset="0.537" stop-color="#bb00ff"/><stop offset="0.625" stop-color="#ff00ff"/><stop offset="0.702" stop-color="#ff00cb"/><stop offset="0.794" stop-color="#ff009f"/><stop offset="0.911" stop-color="#ff0078"/><stop offset="1" stop-color="#ff0063"/></linearGradient><linearGradient id="g224" gradientUnits="userSpaceOnUse" x1="1225" x2="1534" y1="0" y2="0"><stop offset="0" stop-color="#003fff"/><stop offset="0.223" stop-color="#0029ff"/><stop offset="0.33" stop-color="#371cff"/><stop offset="0.453" stop-color="#7f0cff"/><stop offset="0.531" stop-color="#b300ff"/><stop offset="0.634" stop-color="#ff00ff"/><stop offset="0.706" stop-color="#ff00cf"/><stop offset="0.773" stop-color="#ff00ad"/><stop offset="0.854" stop-color="#ff008e"/><stop offset="1" stop-color="#ff0067"/></linearGradient><linearGradient id="g225" gradientUnits="userSpaceOnUse" x1="1226" x2="1528" y1="0" y2="0"><stop offset="0" stop-color="#003dff"/><stop offset="0.225" stop-color="#0126ff"/><stop offset="0.414" stop-color="#6410ff"/><stop offset="0.523" stop-color="#a800ff"/><stop offset="0.646" stop-color="#fe00ff"/><stop offset="0.725" stop-color="#ff00cc"/><stop offset="0.801" stop-color="#ff00a8"/><stop offset="0.858" stop-color="#ff0093"/><stop offset="1" stop-color="#ff006c"/></linearGradient><linearGradient id="g226" gradientUnits="userSpaceOnUse" x1="1227" x2="1522" y1="0" y2="0"><stop offset="0" stop-color="#003aff"/><stop offset="0.227" stop-color="#0224ff"/><stop offset="0.407" stop-color="#5d0fff"/><stop offset="0.515" stop-color="#9d00ff"/><stop offset="0.658" stop-color="#fe00ff"/><stop offset="0.732" stop-color="#ff00d0"/><stop offset="0.797" stop-color="#ff00b1"/><stop offset="0.898" stop-color="#ff008c"/><stop offset="1" stop-color="#ff0071"/></linearGradient><linearGradient id="g227" gradientUnits="userSpaceOnUse" x1="1228" x2="1517" y1="0" y2="0"><stop offset="0" stop-color="#0038ff"/><stop offset="0.221" stop-color="#0023ff"/><stop offset="0.436" stop-color="#6b0aff"/><stop offset="0.505" stop-color="#9300ff"/><stop offset="0.668" stop-color="#fe00ff"/><stop offset="0.73" stop-color="#ff00d8"/><stop offset="0.806" stop-color="#ff00b3"/><stop offset="0.896" stop-color="#ff0092"/><stop offset="1" stop-color="#ff0076"/></linearGradient><linearGradient id="g228" gradientUnits="userSpaceOnUse" x1="1229" x2="1511" y1="0" y2="0"><stop offset="0" stop-color="#0035ff"/><stop offset="0.22" stop-color="#0021ff"/><stop offset="0.34" stop-color="#3714ff"/><stop offset="0.486" stop-color="#8302ff"/><stop offset="0.585" stop-color="#be00ff"/><stop offset="0.681" stop-color="#fe00ff"/><stop offset="0.759" stop-color="#ff00d1"/><stop offset="0.819" stop-color="#ff00b5"/><stop offset="0.904" stop-color="#ff0096"/><stop offset="1" stop-color="#ff007c"/></linearGradient><linearGradient id="g229" gradientUnits="userSpaceOnUse" x1="1230" x2="1505" y1="0" y2="0"><stop offset="0" stop-color="#0033ff"/><stop offset="0.222" stop-color="#011fff"/><stop offset="0.331" stop-color="#3113ff"/><stop offset="0.458" stop-color="#7004ff"/><stop offset="0.575" stop-color="#b100ff"/><stop offset="0.695" stop-color="#fd00ff"/><stop offset="0.764" stop-color="#ff00d7"/><stop offset="0.858" stop-color="#ff00ad"/><stop offset="1" stop-color="#ff0082"/></linearGradient><linearGradient id="g230" gradientUnits="userSpaceOnUse" x1="1231" x2="1500" y1="0" y2="0"><stop offset="0" stop-color="#0031ff"/><stop offset="0.223" stop-color="#021dff"/><stop offset="0.346" stop-color="#3710ff"/><stop offset="0.498" stop-color="#8200ff"/><stop offset="0.602" stop-color="#bc00ff"/><stop offset="0.71" stop-color="#ff00ff"/><stop offset="0.825" stop-color="#ff00c1"/><stop offset="0.922" stop-color="#ff009d"/><stop offset="1" stop-color="#ff0087"/></linearGradient><linearGradient id="g231" gradientUnits="userSpaceOnUse" x1="1232" x2="1494" y1="0" y2="0"><stop offset="0" stop-color="#002eff"/><stop offset="0.218" stop-color="#001bff"/><stop offset="0.363" stop-color="#3d0cff"/><stop offset="0.481" stop-color="#7500ff"/><stop offset="0.611" stop-color="#ba00ff"/><stop offset="0.725" stop-color="#ff00ff"/><stop offset="0.763" stop-color="#ff00e8"/><stop offset="0.84" stop-color="#ff00c3"/><stop offset="1" stop-color="#ff008d"/></linearGradient><linearGradient id="g232" gradientUnits="userSpaceOnUse" x1="1233" x2="1488" y1="0" y2="0"><stop offset="0" stop-color="#002cff"/><stop offset="0.22" stop-color="#0119ff"/><stop offset="0.459" stop-color="#6700ff"/><stop offset="0.514" stop-color="#8100ff"/><stop offset="0.643" stop-color="#c500ff"/><stop offset="0.741" stop-color="#ff00ff"/><stop offset="0.863" stop-color="#ff00c2"/><stop offset="1" stop-color="#ff0094"/></linearGradient><linearGradient id="g233" gradientUnits="userSpaceOnUse" x1="1234" x2="1483" y1="0" y2="0"><stop offset="0" stop-color="#002aff"/><stop offset="0.221" stop-color="#0217ff"/><stop offset="0.45" stop-color="#6000ff"/><stop offset="0.502" stop-color="#7800ff"/><stop offset="0.627" stop-color="#b600ff"/><stop offset="0.755" stop-color="#ff00ff"/><stop offset="0.876" stop-color="#ff00c4"/><stop offset="1" stop-color="#ff009b"/></linearGradient><linearGradient id="g234" gradientUnits="userSpaceOnUse" x1="1235" x2="1477" y1="0" y2="0"><stop offset="0" stop-color="#0027ff"/><stop offset="0.219" stop-color="#0215ff"/><stop offset="0.438" stop-color="#5800ff"/><stop offset="0.496" stop-color="#7100ff"/><stop offset="0.632" stop-color="#b200ff"/><stop offset="0.773" stop-color="#fe00ff"/><stop offset="0.864" stop-color="#ff00d2"/><stop offset="1" stop-color="#ff00a2"/></linearGradient><linearGradient id="g235" gradientUnits="userSpaceOnUse" x1="1236" x2="1471" y1="0" y2="0"><stop offset="0" stop-color="#0025ff"/><stop offset="0.213" stop-color="#0014ff"/><stop offset="0.426" stop-color="#5000ff"/><stop offset="0.523" stop-color="#7900ff"/><stop offset="0.638" stop-color="#ae00ff"/><stop offset="0.791" stop-color="#fe00ff"/><stop offset="0.894" stop-color="#ff00cf"/><stop offset="1" stop-color="#ff00aa"/></linearGradient><linearGradient id="g236" gradientUnits="userSpaceOnUse" x1="1237" x2="1466" y1="0" y2="0"><stop offset="0" stop-color="#0023ff"/><stop offset="0.214" stop-color="#0112ff"/><stop offset="0.41" stop-color="#4800ff"/><stop offset="0.55" stop-color="#8100ff"/><stop offset="0.69" stop-color="#c100ff"/><stop offset="0.808" stop-color="#fe00ff"/><stop offset="0.904" stop-color="#ff00d3"/><stop offset="1" stop-color="#ff00b1"/></linearGradient><linearGradient id="g237" gradientUnits="userSpaceOnUse" x1="1238" x2="1460" y1="0" y2="0"><stop offset="0" stop-color="#0021ff"/><stop offset="0.216" stop-color="#0210ff"/><stop offset="0.396" stop-color="#4100ff"/><stop offset="0.545" stop-color="#7a00ff"/><stop offset="0.703" stop-color="#bf00ff"/><stop offset="0.829" stop-color="#fd00ff"/><stop offset="0.919" stop-color="#ff00d7"/><stop offset="1" stop-color="#ff00ba"/></linearGradient><linearGradient id="g238" gradientUnits="userSpaceOnUse" x1="1240" x2="1454" y1="0" y2="0"><stop offset="0" stop-color="#001eff"/><stop offset="0.206" stop-color="#000fff"/><stop offset="0.383" stop-color="#3b00ff"/><stop offset="0.542" stop-color="#7500ff"/><stop offset="0.715" stop-color="#bd00ff"/><stop offset="0.855" stop-color="#ff00ff"/><stop offset="0.935" stop-color="#ff00db"/><stop offset="1" stop-color="#ff00c4"/></linearGradient><linearGradient id="g239" gradientUnits="userSpaceOnUse" x1="1241" x2="1449" y1="0" y2="0"><stop offset="0" stop-color="#001cff"/><stop offset="0.202" stop-color="#000dff"/><stop offset="0.365" stop-color="#3400ff"/><stop offset="0.567" stop-color="#7b00ff"/><stop offset="0.716" stop-color="#b700ff"/><stop offset="0.875" stop-color="#ff00ff"/><stop offset="1" stop-color="#ff00cc"/></linearGradient><linearGradient id="g240" gradientUnits="userSpaceOnUse" x1="1242" x2="1443" y1="0" y2="0"><stop offset="0" stop-color="#001aff"/><stop offset="0.204" stop-color="#010bff"/><stop offset="0.348" stop-color="#2d00ff"/><stop offset="0.567" stop-color="#7600ff"/><stop offset="0.791" stop-color="#ce00ff"/><stop offset="0.9" stop-color="#ff00ff"/><stop offset="1" stop-color="#ff00d7"/></linearGradient><linearGradient id="g241" gradientUnits="userSpaceOnUse" x1="1243" x2="1437" y1="0" y2="0"><stop offset="0" stop-color="#0018ff"/><stop offset="0.206" stop-color="#020aff"/><stop offset="0.33" stop-color="#2600ff"/><stop offset="0.598" stop-color="#7c00ff"/><stop offset="0.814" stop-color="#ce00ff"/><stop offset="0.928" stop-color="#ff00ff"/><stop offset="1" stop-color="#ff00e2"/></linearGradient><linearGradient id="g242" gradientUnits="userSpaceOnUse" x1="1244" x2="1432" y1="0" y2="0"><stop offset="0" stop-color="#0015ff"/><stop offset="0.197" stop-color="#0008ff"/><stop offset="0.309" stop-color="#1f00ff"/><stop offset="0.596" stop-color="#7700ff"/><stop offset="0.835" stop-color="#ce00ff"/><stop offset="0.952" stop-color="#fe00ff"/><stop offset="1" stop-color="#ff00ec"/></linearGradient><linearGradient id="g243" gradientUnits="userSpaceOnUse" x1="1246" x2="1426" y1="0" y2="0"><stop offset="0" stop-color="#0013ff"/><stop offset="0.189" stop-color="#0007ff"/><stop offset="0.222" stop-color="#0805ff"/><stop offset="0.289" stop-color="#1a00ff"/><stop offset="0.6" stop-color="#7400ff"/><stop offset="0.744" stop-color="#a400ff"/><stop offset="0.983" stop-color="#fe00ff"/><stop offset="1" stop-color="#ff00f9"/></linearGradient><linearGradient id="g244" gradientUnits="userSpaceOnUse" x1="1247" x2="1421" y1="0" y2="0"><stop offset="0" stop-color="#0011ff"/><stop offset="0.184" stop-color="#0006ff"/><stop offset="0.264" stop-color="#1300ff"/><stop offset="0.626" stop-color="#7800ff"/><stop offset="0.782" stop-color="#aa00ff"/><stop offset="1" stop-color="#f900ff"/></linearGradient><linearGradient id="g245" gradientUnits="userSpaceOnUse" x1="1248" x2="1415" y1="0" y2="0"><stop offset="0" stop-color="#000fff"/><stop offset="0.18" stop-color="#0004ff"/><stop offset="0.228" stop-color="#0a01ff"/><stop offset="0.635" stop-color="#7500ff"/><stop offset="0.832" stop-color="#b200ff"/><stop offset="1" stop-color="#ec00ff"/></linearGradient><linearGradient id="g246" gradientUnits="userSpaceOnUse" x1="1250" x2="1409" y1="0" y2="0"><stop offset="0" stop-color="#000cff"/><stop offset="0.176" stop-color="#0002ff"/><stop offset="0.258" stop-color="#1200ff"/><stop offset="0.642" stop-color="#7200ff"/><stop offset="1" stop-color="#df00ff"/></linearGradient><linearGradient id="g247" gradientUnits="userSpaceOnUse" x1="1251" x2="1404" y1="0" y2="0"><stop offset="0" stop-color="#000aff"/><stop offset="0.17" stop-color="#0001ff"/><stop offset="0.196" stop-color="#0500ff"/><stop offset="0.627" stop-color="#6a00ff"/><stop offset="1" stop-color="#d500ff"/></linearGradient><linearGradient id="g248" gradientUnits="userSpaceOnUse" x1="1252" x2="1398" y1="0" y2="0"><stop offset="0" stop-color="#0008ff"/><stop offset="0.164" stop-color="#0000ff"/><stop offset="0.199" stop-color="#0600ff"/><stop offset="0.644" stop-color="#6900ff"/><stop offset="1" stop-color="#c900ff"/></linearGradient><linearGradient id="g249" gradientUnits="userSpaceOnUse" x1="1254" x2="1392" y1="0" y2="0"><stop offset="0" stop-color="#0006ff"/><stop offset="0.159" stop-color="#0000ff"/><stop offset="0.594" stop-color="#5900ff"/><stop offset="1" stop-color="#bd00ff"/></linearGradient><linearGradient id="g250" gradientUnits="userSpaceOnUse" x1="1255" x2="1387" y1="0" y2="0"><stop offset="0" stop-color="#0004ff"/><stop offset="0.159" stop-color="#0100ff"/><stop offset="0.606" stop-color="#5800ff"/><stop offset="1" stop-color="#b300ff"/></linearGradient><linearGradient id="g251" gradientUnits="userSpaceOnUse" x1="1257" x2="1381" y1="0" y2="0"><stop offset="0" stop-color="#0001ff"/><stop offset="0.137" stop-color="#0000ff"/><stop offset="0.177" stop-color="#0600ff"/><stop offset="0.621" stop-color="#5700ff"/><stop offset="1" stop-color="#a800ff"/></linearGradient><linearGradient id="g252" gradientUnits="userSpaceOnUse" x1="1259" x2="1375" y1="0" y2="0"><stop offset="0" stop-color="#0000ff"/><stop offset="0.121" stop-color="#0000ff"/><stop offset="0.172" stop-color="#0700ff"/><stop offset="0.638" stop-color="#5600ff"/><stop offset="1" stop-color="#9e00ff"/></linearGradient><linearGradient id="g253" gradientUnits="userSpaceOnUse" x1="1260" x2="1370" y1="0" y2="0"><stop offset="0" stop-color="#0000ff"/><stop offset="0.118" stop-color="#0000ff"/><stop offset="0.2" stop-color="#0c00ff"/><stop offset="0.636" stop-color="#5200ff"/><stop offset="1" stop-color="#9500ff"/></linearGradient><linearGradient id="g254" gradientUnits="userSpaceOnUse" x1="1262" x2="1364" y1="0" y2="0"><stop offset="0" stop-color="#0000ff"/><stop offset="0.098" stop-color="#0000ff"/><stop offset="0.225" stop-color="#1100ff"/><stop offset="0.657" stop-color="#5100ff"/><stop offset="1" stop-color="#8b00ff"/></linearGradient><linearGradient id="g255" gradientUnits="userSpaceOnUse" x1="1264" x2="1358" y1="0" y2="0"><stop offset="0" stop-color="#0000ff"/><stop offset="0.074" stop-color="#0000ff"/><stop offset="0.255" stop-color="#1600ff"/><stop offset="0.66" stop-color="#4d00ff"/><stop offset="1" stop-color="#8100ff"/></linearGradient><linearGradient id="g256" gradientUnits="userSpaceOnUse" x1="1266" x2="1353" y1="0" y2="0"><stop offset="0" stop-color="#0000ff"/><stop offset="0.08" stop-color="#0300ff"/><stop offset="0.287" stop-color="#1b00ff"/><stop offset="1" stop-color="#7900ff"/></linearGradient><linearGradient id="g257" gradientUnits="userSpaceOnUse" x1="1268" x2="1347" y1="0" y2="0"><stop offset="0" stop-color="#0000ff"/><stop offset="0.456" stop-color="#2e00ff"/><stop offset="1" stop-color="#7000ff"/></linearGradient><linearGradient id="g258" gradientUnits="userSpaceOnUse" x1="1271" x2="1341" y1="0" y2="0"><stop offset="0" stop-color="#0200ff"/><stop offset="1" stop-color="#6700ff"/></linearGradient><linearGradient id="g259" gradientUnits="userSpaceOnUse" x1="1273" x2="1336" y1="0" y2="0"><stop offset="0" stop-color="#0600ff"/><stop offset="1" stop-color="#5f00ff"/></linearGradient><linearGradient id="g260" gradientUnits="userSpaceOnUse" x1="1276" x2="1330" y1="0" y2="0"><stop offset="0" stop-color="#0b00ff"/><stop offset="1" stop-color="#5700ff"/></linearGradient><linearGradient id="g261" gradientUnits="userSpaceOnUse" x1="1279" x2="1324" y1="0" y2="0"><stop offset="0" stop-color="#1000ff"/><stop offset="1" stop-color="#4e00ff"/></linearGradient><linearGradient id="g262" gradientUnits="userSpaceOnUse" x1="1282" x2="1319" y1="0" y2="0"><stop offset="0" stop-color="#1400ff"/><stop offset="1" stop-color="#4800ff"/></linearGradient><linearGradient id="g263" gradientUnits="userSpaceOnUse" x1="1285" x2="1313" y1="0" y2="0"><stop offset="0" stop-color="#1900ff"/><stop offset="1" stop-color="#4000ff"/></linearGradient><linearGradient id="g264" gradientUnits="userSpaceOnUse" x1="1288" x2="1308" y1="0" y2="0"><stop offset="0" stop-color="#1e00ff"/><stop offset="1" stop-color="#3900ff"/></linearGradient><linearGradient id="g265" gradientUnits="userSpaceOnUse" x1="1291" x2="1302" y1="0" y2="0"><stop offset="0" stop-color="#2300ff"/><stop offset="1" stop-color="#3200ff"/></linearGradient><linearGradient id="i0" gradientUnits="userSpaceOnUse" x1="1612" x2="1849" y1="0" y2="0"><stop offset="0" stop-color="#b0ff00"/><stop offset="0.802" stop-color="#ffff00"/><stop offset="1" stop-color="#ffeb00"/></linearGradient><linearGradient id="i1" gradientUnits="userSpaceOnUse" x1="1612" x2="1849" y1="0" y2="0"><stop offset="0" stop-color="#b1ff00"/><stop offset="0.793" stop-color="#ffff00"/><stop offset="1" stop-color="#ffea00"/></linearGradient><linearGradient id="i2" gradientUnits="userSpaceOnUse" x1="1612" x2="1849" y1="0" y2="0"><stop offset="0" stop-color="#b2ff00"/><stop offset="0.785" stop-color="#ffff00"/><stop offset="1" stop-color="#ffe900"/></linearGradient><linearGradient id="i3" gradientUnits="userSpaceOnUse" x1="1612" x2="1849" y1="0" y2="0"><stop offset="0" stop-color="#b3ff00"/><stop offset="0.768" stop-color="#ffff00"/><stop offset="1" stop-color="#ffe900"/></linearGradient><linearGradient id="i4" gradientUnits="userSpaceOnUse" x1="1612" x2="1849" y1="0" y2="0"><stop offset="0" stop-color="#b3ff00"/><stop offset="0.759" stop-color="#ffff00"/><stop offset="1" stop-color="#ffe800"/></linearGradient><linearGradient id="i5" gradientUnits="userSpaceOnUse" x1="1612" x2="1849" y1="0" y2="0"><stop offset="0" stop-color="#b4ff00"/><stop offset="0.751" stop-color="#ffff00"/><stop offset="1" stop-color="#ffe700"/></linearGradient><linearGradient id="i6" gradientUnits="userSpaceOnUse" x1="1612" x2="1849" y1="0" y2="0"><stop offset="0" stop-color="#b5ff00"/><stop offset="0.743" stop-color="#ffff00"/><stop offset="1" stop-color="#ffe600"/></linearGradient><linearGradient id="i7" gradientUnits="userSpaceOnUse" x1="1612" x2="1849" y1="0" y2="0"><stop offset="0" stop-color="#b5ff00"/><stop offset="0.734" stop-color="#ffff00"/><stop offset="1" stop-color="#ffe500"/></linearGradient><linearGradient id="i8" gradientUnits="userSpaceOnUse" x1="1612" x2="1849" y1="0" y2="0"><stop offset="0" stop-color="#b6ff01"/><stop offset="0.726" stop-color="#ffff00"/><stop offset="1" stop-color="#ffe400"/></linearGradient><linearGradient id="i9" gradientUnits="userSpaceOnUse" x1="1612" x2="1849" y1="0" y2="0"><stop offset="0" stop-color="#b7ff01"/><stop offset="0.713" stop-color="#ffff00"/><stop offset="1" stop-color="#ffe300"/></linearGradient><linearGradient id="i10" gradientUnits="userSpaceOnUse" x1="1612" x2="1849" y1="0" y2="0"><stop offset="0" stop-color="#b8ff01"/><stop offset="0.705" stop-color="#ffff00"/><stop offset="1" stop-color="#ffe200"/></linearGradient><linearGradient id="i11" gradientUnits="userSpaceOnUse" x1="1612" x2="1849" y1="0" y2="0"><stop offset="0" stop-color="#b8ff02"/><stop offset="0.696" stop-color="#ffff00"/><stop offset="1" stop-color="#ffe200"/></linearGradient><linearGradient id="i12" gradientUnits="userSpaceOnUse" x1="1612" x2="1849" y1="0" y2="0"><stop offset="0" stop-color="#b9ff02"/><stop offset="0.688" stop-color="#ffff00"/><stop offset="1" stop-color="#ffe100"/></linearGradient><linearGradient id="i13" gradientUnits="userSpaceOnUse" x1="1612" x2="1849" y1="0" y2="0"><stop offset="0" stop-color="#baff03"/><stop offset="0.105" stop-color="#c4ff00"/><stop offset="0.679" stop-color="#ffff00"/><stop offset="1" stop-color="#ffe000"/></linearGradient><linearGradient id="i14" gradientUnits="userSpaceOnUse" x1="1612" x2="1849" y1="0" y2="0"><stop offset="0" stop-color="#bbff03"/><stop offset="0.671" stop-color="#ffff00"/><stop offset="1" stop-color="#ffdf00"/></linearGradient><linearGradient id="i15" gradientUnits="userSpaceOnUse" x1="1612" x2="1849" y1="0" y2="0"><stop offset="0" stop-color="#bcff04"/><stop offset="0.143" stop-color="#c9ff00"/><stop offset="0.658" stop-color="#ffff00"/><stop offset="1" stop-color="#ffde00"/></linearGradient><linearGradient id="i16" gradientUnits="userSpaceOnUse" x1="1612" x2="1849" y1="0" y2="0"><stop offset="0" stop-color="#bcff04"/><stop offset="0.16" stop-color="#ccff00"/><stop offset="0.65" stop-color="#ffff00"/><stop offset="1" stop-color="#ffdd00"/></linearGradient><linearGradient id="i17" gradientUnits="userSpaceOnUse" x1="1612" x2="1849" y1="0" y2="0"><stop offset="0" stop-color="#bdff04"/><stop offset="0.181" stop-color="#cfff00"/><stop offset="0.641" stop-color="#ffff00"/><stop offset="1" stop-color="#ffdd00"/></linearGradient><linearGradient id="i18" gradientUnits="userSpaceOnUse" x1="1612" x2="1849" y1="0" y2="0"><stop offset="0" stop-color="#beff05"/><stop offset="0.198" stop-color="#d1ff00"/><stop offset="0.633" stop-color="#ffff00"/><stop offset="1" stop-color="#ffdc00"/></linearGradient><linearGradient id="i19" gradientUnits="userSpaceOnUse" x1="1612" x2="1849" y1="0" y2="0"><stop offset="0" stop-color="#bfff05"/><stop offset="0.219" stop-color="#d4ff00"/><stop offset="0.624" stop-color="#ffff00"/><stop offset="1" stop-color="#ffdb00"/></linearGradient><linearGradient id="i20" gradientUnits="userSpaceOnUse" x1="1612" x2="1849" y1="0" y2="0"><stop offset="0" stop-color="#bfff06"/><stop offset="0.236" stop-color="#d7ff00"/><stop offset="0.616" stop-color="#ffff00"/><stop offset="1" stop-color="#ffda00"/></linearGradient><linearGradient id="i21" gradientUnits="userSpaceOnUse" x1="1612" x2="1849" y1="0" y2="0"><stop offset="0" stop-color="#c0ff06"/><stop offset="0.257" stop-color="#daff00"/><stop offset="0.608" stop-color="#ffff00"/><stop offset="1" stop-color="#ffd900"/></linearGradient><linearGradient id="i22" gradientUnits="userSpaceOnUse" x1="1612" x2="1849" y1="0" y2="0"><stop offset="0" stop-color="#c1ff06"/><stop offset="0.274" stop-color="#ddff00"/><stop offset="0.595" stop-color="#ffff00"/><stop offset="1" stop-color="#ffd800"/></linearGradient><linearGradient id="i23" gradientUnits="userSpaceOnUse" x1="1612" x2="1849" y1="0" y2="0"><stop offset="0" stop-color="#c2ff07"/><stop offset="0.295" stop-color="#e0ff00"/><stop offset="0.586" stop-color="#ffff00"/><stop offset="1" stop-color="#ffd800"/></linearGradient><linearGradient id="i24" gradientUnits="userSpaceOnUse" x1="1612" x2="1849" y1="0" y2="0"><stop offset="0" stop-color="#c3ff07"/><stop offset="0.312" stop-color="#e2ff00"/><stop offset="0.578" stop-color="#ffff00"/><stop offset="1" stop-color="#ffd700"/></linearGradient><linearGradient id="i25" gradientUnits="userSpaceOnUse" x1="1612" x2="1849" y1="0" y2="0"><stop offset="0" stop-color="#c3ff08"/><stop offset="0.333" stop-color="#e5ff00"/><stop offset="0.57" stop-color="#ffff00"/><stop offset="1" stop-color="#ffd600"/></linearGradient><linearGradient id="i26" gradientUnits="userSpaceOnUse" x1="1612" x2="1849" y1="0" y2="0"><stop offset="0" stop-color="#c4ff08"/><stop offset="0.35" stop-color="#e8ff00"/><stop offset="0.561" stop-color="#ffff00"/><stop offset="1" stop-color="#ffd500"/></linearGradient><linearGradient id="i27" gradientUnits="userSpaceOnUse" x1="1612" x2="1849" y1="0" y2="0"><stop offset="0" stop-color="#c5ff09"/><stop offset="0.371" stop-color="#ebff00"/><stop offset="0.553" stop-color="#ffff00"/><stop offset="1" stop-color="#ffd400"/></linearGradient><linearGradient id="i28" gradientUnits="userSpaceOnUse" x1="1612" x2="1849" y1="0" y2="0"><stop offset="0" stop-color="#c6ff09"/><stop offset="0.388" stop-color="#eeff00"/><stop offset="0.54" stop-color="#ffff00"/><stop offset="1" stop-color="#ffd300"/></linearGradient><linearGradient id="i29" gradientUnits="userSpaceOnUse" x1="1612" x2="1849" y1="0" y2="0"><stop offset="0" stop-color="#c7ff0a"/><stop offset="0.532" stop-color="#ffff00"/><stop offset="1" stop-color="#ffd300"/></linearGradient><linearGradient id="i30" gradientUnits="userSpaceOnUse" x1="1612" x2="1849" y1="0" y2="0"><stop offset="0" stop-color="#c7ff0a"/><stop offset="0.523" stop-color="#ffff00"/><stop offset="1" stop-color="#ffd200"/></linearGradient><linearGradient id="i31" gradientUnits="userSpaceOnUse" x1="1612" x2="1849" y1="0" y2="0"><stop offset="0" stop-color="#c8ff0a"/><stop offset="0.515" stop-color="#ffff00"/><stop offset="1" stop-color="#ffd100"/></linearGradient><linearGradient id="i32" gradientUnits="userSpaceOnUse" x1="1612" x2="1849" y1="0" y2="0"><stop offset="0" stop-color="#c9ff0b"/><stop offset="0.506" stop-color="#ffff00"/><stop offset="1" stop-color="#ffd000"/></linearGradient><linearGradient id="i33" gradientUnits="userSpaceOnUse" x1="1612" x2="1849" y1="0" y2="0"><stop offset="0" stop-color="#caff0b"/><stop offset="0.498" stop-color="#ffff00"/><stop offset="1" stop-color="#ffcf00"/></linearGradient><linearGradient id="i34" gradientUnits="userSpaceOnUse" x1="1612" x2="1849" y1="0" y2="0"><stop offset="0" stop-color="#cbff0c"/><stop offset="0.489" stop-color="#ffff01"/><stop offset="0.759" stop-color="#ffe300"/><stop offset="1" stop-color="#ffcf00"/></linearGradient><linearGradient id="i35" gradientUnits="userSpaceOnUse" x1="1612" x2="1849" y1="0" y2="0"><stop offset="0" stop-color="#ccff0c"/><stop offset="0.477" stop-color="#ffff02"/><stop offset="1" stop-color="#ffce00"/></linearGradient><linearGradient id="i36" gradientUnits="userSpaceOnUse" x1="1612" x2="1849" y1="0" y2="0"><stop offset="0" stop-color="#cdff0d"/><stop offset="0.468" stop-color="#ffff02"/><stop offset="1" stop-color="#ffcd00"/></linearGradient><linearGradient id="i37" gradientUnits="userSpaceOnUse" x1="1612" x2="1849" y1="0" y2="0"><stop offset="0" stop-color="#cdff0d"/><stop offset="0.46" stop-color="#ffff03"/><stop offset="1" stop-color="#ffcc00"/></linearGradient><linearGradient id="i38" gradientUnits="userSpaceOnUse" x1="1612" x2="1849" y1="0" y2="0"><stop offset="0" stop-color="#ceff0e"/><stop offset="0.451" stop-color="#ffff03"/><stop offset="1" stop-color="#ffcb00"/></linearGradient><linearGradient id="i39" gradientUnits="userSpaceOnUse" x1="1612" x2="1849" y1="0" y2="0"><stop offset="0" stop-color="#cfff0e"/><stop offset="0.443" stop-color="#ffff04"/><stop offset="0.599" stop-color="#ffee00"/><stop offset="1" stop-color="#ffcb00"/></linearGradient><linearGradient id="i40" gradientUnits="userSpaceOnUse" x1="1612" x2="1849" y1="0" y2="0"><stop offset="0" stop-color="#d0ff0f"/><stop offset="0.435" stop-color="#ffff05"/><stop offset="0.616" stop-color="#ffec00"/><stop offset="1" stop-color="#ffca00"/></linearGradient><linearGradient id="i41" gradientUnits="userSpaceOnUse" x1="1612" x2="1849" y1="0" y2="0"><stop offset="0" stop-color="#d1ff0f"/><stop offset="0.422" stop-color="#ffff06"/><stop offset="0.637" stop-color="#ffe900"/><stop offset="1" stop-color="#ffc900"/></linearGradient><linearGradient id="i42" gradientUnits="userSpaceOnUse" x1="1612" x2="1849" y1="0" y2="0"><stop offset="0" stop-color="#d2ff0f"/><stop offset="0.414" stop-color="#ffff06"/><stop offset="0.654" stop-color="#ffe600"/><stop offset="1" stop-color="#ffc800"/></linearGradient><linearGradient id="i43" gradientUnits="userSpaceOnUse" x1="1612" x2="1849" y1="0" y2="0"><stop offset="0" stop-color="#d3ff10"/><stop offset="0.405" stop-color="#ffff07"/><stop offset="0.671" stop-color="#ffe400"/><stop offset="1" stop-color="#ffc700"/></linearGradient><linearGradient id="i44" gradientUnits="userSpaceOnUse" x1="1612" x2="1849" y1="0" y2="0"><stop offset="0" stop-color="#d3ff10"/><stop offset="0.397" stop-color="#ffff08"/><stop offset="0.692" stop-color="#ffe100"/><stop offset="1" stop-color="#ffc700"/></linearGradient><linearGradient id="i45" gradientUnits="userSpaceOnUse" x1="1612" x2="1849" y1="0" y2="0"><stop offset="0" stop-color="#d4ff11"/><stop offset="0.388" stop-color="#ffff08"/><stop offset="0.709" stop-color="#ffde00"/><stop offset="1" stop-color="#ffc600"/></linearGradient><linearGradient id="i46" gradientUnits="userSpaceOnUse" x1="1612" x2="1849" y1="0" y2="0"><stop offset="0" stop-color="#d5ff11"/><stop offset="0.38" stop-color="#ffff09"/><stop offset="0.73" stop-color="#ffdc00"/><stop offset="1" stop-color="#ffc500"/></linearGradient><linearGradient id="i47" gradientUnits="userSpaceOnUse" x1="1612" x2="1849" y1="0" y2="0"><stop offset="0" stop-color="#d6ff12"/><stop offset="0.371" stop-color="#ffff0a"/><stop offset="0.747" stop-color="#ffd900"/><stop offset="1" stop-color="#ffc400"/></linearGradient><linearGradient id="i48" gradientUnits="userSpaceOnUse" x1="1612" x2="1849" y1="0" y2="0"><stop offset="0" stop-color="#d7ff12"/><stop offset="0.359" stop-color="#ffff0a"/><stop offset="0.768" stop-color="#ffd700"/><stop offset="1" stop-color="#ffc400"/></linearGradient><linearGradient id="i49" gradientUnits="userSpaceOnUse" x1="1612" x2="1849" y1="0" y2="0"><stop offset="0" stop-color="#d8ff13"/><stop offset="0.35" stop-color="#ffff0b"/><stop offset="0.785" stop-color="#ffd400"/><stop offset="1" stop-color="#ffc300"/></linearGradient><linearGradient id="i50" gradientUnits="userSpaceOnUse" x1="1612" x2="1849" y1="0" y2="0"><stop offset="0" stop-color="#d9ff13"/><stop offset="0.342" stop-color="#ffff0c"/><stop offset="0.806" stop-color="#ffd200"/><stop offset="1" stop-color="#ffc200"/></linearGradient><linearGradient id="i51" gradientUnits="userSpaceOnUse" x1="1612" x2="1849" y1="0" y2="0"><stop offset="0" stop-color="#daff14"/><stop offset="0.333" stop-color="#ffff0c"/><stop offset="0.629" stop-color="#ffe005"/><stop offset="1" stop-color="#ffc100"/></linearGradient><linearGradient id="i52" gradientUnits="userSpaceOnUse" x1="1612" x2="1849" y1="0" y2="0"><stop offset="0" stop-color="#dbff14"/><stop offset="0.325" stop-color="#ffff0d"/><stop offset="0.662" stop-color="#ffdc04"/><stop offset="1" stop-color="#ffc000"/></linearGradient><linearGradient id="i53" gradientUnits="userSpaceOnUse" x1="1612" x2="1849" y1="0" y2="0"><stop offset="0" stop-color="#dcff15"/><stop offset="0.316" stop-color="#ffff0e"/><stop offset="0.62" stop-color="#ffdf06"/><stop offset="1" stop-color="#ffc000"/></linearGradient><linearGradient id="i54" gradientUnits="userSpaceOnUse" x1="1612" x2="1849" y1="0" y2="0"><stop offset="0" stop-color="#ddff15"/><stop offset="0.304" stop-color="#ffff0f"/><stop offset="0.654" stop-color="#ffdb05"/><stop offset="1" stop-color="#ffbf00"/></linearGradient><linearGradient id="i55" gradientUnits="userSpaceOnUse" x1="1612" x2="1849" y1="0" y2="0"><stop offset="0" stop-color="#ddff16"/><stop offset="0.295" stop-color="#ffff0f"/><stop offset="0.612" stop-color="#ffde07"/><stop offset="1" stop-color="#ffbe00"/></linearGradient><linearGradient id="i56" gradientUnits="userSpaceOnUse" x1="1612" x2="1849" y1="0" y2="0"><stop offset="0" stop-color="#deff16"/><stop offset="0.287" stop-color="#ffff10"/><stop offset="0.646" stop-color="#ffda06"/><stop offset="1" stop-color="#ffbd00"/></linearGradient><linearGradient id="i57" gradientUnits="userSpaceOnUse" x1="1612" x2="1849" y1="0" y2="0"><stop offset="0" stop-color="#dfff17"/><stop offset="0.278" stop-color="#ffff11"/><stop offset="0.624" stop-color="#ffdb07"/><stop offset="1" stop-color="#ffbd00"/></linearGradient><linearGradient id="i58" gradientUnits="userSpaceOnUse" x1="1612" x2="1849" y1="0" y2="0"><stop offset="0" stop-color="#e0ff17"/><stop offset="0.27" stop-color="#ffff11"/><stop offset="0.637" stop-color="#ffd907"/><stop offset="1" stop-color="#ffbc00"/></linearGradient><linearGradient id="i59" gradientUnits="userSpaceOnUse" x1="1612" x2="1849" y1="0" y2="0"><stop offset="0" stop-color="#e1ff18"/><stop offset="0.262" stop-color="#ffff12"/><stop offset="0.616" stop-color="#ffda08"/><stop offset="1" stop-color="#ffbb00"/></linearGradient><linearGradient id="i60" gradientUnits="userSpaceOnUse" x1="1612" x2="1849" y1="0" y2="0"><stop offset="0" stop-color="#e2ff18"/><stop offset="0.253" stop-color="#ffff13"/><stop offset="0.553" stop-color="#ffdf0a"/><stop offset="1" stop-color="#ffba00"/></linearGradient><linearGradient id="i61" gradientUnits="userSpaceOnUse" x1="1612" x2="1849" y1="0" y2="0"><stop offset="0" stop-color="#e3ff19"/><stop offset="0.241" stop-color="#ffff14"/><stop offset="0.608" stop-color="#ffd909"/><stop offset="1" stop-color="#ffba01"/></linearGradient><linearGradient id="i62" gradientUnits="userSpaceOnUse" x1="1612" x2="1849" y1="0" y2="0"><stop offset="0" stop-color="#e4ff19"/><stop offset="0.232" stop-color="#ffff14"/><stop offset="0.62" stop-color="#ffd709"/><stop offset="1" stop-color="#ffb901"/></linearGradient><linearGradient id="i63" gradientUnits="userSpaceOnUse" x1="1612" x2="1849" y1="0" y2="0"><stop offset="0" stop-color="#e5ff1a"/><stop offset="0.224" stop-color="#ffff15"/><stop offset="0.599" stop-color="#ffd80a"/><stop offset="1" stop-color="#ffb801"/></linearGradient><linearGradient id="i64" gradientUnits="userSpaceOnUse" x1="1612" x2="1849" y1="0" y2="0"><stop offset="0" stop-color="#e6ff1a"/><stop offset="0.215" stop-color="#ffff16"/><stop offset="0.557" stop-color="#ffdb0c"/><stop offset="1" stop-color="#ffb702"/></linearGradient><linearGradient id="i65" gradientUnits="userSpaceOnUse" x1="1612" x2="1849" y1="0" y2="0"><stop offset="0" stop-color="#e7ff1b"/><stop offset="0.207" stop-color="#ffff16"/><stop offset="0.591" stop-color="#ffd70b"/><stop offset="1" stop-color="#ffb702"/></linearGradient><linearGradient id="i66" gradientUnits="userSpaceOnUse" x1="1612" x2="1849" y1="0" y2="0"><stop offset="0" stop-color="#e8ff1b"/><stop offset="0.198" stop-color="#ffff17"/><stop offset="0.561" stop-color="#ffd90c"/><stop offset="1" stop-color="#ffb602"/></linearGradient><clipPath id="loc"><path d="M1296.9 669.2 L1294.3 669.0 L1291.8 667.5 L1289.4 665.8 L1286.8 664.1 L1284.3 662.4 L1281.2 660.4 L1278.8 658.8 L1276.2 656.9 L1273.2 654.7 L1270.0 652.1 L1266.5 648.9 L1264.5 646.9 L1262.4 644.6 L1260.0 642.0 L1257.6 639.0 L1254.9 635.5 L1252.2 631.6 L1249.2 627.3 L1246.1 622.5 L1242.8 617.0 L1239.2 610.7 L1235.5 603.9 L1231.6 596.2 L1227.4 587.7 L1222.9 578.2 L1218.2 567.9 L1213.3 556.6 L1208.4 544.2 L1203.5 530.7 L1198.6 516.1 L1193.7 500.5 L1188.8 484.0 L1184.0 466.4 L1179.2 447.7 L1174.6 428.4 L1170.4 408.8 L1166.6 389.0 L1163.1 368.7 L1160.0 348.3 L1157.6 328.6 L1155.8 309.3 L1154.5 290.2 L1153.8 271.7 L1154.0 254.2 L1154.9 237.6 L1156.6 221.6 L1159.1 206.7 L1162.4 193.3 L1166.5 181.3 L1171.5 170.7 L1177.2 161.4 L1183.4 153.9 L1190.1 148.1 L1197.5 144.1 L1205.2 141.5 L1213.1 139.9 L1221.2 139.6 L1229.6 140.7 L1238.1 142.6 L1246.6 144.8 L1255.1 147.4 L1263.7 150.6 L1272.3 154.1 L1280.6 157.8 L1288.8 161.4 L1296.9 165.2 L1304.8 169.2 L1312.7 173.3 L1320.5 177.5 L1328.3 181.8 L1335.9 186.2 L1343.6 190.7 L1351.2 195.3 L1358.8 200.1 L1366.4 204.9 L1374.0 209.9 L1381.5 214.9 L1389.0 219.9 L1396.5 225.1 L1404.0 230.3 L1411.5 235.6 L1419.0 240.9 L1426.5 246.2 L1434.0 251.6 L1441.5 257.1 L1449.1 262.6 L1456.6 268.1 L1464.1 273.6 L1471.6 279.1 L1479.1 284.7 L1486.5 290.3 L1494.0 295.9 L1501.5 301.5 L1508.9 307.0 L1516.4 312.6 L1523.7 318.2 L1531.1 323.7 L1538.4 329.2 L1545.7 334.7 L1552.9 340.2 L1560.1 345.6 L1567.2 351.0 L1574.2 356.4 L1581.2 361.7 L1588.1 366.9 L1594.9 372.1 L1601.7 377.2 L1608.3 382.2 L1614.9 387.2 L1621.3 392.0 L1627.7 396.8 L1633.9 401.5 L1639.9 406.1 L1645.8 410.6 L1651.6 415.0 L1657.1 419.2 L1662.5 423.2 L1667.6 427.1 L1672.6 430.9 L1677.4 434.5 L1682.1 438.1 L1686.6 441.5 L1691.0 444.8 L1695.2 448.0 L1699.2 451.0 L1702.9 453.8 L1706.5 456.5 L1710.0 459.1 L1713.2 461.6 L1716.3 463.9 L1719.2 466.1 L1722.0 468.2 L1724.6 470.2 L1727.0 472.1 L1729.4 473.9 L1731.6 475.5 L1733.6 477.1 L1737.4 479.9 L1740.9 482.5 L1743.9 484.8 L1746.7 487.0 L1749.3 488.9 L1751.6 490.7 L1753.7 492.3 L1756.4 494.3 L1758.7 496.0 L1761.1 497.8 L1763.2 499.5 L1765.4 501.1 L1767.4 502.7 Z"/></clipPath></defs><g clip-path="url(#loc)" shape-rendering="crispEdges"><rect x="1211" y="138" width="15" height="2.6" fill="url(#g0)"/><rect x="1202" y="140" width="35" height="2.6" fill="url(#g1)"/><rect x="1196" y="142" width="49" height="2.6" fill="url(#g2)"/><rect x="1193" y="144" width="59" height="2.6" fill="url(#g3)"/><rect x="1189" y="146" width="69" height="2.6" fill="url(#g4)"/><rect x="1186" y="148" width="78" height="2.6" fill="url(#g5)"/><rect x="1184" y="150" width="85" height="2.6" fill="url(#g6)"/><rect x="1182" y="152" width="91" height="2.6" fill="url(#g7)"/><rect x="1180" y="154" width="98" height="2.6" fill="url(#g8)"/><rect x="1179" y="156" width="104" height="2.6" fill="url(#g9)"/><rect x="1177" y="158" width="110" height="2.6" fill="url(#g10)"/><rect x="1175" y="160" width="117" height="2.6" fill="url(#g11)"/><rect x="1174" y="162" width="122" height="2.6" fill="url(#g12)"/><rect x="1173" y="164" width="127" height="2.6" fill="url(#g13)"/><rect x="1172" y="166" width="132" height="2.6" fill="url(#g14)"/><rect x="1170" y="168" width="138" height="2.6" fill="url(#g15)"/><rect x="1169" y="170" width="143" height="2.6" fill="url(#g16)"/><rect x="1168" y="172" width="148" height="2.6" fill="url(#g17)"/><rect x="1168" y="174" width="151" height="2.6" fill="url(#g18)"/><rect x="1167" y="176" width="156" height="2.6" fill="url(#g19)"/><rect x="1166" y="178" width="161" height="2.6" fill="url(#g20)"/><rect x="1165" y="180" width="165" height="2.6" fill="url(#g21)"/><rect x="1164" y="182" width="170" height="2.6" fill="url(#g22)"/><rect x="1163" y="184" width="174" height="2.6" fill="url(#g23)"/><rect x="1163" y="186" width="177" height="2.6" fill="url(#g24)"/><rect x="1162" y="188" width="182" height="2.6" fill="url(#g25)"/><rect x="1161" y="190" width="186" height="2.6" fill="url(#g26)"/><rect x="1161" y="192" width="189" height="2.6" fill="url(#g27)"/><rect x="1160" y="194" width="194" height="2.6" fill="url(#g28)"/><rect x="1160" y="196" width="197" height="2.6" fill="url(#g29)"/><rect x="1159" y="198" width="201" height="2.6" fill="url(#g30)"/><rect x="1159" y="200" width="204" height="2.6" fill="url(#g31)"/><rect x="1158" y="202" width="208" height="2.6" fill="url(#g32)"/><rect x="1158" y="204" width="212" height="2.6" fill="url(#g33)"/><rect x="1157" y="206" width="216" height="2.6" fill="url(#g34)"/><rect x="1157" y="208" width="219" height="2.6" fill="url(#g35)"/><rect x="1157" y="210" width="222" height="2.6" fill="url(#g36)"/><rect x="1156" y="212" width="226" height="2.6" fill="url(#g37)"/><rect x="1156" y="214" width="229" height="2.6" fill="url(#g38)"/><rect x="1156" y="216" width="232" height="2.6" fill="url(#g39)"/><rect x="1155" y="218" width="236" height="2.6" fill="url(#g40)"/><rect x="1155" y="220" width="239" height="2.6" fill="url(#g41)"/><rect x="1155" y="222" width="241" height="2.6" fill="url(#g42)"/><rect x="1155" y="224" width="244" height="2.6" fill="url(#g43)"/><rect x="1154" y="226" width="248" height="2.6" fill="url(#g44)"/><rect x="1154" y="228" width="251" height="2.6" fill="url(#g45)"/><rect x="1154" y="230" width="254" height="2.6" fill="url(#g46)"/><rect x="1154" y="232" width="257" height="2.6" fill="url(#g47)"/><rect x="1154" y="234" width="260" height="2.6" fill="url(#g48)"/><rect x="1153" y="236" width="263" height="2.6" fill="url(#g49)"/><rect x="1153" y="238" width="266" height="2.6" fill="url(#g50)"/><rect x="1153" y="240" width="269" height="2.6" fill="url(#g51)"/><rect x="1153" y="242" width="272" height="2.6" fill="url(#g52)"/><rect x="1153" y="244" width="275" height="2.6" fill="url(#g53)"/><rect x="1153" y="246" width="277" height="2.6" fill="url(#g54)"/><rect x="1153" y="248" width="280" height="2.6" fill="url(#g55)"/><rect x="1153" y="250" width="283" height="2.6" fill="url(#g56)"/><rect x="1152" y="252" width="287" height="2.6" fill="url(#g57)"/><rect x="1152" y="254" width="290" height="2.6" fill="url(#g58)"/><rect x="1152" y="256" width="292" height="2.6" fill="url(#g59)"/><rect x="1152" y="258" width="295" height="2.6" fill="url(#g60)"/><rect x="1152" y="260" width="298" height="2.6" fill="url(#g61)"/><rect x="1152" y="262" width="301" height="2.6" fill="url(#g62)"/><rect x="1152" y="264" width="303" height="2.6" fill="url(#g63)"/><rect x="1152" y="266" width="306" height="2.6" fill="url(#g64)"/><rect x="1152" y="268" width="309" height="2.6" fill="url(#g65)"/><rect x="1152" y="270" width="311" height="2.6" fill="url(#g66)"/><rect x="1152" y="272" width="314" height="2.6" fill="url(#g67)"/><rect x="1152" y="274" width="317" height="2.6" fill="url(#g68)"/><rect x="1152" y="276" width="320" height="2.6" fill="url(#g69)"/><rect x="1153" y="278" width="321" height="2.6" fill="url(#g70)"/><rect x="1153" y="280" width="324" height="2.6" fill="url(#g71)"/><rect x="1153" y="282" width="327" height="2.6" fill="url(#g72)"/><rect x="1153" y="284" width="329" height="2.6" fill="url(#g73)"/><rect x="1153" y="286" width="332" height="2.6" fill="url(#g74)"/><rect x="1153" y="288" width="335" height="2.6" fill="url(#g75)"/><rect x="1153" y="290" width="337" height="2.6" fill="url(#g76)"/><rect x="1153" y="292" width="340" height="2.6" fill="url(#g77)"/><rect x="1153" y="294" width="343" height="2.6" fill="url(#g78)"/><rect x="1153" y="296" width="345" height="2.6" fill="url(#g79)"/><rect x="1153" y="298" width="348" height="2.6" fill="url(#g80)"/><rect x="1154" y="300" width="350" height="2.6" fill="url(#g81)"/><rect x="1154" y="302" width="352" height="2.6" fill="url(#g82)"/><rect x="1154" y="304" width="355" height="2.6" fill="url(#g83)"/><rect x="1154" y="306" width="358" height="2.6" fill="url(#g84)"/><rect x="1154" y="308" width="360" height="2.6" fill="url(#g85)"/><rect x="1154" y="310" width="363" height="2.6" fill="url(#g86)"/><rect x="1155" y="312" width="365" height="2.6" fill="url(#g87)"/><rect x="1155" y="314" width="367" height="2.6" fill="url(#g88)"/><rect x="1155" y="316" width="370" height="2.6" fill="url(#g89)"/><rect x="1155" y="318" width="373" height="2.6" fill="url(#g90)"/><rect x="1155" y="320" width="375" height="2.6" fill="url(#g91)"/><rect x="1155" y="322" width="378" height="2.6" fill="url(#g92)"/><rect x="1156" y="324" width="380" height="2.6" fill="url(#g93)"/><rect x="1156" y="326" width="382" height="2.6" fill="url(#g94)"/><rect x="1156" y="328" width="385" height="2.6" fill="url(#g95)"/><rect x="1156" y="330" width="388" height="2.6" fill="url(#g96)"/><rect x="1157" y="332" width="389" height="2.6" fill="url(#g97)"/><rect x="1157" y="334" width="392" height="2.6" fill="url(#g98)"/><rect x="1157" y="336" width="394" height="2.6" fill="url(#g99)"/><rect x="1157" y="338" width="397" height="2.6" fill="url(#g100)"/><rect x="1157" y="340" width="400" height="2.6" fill="url(#g101)"/><rect x="1158" y="342" width="401" height="2.6" fill="url(#g102)"/><rect x="1158" y="344" width="404" height="2.6" fill="url(#g103)"/><rect x="1158" y="346" width="407" height="2.6" fill="url(#g104)"/><rect x="1158" y="348" width="409" height="2.6" fill="url(#g105)"/><rect x="1159" y="350" width="411" height="2.6" fill="url(#g106)"/><rect x="1159" y="352" width="414" height="2.6" fill="url(#g107)"/><rect x="1159" y="354" width="416" height="2.6" fill="url(#g108)"/><rect x="1160" y="356" width="418" height="2.6" fill="url(#g109)"/><rect x="1160" y="358" width="421" height="2.6" fill="url(#g110)"/><rect x="1160" y="360" width="423" height="2.6" fill="url(#g111)"/><rect x="1161" y="362" width="425" height="2.6" fill="url(#g112)"/><rect x="1161" y="364" width="427" height="2.6" fill="url(#g113)"/><rect x="1161" y="366" width="430" height="2.6" fill="url(#g114)"/><rect x="1161" y="368" width="433" height="2.6" fill="url(#g115)"/><rect x="1162" y="370" width="434" height="2.6" fill="url(#g116)"/><rect x="1162" y="372" width="437" height="2.6" fill="url(#g117)"/><rect x="1163" y="374" width="439" height="2.6" fill="url(#g118)"/><rect x="1163" y="376" width="441" height="2.6" fill="url(#g119)"/><rect x="1163" y="378" width="444" height="2.6" fill="url(#g120)"/><rect x="1164" y="380" width="446" height="2.6" fill="url(#g121)"/><rect x="1164" y="382" width="448" height="2.6" fill="url(#g122)"/><rect x="1164" y="384" width="451" height="2.6" fill="url(#g123)"/><rect x="1165" y="386" width="452" height="2.6" fill="url(#g124)"/><rect x="1165" y="388" width="455" height="2.6" fill="url(#g125)"/><rect x="1165" y="390" width="458" height="2.6" fill="url(#g126)"/><rect x="1166" y="392" width="459" height="2.6" fill="url(#g127)"/><rect x="1166" y="394" width="462" height="2.6" fill="url(#g128)"/><rect x="1166" y="396" width="465" height="2.6" fill="url(#g129)"/><rect x="1167" y="398" width="466" height="2.6" fill="url(#g130)"/><rect x="1167" y="400" width="469" height="2.6" fill="url(#g131)"/><rect x="1168" y="402" width="471" height="2.6" fill="url(#g132)"/><rect x="1168" y="404" width="473" height="2.6" fill="url(#g133)"/><rect x="1168" y="406" width="476" height="2.6" fill="url(#g134)"/><rect x="1169" y="408" width="478" height="2.6" fill="url(#g135)"/><rect x="1169" y="410" width="480" height="2.6" fill="url(#g136)"/><rect x="1170" y="412" width="482" height="2.6" fill="url(#g137)"/><rect x="1170" y="414" width="484" height="2.6" fill="url(#g138)"/><rect x="1170" y="416" width="487" height="2.6" fill="url(#g139)"/><rect x="1171" y="418" width="489" height="2.6" fill="url(#g140)"/><rect x="1171" y="420" width="491" height="2.6" fill="url(#g141)"/><rect x="1172" y="422" width="493" height="2.6" fill="url(#g142)"/><rect x="1172" y="424" width="496" height="2.6" fill="url(#g143)"/><rect x="1173" y="426" width="497" height="2.6" fill="url(#g144)"/><rect x="1173" y="428" width="500" height="2.6" fill="url(#g145)"/><rect x="1174" y="430" width="502" height="2.6" fill="url(#g146)"/><rect x="1174" y="432" width="504" height="2.6" fill="url(#g147)"/><rect x="1174" y="434" width="507" height="2.6" fill="url(#g148)"/><rect x="1175" y="436" width="508" height="2.6" fill="url(#g149)"/><rect x="1175" y="438" width="511" height="2.6" fill="url(#g150)"/><rect x="1176" y="440" width="513" height="2.6" fill="url(#g151)"/><rect x="1176" y="442" width="515" height="2.6" fill="url(#g152)"/><rect x="1177" y="444" width="517" height="2.6" fill="url(#g153)"/><rect x="1177" y="446" width="520" height="2.6" fill="url(#g154)"/><rect x="1178" y="448" width="521" height="2.6" fill="url(#g155)"/><rect x="1178" y="450" width="524" height="2.6" fill="url(#g156)"/><rect x="1179" y="452" width="526" height="2.6" fill="url(#g157)"/><rect x="1179" y="454" width="528" height="2.6" fill="url(#g158)"/><rect x="1180" y="456" width="530" height="2.6" fill="url(#g159)"/><rect x="1180" y="458" width="533" height="2.6" fill="url(#g160)"/><rect x="1181" y="460" width="534" height="2.6" fill="url(#g161)"/><rect x="1181" y="462" width="537" height="2.6" fill="url(#g162)"/><rect x="1182" y="464" width="539" height="2.6" fill="url(#g163)"/><rect x="1182" y="466" width="541" height="2.6" fill="url(#g164)"/><rect x="1183" y="468" width="543" height="2.6" fill="url(#g165)"/><rect x="1184" y="470" width="544" height="2.6" fill="url(#g166)"/><rect x="1184" y="472" width="547" height="2.6" fill="url(#g167)"/><rect x="1185" y="474" width="549" height="2.6" fill="url(#g168)"/><rect x="1185" y="476" width="551" height="2.6" fill="url(#g169)"/><rect x="1186" y="478" width="553" height="2.6" fill="url(#g170)"/><rect x="1186" y="480" width="556" height="2.6" fill="url(#g171)"/><rect x="1187" y="482" width="557" height="2.6" fill="url(#g172)"/><rect x="1187" y="484" width="560" height="2.6" fill="url(#g173)"/><rect x="1188" y="486" width="562" height="2.6" fill="url(#g174)"/><rect x="1189" y="488" width="563" height="2.6" fill="url(#g175)"/><rect x="1189" y="490" width="566" height="2.6" fill="url(#g176)"/><rect x="1190" y="492" width="567" height="2.6" fill="url(#g177)"/><rect x="1190" y="494" width="570" height="2.6" fill="url(#g178)"/><rect x="1191" y="496" width="572" height="2.6" fill="url(#g179)"/><rect x="1191" y="498" width="574" height="2.6" fill="url(#g180)"/><rect x="1192" y="500" width="576" height="2.6" fill="url(#g181)"/><rect x="1193" y="502" width="575" height="2.6" fill="url(#g182)"/><rect x="1193" y="504" width="572" height="2.6" fill="url(#g183)"/><rect x="1194" y="506" width="566" height="2.6" fill="url(#g184)"/><rect x="1195" y="508" width="559" height="2.6" fill="url(#g185)"/><rect x="1195" y="510" width="553" height="2.6" fill="url(#g186)"/><rect x="1196" y="512" width="547" height="2.6" fill="url(#g187)"/><rect x="1196" y="514" width="541" height="2.6" fill="url(#g188)"/><rect x="1197" y="516" width="534" height="2.6" fill="url(#g189)"/><rect x="1198" y="518" width="528" height="2.6" fill="url(#g190)"/><rect x="1198" y="520" width="522" height="2.6" fill="url(#g191)"/><rect x="1199" y="522" width="515" height="2.6" fill="url(#g192)"/><rect x="1200" y="524" width="509" height="2.6" fill="url(#g193)"/><rect x="1200" y="526" width="503" height="2.6" fill="url(#g194)"/><rect x="1201" y="528" width="496" height="2.6" fill="url(#g195)"/><rect x="1202" y="530" width="490" height="2.6" fill="url(#g196)"/><rect x="1202" y="532" width="484" height="2.6" fill="url(#g197)"/><rect x="1203" y="534" width="477" height="2.6" fill="url(#g198)"/><rect x="1204" y="536" width="471" height="2.6" fill="url(#g199)"/><rect x="1205" y="538" width="464" height="2.6" fill="url(#g200)"/><rect x="1205" y="540" width="458" height="2.6" fill="url(#g201)"/><rect x="1206" y="542" width="452" height="2.6" fill="url(#g202)"/><rect x="1207" y="544" width="445" height="2.6" fill="url(#g203)"/><rect x="1208" y="546" width="439" height="2.6" fill="url(#g204)"/><rect x="1208" y="548" width="433" height="2.6" fill="url(#g205)"/><rect x="1209" y="550" width="426" height="2.6" fill="url(#g206)"/><rect x="1210" y="552" width="420" height="2.6" fill="url(#g207)"/><rect x="1211" y="554" width="413" height="2.6" fill="url(#g208)"/><rect x="1212" y="556" width="406" height="2.6" fill="url(#g209)"/><rect x="1212" y="558" width="401" height="2.6" fill="url(#g210)"/><rect x="1213" y="560" width="394" height="2.6" fill="url(#g211)"/><rect x="1214" y="562" width="387" height="2.6" fill="url(#g212)"/><rect x="1215" y="564" width="381" height="2.6" fill="url(#g213)"/><rect x="1216" y="566" width="374" height="2.6" fill="url(#g214)"/><rect x="1217" y="568" width="367" height="2.6" fill="url(#g215)"/><rect x="1218" y="570" width="361" height="2.6" fill="url(#g216)"/><rect x="1219" y="572" width="354" height="2.6" fill="url(#g217)"/><rect x="1219" y="574" width="348" height="2.6" fill="url(#g218)"/><rect x="1220" y="576" width="342" height="2.6" fill="url(#g219)"/><rect x="1221" y="578" width="335" height="2.6" fill="url(#g220)"/><rect x="1222" y="580" width="328" height="2.6" fill="url(#g221)"/><rect x="1223" y="582" width="322" height="2.6" fill="url(#g222)"/><rect x="1224" y="584" width="315" height="2.6" fill="url(#g223)"/><rect x="1225" y="586" width="309" height="2.6" fill="url(#g224)"/><rect x="1226" y="588" width="302" height="2.6" fill="url(#g225)"/><rect x="1227" y="590" width="295" height="2.6" fill="url(#g226)"/><rect x="1228" y="592" width="289" height="2.6" fill="url(#g227)"/><rect x="1229" y="594" width="282" height="2.6" fill="url(#g228)"/><rect x="1230" y="596" width="275" height="2.6" fill="url(#g229)"/><rect x="1231" y="598" width="269" height="2.6" fill="url(#g230)"/><rect x="1232" y="600" width="262" height="2.6" fill="url(#g231)"/><rect x="1233" y="602" width="255" height="2.6" fill="url(#g232)"/><rect x="1234" y="604" width="249" height="2.6" fill="url(#g233)"/><rect x="1235" y="606" width="242" height="2.6" fill="url(#g234)"/><rect x="1236" y="608" width="235" height="2.6" fill="url(#g235)"/><rect x="1237" y="610" width="229" height="2.6" fill="url(#g236)"/><rect x="1238" y="612" width="222" height="2.6" fill="url(#g237)"/><rect x="1240" y="614" width="214" height="2.6" fill="url(#g238)"/><rect x="1241" y="616" width="208" height="2.6" fill="url(#g239)"/><rect x="1242" y="618" width="201" height="2.6" fill="url(#g240)"/><rect x="1243" y="620" width="194" height="2.6" fill="url(#g241)"/><rect x="1244" y="622" width="188" height="2.6" fill="url(#g242)"/><rect x="1246" y="624" width="180" height="2.6" fill="url(#g243)"/><rect x="1247" y="626" width="174" height="2.6" fill="url(#g244)"/><rect x="1248" y="628" width="167" height="2.6" fill="url(#g245)"/><rect x="1250" y="630" width="159" height="2.6" fill="url(#g246)"/><rect x="1251" y="632" width="153" height="2.6" fill="url(#g247)"/><rect x="1252" y="634" width="146" height="2.6" fill="url(#g248)"/><rect x="1254" y="636" width="138" height="2.6" fill="url(#g249)"/><rect x="1255" y="638" width="132" height="2.6" fill="url(#g250)"/><rect x="1257" y="640" width="124" height="2.6" fill="url(#g251)"/><rect x="1259" y="642" width="116" height="2.6" fill="url(#g252)"/><rect x="1260" y="644" width="110" height="2.6" fill="url(#g253)"/><rect x="1262" y="646" width="102" height="2.6" fill="url(#g254)"/><rect x="1264" y="648" width="94" height="2.6" fill="url(#g255)"/><rect x="1266" y="650" width="87" height="2.6" fill="url(#g256)"/><rect x="1268" y="652" width="79" height="2.6" fill="url(#g257)"/><rect x="1271" y="654" width="70" height="2.6" fill="url(#g258)"/><rect x="1273" y="656" width="63" height="2.6" fill="url(#g259)"/><rect x="1276" y="658" width="54" height="2.6" fill="url(#g260)"/><rect x="1279" y="660" width="45" height="2.6" fill="url(#g261)"/><rect x="1282" y="662" width="37" height="2.6" fill="url(#g262)"/><rect x="1285" y="664" width="28" height="2.6" fill="url(#g263)"/><rect x="1288" y="666" width="20" height="2.6" fill="url(#g264)"/><rect x="1291" y="668" width="11" height="2.6" fill="url(#g265)"/></g><path fill-rule="evenodd" fill="#000" fill-opacity=".38" d="M1296.9 669.2 L1294.3 669.0 L1291.8 667.5 L1289.4 665.8 L1286.8 664.1 L1284.3 662.4 L1281.2 660.4 L1278.8 658.8 L1276.2 656.9 L1273.2 654.7 L1270.0 652.1 L1266.5 648.9 L1264.5 646.9 L1262.4 644.6 L1260.0 642.0 L1257.6 639.0 L1254.9 635.5 L1252.2 631.6 L1249.2 627.3 L1246.1 622.5 L1242.8 617.0 L1239.2 610.7 L1235.5 603.9 L1231.6 596.2 L1227.4 587.7 L1222.9 578.2 L1218.2 567.9 L1213.3 556.6 L1208.4 544.2 L1203.5 530.7 L1198.6 516.1 L1193.7 500.5 L1188.8 484.0 L1184.0 466.4 L1179.2 447.7 L1174.6 428.4 L1170.4 408.8 L1166.6 389.0 L1163.1 368.7 L1160.0 348.3 L1157.6 328.6 L1155.8 309.3 L1154.5 290.2 L1153.8 271.7 L1154.0 254.2 L1154.9 237.6 L1156.6 221.6 L1159.1 206.7 L1162.4 193.3 L1166.5 181.3 L1171.5 170.7 L1177.2 161.4 L1183.4 153.9 L1190.1 148.1 L1197.5 144.1 L1205.2 141.5 L1213.1 139.9 L1221.2 139.6 L1229.6 140.7 L1238.1 142.6 L1246.6 144.8 L1255.1 147.4 L1263.7 150.6 L1272.3 154.1 L1280.6 157.8 L1288.8 161.4 L1296.9 165.2 L1304.8 169.2 L1312.7 173.3 L1320.5 177.5 L1328.3 181.8 L1335.9 186.2 L1343.6 190.7 L1351.2 195.3 L1358.8 200.1 L1366.4 204.9 L1374.0 209.9 L1381.5 214.9 L1389.0 219.9 L1396.5 225.1 L1404.0 230.3 L1411.5 235.6 L1419.0 240.9 L1426.5 246.2 L1434.0 251.6 L1441.5 257.1 L1449.1 262.6 L1456.6 268.1 L1464.1 273.6 L1471.6 279.1 L1479.1 284.7 L1486.5 290.3 L1494.0 295.9 L1501.5 301.5 L1508.9 307.0 L1516.4 312.6 L1523.7 318.2 L1531.1 323.7 L1538.4 329.2 L1545.7 334.7 L1552.9 340.2 L1560.1 345.6 L1567.2 351.0 L1574.2 356.4 L1581.2 361.7 L1588.1 366.9 L1594.9 372.1 L1601.7 377.2 L1608.3 382.2 L1614.9 387.2 L1621.3 392.0 L1627.7 396.8 L1633.9 401.5 L1639.9 406.1 L1645.8 410.6 L1651.6 415.0 L1657.1 419.2 L1662.5 423.2 L1667.6 427.1 L1672.6 430.9 L1677.4 434.5 L1682.1 438.1 L1686.6 441.5 L1691.0 444.8 L1695.2 448.0 L1699.2 451.0 L1702.9 453.8 L1706.5 456.5 L1710.0 459.1 L1713.2 461.6 L1716.3 463.9 L1719.2 466.1 L1722.0 468.2 L1724.6 470.2 L1727.0 472.1 L1729.4 473.9 L1731.6 475.5 L1733.6 477.1 L1737.4 479.9 L1740.9 482.5 L1743.9 484.8 L1746.7 487.0 L1749.3 488.9 L1751.6 490.7 L1753.7 492.3 L1756.4 494.3 L1758.7 496.0 L1761.1 497.8 L1763.2 499.5 L1765.4 501.1 L1767.4 502.7 Z M1688.3 461.7 L1402.7 289.2 L1276.7 634.1 Z"/><path d="M1296.9 669.2 L1294.3 669.0 L1291.8 667.5 L1289.4 665.8 L1286.8 664.1 L1284.3 662.4 L1281.2 660.4 L1278.8 658.8 L1276.2 656.9 L1273.2 654.7 L1270.0 652.1 L1266.5 648.9 L1264.5 646.9 L1262.4 644.6 L1260.0 642.0 L1257.6 639.0 L1254.9 635.5 L1252.2 631.6 L1249.2 627.3 L1246.1 622.5 L1242.8 617.0 L1239.2 610.7 L1235.5 603.9 L1231.6 596.2 L1227.4 587.7 L1222.9 578.2 L1218.2 567.9 L1213.3 556.6 L1208.4 544.2 L1203.5 530.7 L1198.6 516.1 L1193.7 500.5 L1188.8 484.0 L1184.0 466.4 L1179.2 447.7 L1174.6 428.4 L1170.4 408.8 L1166.6 389.0 L1163.1 368.7 L1160.0 348.3 L1157.6 328.6 L1155.8 309.3 L1154.5 290.2 L1153.8 271.7 L1154.0 254.2 L1154.9 237.6 L1156.6 221.6 L1159.1 206.7 L1162.4 193.3 L1166.5 181.3 L1171.5 170.7 L1177.2 161.4 L1183.4 153.9 L1190.1 148.1 L1197.5 144.1 L1205.2 141.5 L1213.1 139.9 L1221.2 139.6 L1229.6 140.7 L1238.1 142.6 L1246.6 144.8 L1255.1 147.4 L1263.7 150.6 L1272.3 154.1 L1280.6 157.8 L1288.8 161.4 L1296.9 165.2 L1304.8 169.2 L1312.7 173.3 L1320.5 177.5 L1328.3 181.8 L1335.9 186.2 L1343.6 190.7 L1351.2 195.3 L1358.8 200.1 L1366.4 204.9 L1374.0 209.9 L1381.5 214.9 L1389.0 219.9 L1396.5 225.1 L1404.0 230.3 L1411.5 235.6 L1419.0 240.9 L1426.5 246.2 L1434.0 251.6 L1441.5 257.1 L1449.1 262.6 L1456.6 268.1 L1464.1 273.6 L1471.6 279.1 L1479.1 284.7 L1486.5 290.3 L1494.0 295.9 L1501.5 301.5 L1508.9 307.0 L1516.4 312.6 L1523.7 318.2 L1531.1 323.7 L1538.4 329.2 L1545.7 334.7 L1552.9 340.2 L1560.1 345.6 L1567.2 351.0 L1574.2 356.4 L1581.2 361.7 L1588.1 366.9 L1594.9 372.1 L1601.7 377.2 L1608.3 382.2 L1614.9 387.2 L1621.3 392.0 L1627.7 396.8 L1633.9 401.5 L1639.9 406.1 L1645.8 410.6 L1651.6 415.0 L1657.1 419.2 L1662.5 423.2 L1667.6 427.1 L1672.6 430.9 L1677.4 434.5 L1682.1 438.1 L1686.6 441.5 L1691.0 444.8 L1695.2 448.0 L1699.2 451.0 L1702.9 453.8 L1706.5 456.5 L1710.0 459.1 L1713.2 461.6 L1716.3 463.9 L1719.2 466.1 L1722.0 468.2 L1724.6 470.2 L1727.0 472.1 L1729.4 473.9 L1731.6 475.5 L1733.6 477.1 L1737.4 479.9 L1740.9 482.5 L1743.9 484.8 L1746.7 487.0 L1749.3 488.9 L1751.6 490.7 L1753.7 492.3 L1756.4 494.3 L1758.7 496.0 L1761.1 497.8 L1763.2 499.5 L1765.4 501.1 L1767.4 502.7 Z" fill="none" stroke="#252525" stroke-width="1" opacity=".5"/><rect x="1151.6" y="136.8" width="705" height="535.2" fill="none" stroke="#9a9a9a" stroke-width="1.7"/><rect x="1150.5" y="672" width="1.5" height="6.5" fill="#b4b4b4"/><rect x="1144.5" y="671.5" width="6.5" height="1.5" fill="#b4b4b4"/><rect x="1234.5" y="672" width="1.5" height="6.5" fill="#b4b4b4"/><rect x="1144.5" y="607.9" width="6.5" height="1.5" fill="#b4b4b4"/><rect x="1318.5" y="672" width="1.5" height="6.5" fill="#b4b4b4"/><rect x="1144.5" y="544.3" width="6.5" height="1.5" fill="#b4b4b4"/><rect x="1402.5" y="672" width="1.5" height="6.5" fill="#b4b4b4"/><rect x="1144.5" y="480.7" width="6.5" height="1.5" fill="#b4b4b4"/><rect x="1486.5" y="672" width="1.5" height="6.5" fill="#b4b4b4"/><rect x="1144.5" y="417.1" width="6.5" height="1.5" fill="#b4b4b4"/><rect x="1570.5" y="672" width="1.5" height="6.5" fill="#b4b4b4"/><rect x="1144.5" y="353.5" width="6.5" height="1.5" fill="#b4b4b4"/><rect x="1654.5" y="672" width="1.5" height="6.5" fill="#b4b4b4"/><rect x="1144.5" y="289.9" width="6.5" height="1.5" fill="#b4b4b4"/><rect x="1738.5" y="672" width="1.5" height="6.5" fill="#b4b4b4"/><rect x="1144.5" y="226.3" width="6.5" height="1.5" fill="#b4b4b4"/><rect x="1822.5" y="672" width="1.5" height="6.5" fill="#b4b4b4"/><rect x="1144.5" y="162.7" width="6.5" height="1.5" fill="#b4b4b4"/><g shape-rendering="crispEdges"><rect x="1612" y="145" width="237" height="3.6" fill="url(#i0)"/><rect x="1612" y="148" width="237" height="3.6" fill="url(#i1)"/><rect x="1612" y="151" width="237" height="3.6" fill="url(#i2)"/><rect x="1612" y="154" width="237" height="3.6" fill="url(#i3)"/><rect x="1612" y="157" width="237" height="3.6" fill="url(#i4)"/><rect x="1612" y="160" width="237" height="3.6" fill="url(#i5)"/><rect x="1612" y="163" width="237" height="3.6" fill="url(#i6)"/><rect x="1612" y="166" width="237" height="3.6" fill="url(#i7)"/><rect x="1612" y="169" width="237" height="3.6" fill="url(#i8)"/><rect x="1612" y="172" width="237" height="3.6" fill="url(#i9)"/><rect x="1612" y="175" width="237" height="3.6" fill="url(#i10)"/><rect x="1612" y="178" width="237" height="3.6" fill="url(#i11)"/><rect x="1612" y="181" width="237" height="3.6" fill="url(#i12)"/><rect x="1612" y="184" width="237" height="3.6" fill="url(#i13)"/><rect x="1612" y="187" width="237" height="3.6" fill="url(#i14)"/><rect x="1612" y="190" width="237" height="3.6" fill="url(#i15)"/><rect x="1612" y="193" width="237" height="3.6" fill="url(#i16)"/><rect x="1612" y="196" width="237" height="3.6" fill="url(#i17)"/><rect x="1612" y="199" width="237" height="3.6" fill="url(#i18)"/><rect x="1612" y="202" width="237" height="3.6" fill="url(#i19)"/><rect x="1612" y="205" width="237" height="3.6" fill="url(#i20)"/><rect x="1612" y="208" width="237" height="3.6" fill="url(#i21)"/><rect x="1612" y="211" width="237" height="3.6" fill="url(#i22)"/><rect x="1612" y="214" width="237" height="3.6" fill="url(#i23)"/><rect x="1612" y="217" width="237" height="3.6" fill="url(#i24)"/><rect x="1612" y="220" width="237" height="3.6" fill="url(#i25)"/><rect x="1612" y="223" width="237" height="3.6" fill="url(#i26)"/><rect x="1612" y="226" width="237" height="3.6" fill="url(#i27)"/><rect x="1612" y="229" width="237" height="3.6" fill="url(#i28)"/><rect x="1612" y="232" width="237" height="3.6" fill="url(#i29)"/><rect x="1612" y="235" width="237" height="3.6" fill="url(#i30)"/><rect x="1612" y="238" width="237" height="3.6" fill="url(#i31)"/><rect x="1612" y="241" width="237" height="3.6" fill="url(#i32)"/><rect x="1612" y="244" width="237" height="3.6" fill="url(#i33)"/><rect x="1612" y="247" width="237" height="3.6" fill="url(#i34)"/><rect x="1612" y="250" width="237" height="3.6" fill="url(#i35)"/><rect x="1612" y="253" width="237" height="3.6" fill="url(#i36)"/><rect x="1612" y="256" width="237" height="3.6" fill="url(#i37)"/><rect x="1612" y="259" width="237" height="3.6" fill="url(#i38)"/><rect x="1612" y="262" width="237" height="3.6" fill="url(#i39)"/><rect x="1612" y="265" width="237" height="3.6" fill="url(#i40)"/><rect x="1612" y="268" width="237" height="3.6" fill="url(#i41)"/><rect x="1612" y="271" width="237" height="3.6" fill="url(#i42)"/><rect x="1612" y="274" width="237" height="3.6" fill="url(#i43)"/><rect x="1612" y="277" width="237" height="3.6" fill="url(#i44)"/><rect x="1612" y="280" width="237" height="3.6" fill="url(#i45)"/><rect x="1612" y="283" width="237" height="3.6" fill="url(#i46)"/><rect x="1612" y="286" width="237" height="3.6" fill="url(#i47)"/><rect x="1612" y="289" width="237" height="3.6" fill="url(#i48)"/><rect x="1612" y="292" width="237" height="3.6" fill="url(#i49)"/><rect x="1612" y="295" width="237" height="3.6" fill="url(#i50)"/><rect x="1612" y="298" width="237" height="3.6" fill="url(#i51)"/><rect x="1612" y="301" width="237" height="3.6" fill="url(#i52)"/><rect x="1612" y="304" width="237" height="3.6" fill="url(#i53)"/><rect x="1612" y="307" width="237" height="3.6" fill="url(#i54)"/><rect x="1612" y="310" width="237" height="3.6" fill="url(#i55)"/><rect x="1612" y="313" width="237" height="3.6" fill="url(#i56)"/><rect x="1612" y="316" width="237" height="3.6" fill="url(#i57)"/><rect x="1612" y="319" width="237" height="3.6" fill="url(#i58)"/><rect x="1612" y="322" width="237" height="3.6" fill="url(#i59)"/><rect x="1612" y="325" width="237" height="3.6" fill="url(#i60)"/><rect x="1612" y="328" width="237" height="3.6" fill="url(#i61)"/><rect x="1612" y="331" width="237" height="3.6" fill="url(#i62)"/><rect x="1612" y="334" width="237" height="3.6" fill="url(#i63)"/><rect x="1612" y="337" width="237" height="3.6" fill="url(#i64)"/><rect x="1612" y="340" width="237" height="3.6" fill="url(#i65)"/><rect x="1612" y="343" width="237" height="2.1" fill="url(#i66)"/></g><polygon fill="#000" fill-opacity=".38" points="1612.0,145.0 1849.0,145.0 1849.0,324.1 1612.0,165.7"/><rect x="1611.5" y="144.5" width="238.5" height="200.5" fill="none" stroke="#8a8a8a" stroke-width="2"/><rect x="1578" y="637.5" width="274" height="30.5" fill="#333"/><rect x="1395.0" y="281.9" width="14" height="14" fill="none" stroke="#fff" stroke-opacity=".88" stroke-width="1.75"/><rect x="1399.2" y="352.1" width="14" height="14" fill="none" stroke="#fff" stroke-opacity=".88" stroke-width="1.75"/><rect x="1458.4" y="350.5" width="14" height="14" fill="none" stroke="#fff" stroke-opacity=".88" stroke-width="1.75"/><rect x="1495.6" y="343.0" width="14" height="14" fill="none" stroke="#fff" stroke-opacity=".88" stroke-width="1.75"/><rect x="1518.8" y="361.9" width="14" height="14" fill="none" stroke="#fff" stroke-opacity=".88" stroke-width="1.75"/><rect x="1541.5" y="384.4" width="14" height="14" fill="none" stroke="#fff" stroke-opacity=".88" stroke-width="1.75"/><rect x="1574.1" y="405.0" width="14" height="14" fill="none" stroke="#fff" stroke-opacity=".88" stroke-width="1.75"/><rect x="1429.0" y="391.9" width="14" height="14" fill="none" stroke="#fff" stroke-opacity=".88" stroke-width="1.75"/><rect x="1364.1" y="435.0" width="14" height="14" fill="none" stroke="#fff" stroke-opacity=".88" stroke-width="1.75"/><rect x="1332.5" y="455.5" width="14" height="14" fill="none" stroke="#fff" stroke-opacity=".88" stroke-width="1.75"/><rect x="1317.9" y="492.5" width="14" height="14" fill="none" stroke="#fff" stroke-opacity=".88" stroke-width="1.75"/><rect x="1353.0" y="495.6" width="14" height="14" fill="none" stroke="#fff" stroke-opacity=".88" stroke-width="1.75"/><rect x="1368.1" y="503.0" width="14" height="14" fill="none" stroke="#fff" stroke-opacity=".88" stroke-width="1.75"/><rect x="1387.6" y="524.1" width="14" height="14" fill="none" stroke="#fff" stroke-opacity=".88" stroke-width="1.75"/><rect x="1324.8" y="543.2" width="14" height="14" fill="none" stroke="#fff" stroke-opacity=".88" stroke-width="1.75"/><rect x="1304.5" y="575.5" width="14" height="14" fill="none" stroke="#fff" stroke-opacity=".88" stroke-width="1.75"/><rect x="1269.0" y="626.1" width="14" height="14" fill="none" stroke="#fff" stroke-opacity=".88" stroke-width="1.75"/><rect x="1412.5" y="566.8" width="14" height="14" fill="none" stroke="#fff" stroke-opacity=".88" stroke-width="1.75"/><rect x="1457.2" y="507.5" width="14" height="14" fill="none" stroke="#fff" stroke-opacity=".88" stroke-width="1.75"/><rect x="1531.0" y="465.9" width="14" height="14" fill="none" stroke="#fff" stroke-opacity=".88" stroke-width="1.75"/><rect x="1595.0" y="463.0" width="14" height="14" fill="none" stroke="#fff" stroke-opacity=".88" stroke-width="1.75"/><rect x="1681.0" y="454.1" width="14" height="14" fill="none" stroke="#fff" stroke-opacity=".88" stroke-width="1.75"/><rect x="1461.5" y="437.9" width="14" height="14" fill="none" stroke="#fff" stroke-opacity=".88" stroke-width="1.75"/><rect x="1479.2" y="431.9" width="14" height="14" fill="none" stroke="#fff" stroke-opacity=".88" stroke-width="1.75"/><circle cx="1394.6" cy="279.1" r="4.5" fill="#30f030" stroke="#0a0a0a" stroke-width="1.2"/><circle cx="1402.3" cy="352.9" r="4.5" fill="#64825a" stroke="#0a0a0a" stroke-width="1.2"/><circle cx="1468.5" cy="352.9" r="4.5" fill="#aab068" stroke="#0a0a0a" stroke-width="1.2"/><circle cx="1506.9" cy="347.1" r="4.5" fill="#f0e61e" stroke="#0a0a0a" stroke-width="1.2"/><circle cx="1532.0" cy="365.8" r="4.5" fill="#dcbe46" stroke="#0a0a0a" stroke-width="1.2"/><circle cx="1555.8" cy="390.0" r="4.5" fill="#dca046" stroke="#0a0a0a" stroke-width="1.2"/><circle cx="1593.1" cy="411.1" r="4.5" fill="#c88246" stroke="#0a0a0a" stroke-width="1.2"/><circle cx="1436.0" cy="394.3" r="4.5" fill="#5a6950" stroke="#0a0a0a" stroke-width="1.2"/><circle cx="1365.1" cy="440.3" r="4.5" fill="#82aaa0" stroke="#0a0a0a" stroke-width="1.2"/><circle cx="1330.5" cy="462.5" r="4.5" fill="#28f0f0" stroke="#0a0a0a" stroke-width="1.2"/><circle cx="1319.2" cy="500.8" r="4.5" fill="#2d8291" stroke="#0a0a0a" stroke-width="1.2"/><circle cx="1356.0" cy="504.0" r="4.5" fill="#788296" stroke="#0a0a0a" stroke-width="1.2"/><circle cx="1373.5" cy="511.4" r="4.5" fill="#8c8ca5" stroke="#0a0a0a" stroke-width="1.2"/><circle cx="1393.1" cy="534.8" r="4.5" fill="#645069" stroke="#0a0a0a" stroke-width="1.2"/><circle cx="1328.0" cy="551.2" r="4.5" fill="#6469a0" stroke="#0a0a0a" stroke-width="1.2"/><circle cx="1305.7" cy="586.9" r="4.5" fill="#505096" stroke="#0a0a0a" stroke-width="1.2"/><circle cx="1273.2" cy="633.1" r="4.5" fill="#1414ff" stroke="#0a0a0a" stroke-width="1.2"/><circle cx="1422.3" cy="571.8" r="4.5" fill="#ff14ff" stroke="#0a0a0a" stroke-width="1.2"/><circle cx="1468.5" cy="515.8" r="4.5" fill="#b96e96" stroke="#0a0a0a" stroke-width="1.2"/><circle cx="1546.9" cy="472.9" r="4.5" fill="#be6478" stroke="#0a0a0a" stroke-width="1.2"/><circle cx="1618.0" cy="470.0" r="4.5" fill="#aa4650" stroke="#0a0a0a" stroke-width="1.2"/><circle cx="1696.6" cy="461.1" r="4.5" fill="#ff0a0a" stroke="#0a0a0a" stroke-width="1.2"/><circle cx="1471.4" cy="444.9" r="4.5" fill="#c8a091" stroke="#0a0a0a" stroke-width="1.2"/><circle cx="1494.9" cy="438.9" r="4.5" fill="#6e5a50" stroke="#0a0a0a" stroke-width="1.2"/><circle cx="1401.8" cy="488.8" r="5.1" fill="#000"/><rect x="1406.1" y="455.2" width="14.8" height="14.8" fill="none" stroke="#000" stroke-width="2.1"/><circle cx="1411.6" cy="465.2" r="4.3" fill="#787878" stroke="#141414" stroke-width="1.1"/><circle cx="1412.4" cy="463.6" r="4.3" fill="#888888" stroke="#141414" stroke-width="1.1"/><circle cx="1413.3" cy="462.0" r="4.3" fill="#989898" stroke="#141414" stroke-width="1.1"/><circle cx="1414.0" cy="460.8" r="4.3" fill="#a8a8a8" stroke="#141414" stroke-width="1.1"/><rect x="1722" y="236.7" width="14" height="14" fill="none" stroke="#fff" stroke-opacity=".9" stroke-width="2"/><circle cx="1758.8" cy="226" r="4.8" fill="#f5eb14" stroke="#0a0a0a" stroke-width="1.4"/></svg>
<span class="t" style="top:117.8px;left:1490.0px;transform-origin:0 0;font-size:15px;color:#d4d4d4;transform:translateX(-41.50px) scaleX(1.0157);">CIE 1931 xy</span>
<span class="t" style="top:682.8px;left:1151.2px;transform-origin:0 0;font-size:16.1px;color:#d8d8d8;transform:translateX(-4.25px) scaleX(0.9494);">0</span>
<span class="t" style="top:664.8px;left:1143.6px;transform-origin:0 0;font-size:16.1px;color:#d8d8d8;transform:translateX(-8.50px) scaleX(0.9494);">0</span>
<span class="t" style="top:682.8px;left:1235.2px;transform-origin:0 0;font-size:16.1px;color:#d8d8d8;transform:translateX(-10.65px) scaleX(0.9520);">0,1</span>
<span class="t" style="top:601.2px;left:1143.6px;transform-origin:0 0;font-size:16.1px;color:#d8d8d8;transform:translateX(-21.30px) scaleX(0.9520);">0,1</span>
<span class="t" style="top:682.8px;left:1319.2px;transform-origin:0 0;font-size:16.1px;color:#d8d8d8;transform:translateX(-10.65px) scaleX(0.9520);">0,2</span>
<span class="t" style="top:537.6px;left:1143.6px;transform-origin:0 0;font-size:16.1px;color:#d8d8d8;transform:translateX(-21.30px) scaleX(0.9520);">0,2</span>
<span class="t" style="top:682.8px;left:1403.2px;transform-origin:0 0;font-size:16.1px;color:#d8d8d8;transform:translateX(-10.65px) scaleX(0.9520);">0,3</span>
<span class="t" style="top:474.0px;left:1143.6px;transform-origin:0 0;font-size:16.1px;color:#d8d8d8;transform:translateX(-21.30px) scaleX(0.9520);">0,3</span>
<span class="t" style="top:682.8px;left:1487.2px;transform-origin:0 0;font-size:16.1px;color:#d8d8d8;transform:translateX(-10.65px) scaleX(0.9520);">0,4</span>
<span class="t" style="top:410.4px;left:1143.6px;transform-origin:0 0;font-size:16.1px;color:#d8d8d8;transform:translateX(-21.30px) scaleX(0.9520);">0,4</span>
<span class="t" style="top:682.8px;left:1571.2px;transform-origin:0 0;font-size:16.1px;color:#d8d8d8;transform:translateX(-10.65px) scaleX(0.9520);">0,5</span>
<span class="t" style="top:346.8px;left:1143.6px;transform-origin:0 0;font-size:16.1px;color:#d8d8d8;transform:translateX(-21.30px) scaleX(0.9520);">0,5</span>
<span class="t" style="top:682.8px;left:1655.2px;transform-origin:0 0;font-size:16.1px;color:#d8d8d8;transform:translateX(-10.65px) scaleX(0.9520);">0,6</span>
<span class="t" style="top:283.2px;left:1143.6px;transform-origin:0 0;font-size:16.1px;color:#d8d8d8;transform:translateX(-21.30px) scaleX(0.9520);">0,6</span>
<span class="t" style="top:682.8px;left:1739.2px;transform-origin:0 0;font-size:16.1px;color:#d8d8d8;transform:translateX(-10.65px) scaleX(0.9520);">0,7</span>
<span class="t" style="top:219.6px;left:1143.6px;transform-origin:0 0;font-size:16.1px;color:#d8d8d8;transform:translateX(-21.30px) scaleX(0.9520);">0,7</span>
<span class="t" style="top:682.8px;left:1823.2px;transform-origin:0 0;font-size:16.1px;color:#d8d8d8;transform:translateX(-10.65px) scaleX(0.9520);">0,8</span>
<span class="t" style="top:156.0px;left:1143.6px;transform-origin:0 0;font-size:16.1px;color:#d8d8d8;transform:translateX(-21.30px) scaleX(0.9520);">0,8</span>
<span class="t" style="top:641.2px;left:1579.0px;transform-origin:0 0;font-size:22.6px;color:#f0f0f0;transform:scaleX(0.9489);">RGB Triplet: 255, 255, 0</span>
<div class="a" style="left:402px;top:728.5px;width:1463.5px;height:29px;background:linear-gradient(#2f2f2f 0%,#2a2a2a 49%,#1c1c1c 51%,#0f0f0f 100%);"></div>
<div class="a" style="left:402px;top:728.2px;width:17.8px;height:29.5px;background:#000;"></div>
<div class="a" style="left:0;top:720px;width:1865.5px;height:260px;overflow:hidden">
<div class="a" style="left:419.5px;top:37.5px;width:1446px;height:28px;background:#474747"></div>
<div class="a" style="left:402px;top:37.5px;width:17.5px;height:28px;background:linear-gradient(90deg,#3a3a3a,#2a2a2a);border-bottom:1px solid #222"></div>
<div class="a" style="left:419.5px;top:65.5px;width:1446px;height:28px;background:#858585"></div>
<div class="a" style="left:402px;top:65.5px;width:17.5px;height:28px;background:linear-gradient(90deg,#3a3a3a,#2a2a2a);border-bottom:1px solid #222"></div>
<div class="a" style="left:419.5px;top:93.5px;width:1446px;height:28px;background:#474747"></div>
<div class="a" style="left:402px;top:93.5px;width:17.5px;height:28px;background:linear-gradient(90deg,#3a3a3a,#2a2a2a);border-bottom:1px solid #222"></div>
<div class="a" style="left:419.5px;top:121.5px;width:1446px;height:28px;background:#858585"></div>
<div class="a" style="left:402px;top:121.5px;width:17.5px;height:28px;background:linear-gradient(90deg,#3a3a3a,#2a2a2a);border-bottom:1px solid #222"></div>
<div class="a" style="left:419.5px;top:149.5px;width:1446px;height:28px;background:#474747"></div>
<div class="a" style="left:402px;top:149.5px;width:17.5px;height:28px;background:linear-gradient(90deg,#3a3a3a,#2a2a2a);border-bottom:1px solid #222"></div>
<div class="a" style="left:419.5px;top:177.5px;width:1446px;height:28px;background:#858585"></div>
<div class="a" style="left:402px;top:177.5px;width:17.5px;height:28px;background:linear-gradient(90deg,#3a3a3a,#2a2a2a);border-bottom:1px solid #222"></div>
<div class="a" style="left:419.5px;top:205.5px;width:1446px;height:28px;background:#474747"></div>
<div class="a" style="left:402px;top:205.5px;width:17.5px;height:28px;background:linear-gradient(90deg,#3a3a3a,#2a2a2a);border-bottom:1px solid #222"></div>
<span class="t" style="top:15.6px;left:569.3px;transform-origin:0 0;font-size:17.4px;color:#fff;transform:scaleX(1.1923);-webkit-text-stroke:0.3px #fff;">White</span>
<span class="t" style="top:15.6px;left:667.0px;transform-origin:0 0;font-size:17.4px;color:#fff;transform:scaleX(1.0667);-webkit-text-stroke:0.3px #fff;">Gray 80</span>
<span class="t" style="top:15.6px;left:764.5px;transform-origin:0 0;font-size:17.4px;color:#fff;transform:scaleX(1.0667);-webkit-text-stroke:0.3px #fff;">Gray 65</span>
<span class="t" style="top:15.6px;left:862.3px;transform-origin:0 0;font-size:17.4px;color:#fff;transform:scaleX(1.0667);-webkit-text-stroke:0.3px #fff;">Gray 50</span>
<span class="t" style="top:15.6px;left:960.0px;transform-origin:0 0;font-size:17.4px;color:#fff;transform:scaleX(1.0667);-webkit-text-stroke:0.3px #fff;">Gray 35</span>
<span class="t" style="top:15.6px;left:1057.3px;transform-origin:0 0;font-size:17.4px;color:#fff;transform:scaleX(1.0698);-webkit-text-stroke:0.3px #fff;">Black</span>
<span class="t" style="top:15.6px;left:1132.3px;transform-origin:0 0;font-size:17.4px;color:#fff;transform:scaleX(1.0611);-webkit-text-stroke:0.3px #fff;">Dark Skin</span>
<span class="t" style="top:15.6px;left:1223.7px;transform-origin:0 0;font-size:17.4px;color:#fff;transform:scaleX(1.0802);-webkit-text-stroke:0.3px #fff;">Light Skin</span>
<span class="t" style="top:15.6px;left:1321.5px;transform-origin:0 0;font-size:17.4px;color:#fff;transform:scaleX(1.0125);-webkit-text-stroke:0.3px #fff;">Blue Sky</span>
<span class="t" style="top:15.6px;left:1407.5px;transform-origin:0 0;font-size:17.4px;color:#fff;transform:scaleX(1.0693);-webkit-text-stroke:0.3px #fff;">Foliage</span>
<span class="t" style="top:15.6px;left:1493.8px;transform-origin:0 0;font-size:17.4px;color:#fff;transform:scaleX(1.1053);-webkit-text-stroke:0.3px #fff;">Blue Flower</span>
<span class="t" style="top:15.6px;left:1606.8px;transform-origin:0 0;font-size:17.4px;color:#fff;transform:scaleX(1.0892);-webkit-text-stroke:0.3px #fff;">Bluish Green</span>
<span class="t" style="top:15.6px;left:1727.0px;transform-origin:0 0;font-size:17.4px;color:#fff;transform:scaleX(1.0859);-webkit-text-stroke:0.3px #fff;">Orange</span>
<span class="t" style="top:15.6px;left:1824.8px;transform-origin:0 0;font-size:17.4px;color:#fff;transform:scaleX(1.0930);-webkit-text-stroke:0.3px #fff;">Purplish Blue</span>
<span class="t" style="top:44.5px;left:425.5px;transform-origin:0 0;font-size:17.4px;color:#fff;transform:scaleX(1.0644);-webkit-text-stroke:0.3px #fff;">x: CIE31</span>
<span class="t" style="top:44.5px;left:569.3px;transform-origin:0 0;font-size:17.4px;color:#fff;transform:scaleX(1.1848);-webkit-text-stroke:0.3px #fff;">0,3119</span>
<span class="t" style="top:44.5px;left:667.0px;transform-origin:0 0;font-size:17.4px;color:#fff;transform:scaleX(1.1559);-webkit-text-stroke:0.3px #fff;">0,3120</span>
<span class="t" style="top:44.5px;left:764.5px;transform-origin:0 0;font-size:17.4px;color:#fff;transform:scaleX(1.1559);-webkit-text-stroke:0.3px #fff;">0,3122</span>
<span class="t" style="top:44.5px;left:862.3px;transform-origin:0 0;font-size:17.4px;color:#fff;transform:scaleX(1.1848);-webkit-text-stroke:0.3px #fff;">0,3118</span>
<span class="t" style="top:44.5px;left:960.0px;transform-origin:0 0;font-size:17.4px;color:#fff;transform:scaleX(1.1559);-webkit-text-stroke:0.3px #fff;">0,3125</span>
<span class="t" style="top:44.5px;left:1057.3px;transform-origin:0 0;font-size:17.4px;color:#fff;transform:scaleX(1.1559);-webkit-text-stroke:0.3px #fff;">0,2984</span>
<span class="t" style="top:44.5px;left:1132.3px;transform-origin:0 0;font-size:17.4px;color:#fff;transform:scaleX(1.1559);-webkit-text-stroke:0.3px #fff;">0,4109</span>
<span class="t" style="top:44.5px;left:1223.7px;transform-origin:0 0;font-size:17.4px;color:#fff;transform:scaleX(1.1559);-webkit-text-stroke:0.3px #fff;">0,3825</span>
<span class="t" style="top:44.5px;left:1321.5px;transform-origin:0 0;font-size:17.4px;color:#fff;transform:scaleX(1.1559);-webkit-text-stroke:0.3px #fff;">0,2445</span>
<span class="t" style="top:44.5px;left:1407.5px;transform-origin:0 0;font-size:17.4px;color:#fff;transform:scaleX(1.1559);-webkit-text-stroke:0.3px #fff;">0,3402</span>
<span class="t" style="top:44.5px;left:1493.8px;transform-origin:0 0;font-size:17.4px;color:#fff;transform:scaleX(1.1559);-webkit-text-stroke:0.3px #fff;">0,2658</span>
<span class="t" style="top:44.5px;left:1606.8px;transform-origin:0 0;font-size:17.4px;color:#fff;transform:scaleX(1.1559);-webkit-text-stroke:0.3px #fff;">0,2560</span>
<span class="t" style="top:44.5px;left:1727.0px;transform-origin:0 0;font-size:17.4px;color:#fff;transform:scaleX(1.1559);-webkit-text-stroke:0.3px #fff;">0,5261</span>
<span class="t" style="top:44.5px;left:1824.8px;transform-origin:0 0;font-size:17.4px;color:#fff;transform:scaleX(1.1559);-webkit-text-stroke:0.3px #fff;">0,2100</span>
<span class="t" style="top:72.5px;left:425.5px;transform-origin:0 0;font-size:17.4px;color:#f4f4f4;transform:scaleX(1.0644);-webkit-text-stroke:0.3px #f4f4f4;">y: CIE31</span>
<span class="t" style="top:72.5px;left:569.3px;transform-origin:0 0;font-size:17.4px;color:#f4f4f4;transform:scaleX(1.1559);-webkit-text-stroke:0.3px #f4f4f4;">0,3281</span>
<span class="t" style="top:72.5px;left:667.0px;transform-origin:0 0;font-size:17.4px;color:#f4f4f4;transform:scaleX(1.1559);-webkit-text-stroke:0.3px #f4f4f4;">0,3286</span>
<span class="t" style="top:72.5px;left:764.5px;transform-origin:0 0;font-size:17.4px;color:#f4f4f4;transform:scaleX(1.1559);-webkit-text-stroke:0.3px #f4f4f4;">0,3286</span>
<span class="t" style="top:72.5px;left:862.3px;transform-origin:0 0;font-size:17.4px;color:#f4f4f4;transform:scaleX(1.1559);-webkit-text-stroke:0.3px #f4f4f4;">0,3285</span>
<span class="t" style="top:72.5px;left:960.0px;transform-origin:0 0;font-size:17.4px;color:#f4f4f4;transform:scaleX(1.1559);-webkit-text-stroke:0.3px #f4f4f4;">0,3297</span>
<span class="t" style="top:72.5px;left:1057.3px;transform-origin:0 0;font-size:17.4px;color:#f4f4f4;transform:scaleX(1.1559);-webkit-text-stroke:0.3px #f4f4f4;">0,2868</span>
<span class="t" style="top:72.5px;left:1132.3px;transform-origin:0 0;font-size:17.4px;color:#f4f4f4;transform:scaleX(1.1559);-webkit-text-stroke:0.3px #f4f4f4;">0,3662</span>
<span class="t" style="top:72.5px;left:1223.7px;transform-origin:0 0;font-size:17.4px;color:#f4f4f4;transform:scaleX(1.1559);-webkit-text-stroke:0.3px #f4f4f4;">0,3564</span>
<span class="t" style="top:72.5px;left:1321.5px;transform-origin:0 0;font-size:17.4px;color:#f4f4f4;transform:scaleX(1.1559);-webkit-text-stroke:0.3px #f4f4f4;">0,2637</span>
<span class="t" style="top:72.5px;left:1407.5px;transform-origin:0 0;font-size:17.4px;color:#f4f4f4;transform:scaleX(1.1559);-webkit-text-stroke:0.3px #f4f4f4;">0,4345</span>
<span class="t" style="top:72.5px;left:1493.8px;transform-origin:0 0;font-size:17.4px;color:#f4f4f4;transform:scaleX(1.1559);-webkit-text-stroke:0.3px #f4f4f4;">0,2504</span>
<span class="t" style="top:72.5px;left:1606.8px;transform-origin:0 0;font-size:17.4px;color:#f4f4f4;transform:scaleX(1.1559);-webkit-text-stroke:0.3px #f4f4f4;">0,3623</span>
<span class="t" style="top:72.5px;left:1727.0px;transform-origin:0 0;font-size:17.4px;color:#f4f4f4;transform:scaleX(1.1559);-webkit-text-stroke:0.3px #f4f4f4;">0,4081</span>
<span class="t" style="top:72.5px;left:1824.8px;transform-origin:0 0;font-size:17.4px;color:#f4f4f4;transform:scaleX(1.1559);-webkit-text-stroke:0.3px #f4f4f4;">0,1890</span>
<span class="t" style="top:100.5px;left:425.5px;transform-origin:0 0;font-size:17.4px;color:#fff;transform:scaleX(0.9475);-webkit-text-stroke:0.3px #fff;">Y</span>
<span class="t" style="top:100.5px;left:569.3px;transform-origin:0 0;font-size:17.4px;color:#fff;transform:scaleX(1.1615);-webkit-text-stroke:0.3px #fff;">414,1832</span>
<span class="t" style="top:100.5px;left:667.0px;transform-origin:0 0;font-size:17.4px;color:#fff;transform:scaleX(1.1615);-webkit-text-stroke:0.3px #fff;">329,3736</span>
<span class="t" style="top:100.5px;left:764.5px;transform-origin:0 0;font-size:17.4px;color:#fff;transform:scaleX(1.1615);-webkit-text-stroke:0.3px #fff;">267,5171</span>
<span class="t" style="top:100.5px;left:862.3px;transform-origin:0 0;font-size:17.4px;color:#fff;transform:scaleX(1.1615);-webkit-text-stroke:0.3px #fff;">205,8330</span>
<span class="t" style="top:100.5px;left:960.0px;transform-origin:0 0;font-size:17.4px;color:#fff;transform:scaleX(1.1615);-webkit-text-stroke:0.3px #fff;">144,0705</span>
<span class="t" style="top:100.5px;left:1057.3px;transform-origin:0 0;font-size:17.4px;color:#fff;transform:scaleX(1.1559);-webkit-text-stroke:0.3px #fff;">0,2997</span>
<span class="t" style="top:100.5px;left:1132.3px;transform-origin:0 0;font-size:17.4px;color:#fff;transform:scaleX(1.1591);-webkit-text-stroke:0.3px #fff;">41,5048</span>
<span class="t" style="top:100.5px;left:1223.7px;transform-origin:0 0;font-size:17.4px;color:#fff;transform:scaleX(1.1615);-webkit-text-stroke:0.3px #fff;">147,9268</span>
<span class="t" style="top:100.5px;left:1321.5px;transform-origin:0 0;font-size:17.4px;color:#fff;transform:scaleX(1.1591);-webkit-text-stroke:0.3px #fff;">77,6501</span>
<span class="t" style="top:100.5px;left:1407.5px;transform-origin:0 0;font-size:17.4px;color:#fff;transform:scaleX(1.1591);-webkit-text-stroke:0.3px #fff;">53,4763</span>
<span class="t" style="top:100.5px;left:1493.8px;transform-origin:0 0;font-size:17.4px;color:#fff;transform:scaleX(1.1591);-webkit-text-stroke:0.3px #fff;">97,3743</span>
<span class="t" style="top:100.5px;left:1606.8px;transform-origin:0 0;font-size:17.4px;color:#fff;transform:scaleX(1.1615);-webkit-text-stroke:0.3px #fff;">173,4646</span>
<span class="t" style="top:100.5px;left:1727.0px;transform-origin:0 0;font-size:17.4px;color:#fff;transform:scaleX(1.1615);-webkit-text-stroke:0.3px #fff;">120,4062</span>
<span class="t" style="top:100.5px;left:1824.8px;transform-origin:0 0;font-size:17.4px;color:#fff;transform:scaleX(1.1591);-webkit-text-stroke:0.3px #fff;">48,4500</span>
<span class="t" style="top:128.5px;left:425.5px;transform-origin:0 0;font-size:17.4px;color:#f4f4f4;transform:scaleX(1.1345);-webkit-text-stroke:0.3px #f4f4f4;">Target x:CIE31</span>
<span class="t" style="top:128.5px;left:569.3px;transform-origin:0 0;font-size:17.4px;color:#f4f4f4;transform:scaleX(1.1559);-webkit-text-stroke:0.3px #f4f4f4;">0,3127</span>
<span class="t" style="top:128.5px;left:667.0px;transform-origin:0 0;font-size:17.4px;color:#f4f4f4;transform:scaleX(1.1559);-webkit-text-stroke:0.3px #f4f4f4;">0,3127</span>
<span class="t" style="top:128.5px;left:764.5px;transform-origin:0 0;font-size:17.4px;color:#f4f4f4;transform:scaleX(1.1559);-webkit-text-stroke:0.3px #f4f4f4;">0,3127</span>
<span class="t" style="top:128.5px;left:862.3px;transform-origin:0 0;font-size:17.4px;color:#f4f4f4;transform:scaleX(1.1559);-webkit-text-stroke:0.3px #f4f4f4;">0,3127</span>
<span class="t" style="top:128.5px;left:960.0px;transform-origin:0 0;font-size:17.4px;color:#f4f4f4;transform:scaleX(1.1559);-webkit-text-stroke:0.3px #f4f4f4;">0,3127</span>
<span class="t" style="top:128.5px;left:1057.3px;transform-origin:0 0;font-size:17.4px;color:#f4f4f4;transform:scaleX(1.1559);-webkit-text-stroke:0.3px #f4f4f4;">0,3127</span>
<span class="t" style="top:128.5px;left:1132.3px;transform-origin:0 0;font-size:17.4px;color:#f4f4f4;transform:scaleX(1.1559);-webkit-text-stroke:0.3px #f4f4f4;">0,4003</span>
<span class="t" style="top:128.5px;left:1223.7px;transform-origin:0 0;font-size:17.4px;color:#f4f4f4;transform:scaleX(1.1559);-webkit-text-stroke:0.3px #f4f4f4;">0,3795</span>
<span class="t" style="top:128.5px;left:1321.5px;transform-origin:0 0;font-size:17.4px;color:#f4f4f4;transform:scaleX(1.1559);-webkit-text-stroke:0.3px #f4f4f4;">0,2496</span>
<span class="t" style="top:128.5px;left:1407.5px;transform-origin:0 0;font-size:17.4px;color:#f4f4f4;transform:scaleX(1.1559);-webkit-text-stroke:0.3px #f4f4f4;">0,3395</span>
<span class="t" style="top:128.5px;left:1493.8px;transform-origin:0 0;font-size:17.4px;color:#f4f4f4;transform:scaleX(1.1559);-webkit-text-stroke:0.3px #f4f4f4;">0,2681</span>
<span class="t" style="top:128.5px;left:1606.8px;transform-origin:0 0;font-size:17.4px;color:#f4f4f4;transform:scaleX(1.1559);-webkit-text-stroke:0.3px #f4f4f4;">0,2626</span>
<span class="t" style="top:128.5px;left:1727.0px;transform-origin:0 0;font-size:17.4px;color:#f4f4f4;transform:scaleX(1.1559);-webkit-text-stroke:0.3px #f4f4f4;">0,5122</span>
<span class="t" style="top:128.5px;left:1824.8px;transform-origin:0 0;font-size:17.4px;color:#f4f4f4;transform:scaleX(1.1559);-webkit-text-stroke:0.3px #f4f4f4;">0,2100</span>
<span class="t" style="top:156.5px;left:425.5px;transform-origin:0 0;font-size:17.4px;color:#fff;transform:scaleX(1.1345);-webkit-text-stroke:0.3px #fff;">Target y:CIE31</span>
<span class="t" style="top:156.5px;left:569.3px;transform-origin:0 0;font-size:17.4px;color:#fff;transform:scaleX(1.1559);-webkit-text-stroke:0.3px #fff;">0,3290</span>
<span class="t" style="top:156.5px;left:667.0px;transform-origin:0 0;font-size:17.4px;color:#fff;transform:scaleX(1.1559);-webkit-text-stroke:0.3px #fff;">0,3290</span>
<span class="t" style="top:156.5px;left:764.5px;transform-origin:0 0;font-size:17.4px;color:#fff;transform:scaleX(1.1559);-webkit-text-stroke:0.3px #fff;">0,3290</span>
<span class="t" style="top:156.5px;left:862.3px;transform-origin:0 0;font-size:17.4px;color:#fff;transform:scaleX(1.1559);-webkit-text-stroke:0.3px #fff;">0,3290</span>
<span class="t" style="top:156.5px;left:960.0px;transform-origin:0 0;font-size:17.4px;color:#fff;transform:scaleX(1.1559);-webkit-text-stroke:0.3px #fff;">0,3290</span>
<span class="t" style="top:156.5px;left:1057.3px;transform-origin:0 0;font-size:17.4px;color:#fff;transform:scaleX(1.1559);-webkit-text-stroke:0.3px #fff;">0,3290</span>
<span class="t" style="top:156.5px;left:1132.3px;transform-origin:0 0;font-size:17.4px;color:#fff;transform:scaleX(1.1559);-webkit-text-stroke:0.3px #fff;">0,3642</span>
<span class="t" style="top:156.5px;left:1223.7px;transform-origin:0 0;font-size:17.4px;color:#fff;transform:scaleX(1.1559);-webkit-text-stroke:0.3px #fff;">0,3562</span>
<span class="t" style="top:156.5px;left:1321.5px;transform-origin:0 0;font-size:17.4px;color:#fff;transform:scaleX(1.1559);-webkit-text-stroke:0.3px #fff;">0,2656</span>
<span class="t" style="top:156.5px;left:1407.5px;transform-origin:0 0;font-size:17.4px;color:#fff;transform:scaleX(1.1559);-webkit-text-stroke:0.3px #fff;">0,4271</span>
<span class="t" style="top:156.5px;left:1493.8px;transform-origin:0 0;font-size:17.4px;color:#fff;transform:scaleX(1.1559);-webkit-text-stroke:0.3px #fff;">0,2525</span>
<span class="t" style="top:156.5px;left:1606.8px;transform-origin:0 0;font-size:17.4px;color:#fff;transform:scaleX(1.1559);-webkit-text-stroke:0.3px #fff;">0,3616</span>
<span class="t" style="top:156.5px;left:1727.0px;transform-origin:0 0;font-size:17.4px;color:#fff;transform:scaleX(1.1559);-webkit-text-stroke:0.3px #fff;">0,4063</span>
<span class="t" style="top:156.5px;left:1824.8px;transform-origin:0 0;font-size:17.4px;color:#fff;transform:scaleX(1.1559);-webkit-text-stroke:0.3px #fff;">0,1920</span>
<span class="t" style="top:184.5px;left:425.5px;transform-origin:0 0;font-size:17.4px;color:#f4f4f4;transform:scaleX(1.1636);-webkit-text-stroke:0.3px #f4f4f4;">Target Y</span>
<span class="t" style="top:184.5px;left:569.3px;transform-origin:0 0;font-size:17.4px;color:#f4f4f4;transform:scaleX(1.1615);-webkit-text-stroke:0.3px #f4f4f4;">414,1832</span>
<span class="t" style="top:184.5px;left:667.0px;transform-origin:0 0;font-size:17.4px;color:#f4f4f4;transform:scaleX(1.1615);-webkit-text-stroke:0.3px #f4f4f4;">327,7423</span>
<span class="t" style="top:184.5px;left:764.5px;transform-origin:0 0;font-size:17.4px;color:#f4f4f4;transform:scaleX(1.1615);-webkit-text-stroke:0.3px #f4f4f4;">264,0819</span>
<span class="t" style="top:184.5px;left:862.3px;transform-origin:0 0;font-size:17.4px;color:#f4f4f4;transform:scaleX(1.1615);-webkit-text-stroke:0.3px #f4f4f4;">203,3726</span>
<span class="t" style="top:184.5px;left:960.0px;transform-origin:0 0;font-size:17.4px;color:#f4f4f4;transform:scaleX(1.1615);-webkit-text-stroke:0.3px #f4f4f4;">141,6152</span>
<span class="t" style="top:184.5px;left:1057.3px;transform-origin:0 0;font-size:17.4px;color:#f4f4f4;transform:scaleX(1.1559);-webkit-text-stroke:0.3px #f4f4f4;">0,0000</span>
<span class="t" style="top:184.5px;left:1132.3px;transform-origin:0 0;font-size:17.4px;color:#f4f4f4;transform:scaleX(1.1591);-webkit-text-stroke:0.3px #f4f4f4;">41,7219</span>
<span class="t" style="top:184.5px;left:1223.7px;transform-origin:0 0;font-size:17.4px;color:#f4f4f4;transform:scaleX(1.1615);-webkit-text-stroke:0.3px #f4f4f4;">144,5299</span>
<span class="t" style="top:184.5px;left:1321.5px;transform-origin:0 0;font-size:17.4px;color:#f4f4f4;transform:scaleX(1.1591);-webkit-text-stroke:0.3px #f4f4f4;">77,4456</span>
<span class="t" style="top:184.5px;left:1407.5px;transform-origin:0 0;font-size:17.4px;color:#f4f4f4;transform:scaleX(1.1591);-webkit-text-stroke:0.3px #f4f4f4;">53,9782</span>
<span class="t" style="top:184.5px;left:1493.8px;transform-origin:0 0;font-size:17.4px;color:#f4f4f4;transform:scaleX(1.1591);-webkit-text-stroke:0.3px #f4f4f4;">96,5813</span>
<span class="t" style="top:184.5px;left:1606.8px;transform-origin:0 0;font-size:17.4px;color:#f4f4f4;transform:scaleX(1.1615);-webkit-text-stroke:0.3px #f4f4f4;">173,4310</span>
<span class="t" style="top:184.5px;left:1727.0px;transform-origin:0 0;font-size:17.4px;color:#f4f4f4;transform:scaleX(1.2045);-webkit-text-stroke:0.3px #f4f4f4;">117,4119</span>
<span class="t" style="top:184.5px;left:1824.8px;transform-origin:0 0;font-size:17.4px;color:#f4f4f4;transform:scaleX(1.1591);-webkit-text-stroke:0.3px #f4f4f4;">48,6800</span>
<span class="t" style="top:212.5px;left:425.5px;transform-origin:0 0;font-size:17.4px;color:#fff;transform:scaleX(1.1311);-webkit-text-stroke:0.3px #fff;">&Delta;E 2000</span>
<span class="t" style="top:212.5px;left:569.3px;transform-origin:0 0;font-size:17.4px;color:#fff;transform:scaleX(1.1559);-webkit-text-stroke:0.3px #fff;">0,5003</span>
<span class="t" style="top:212.5px;left:667.0px;transform-origin:0 0;font-size:17.4px;color:#fff;transform:scaleX(1.1559);-webkit-text-stroke:0.3px #fff;">0,3979</span>
<span class="t" style="top:212.5px;left:764.5px;transform-origin:0 0;font-size:17.4px;color:#fff;transform:scaleX(1.1559);-webkit-text-stroke:0.3px #fff;">0,3800</span>
<span class="t" style="top:212.5px;left:862.3px;transform-origin:0 0;font-size:17.4px;color:#fff;transform:scaleX(1.1559);-webkit-text-stroke:0.3px #fff;">0,4740</span>
<span class="t" style="top:212.5px;left:960.0px;transform-origin:0 0;font-size:17.4px;color:#fff;transform:scaleX(1.1559);-webkit-text-stroke:0.3px #fff;">0,6091</span>
<span class="t" style="top:212.5px;left:1057.3px;transform-origin:0 0;font-size:17.4px;color:#fff;transform:scaleX(1.1559);-webkit-text-stroke:0.3px #fff;">0,6558</span>
<span class="t" style="top:212.5px;left:1132.3px;transform-origin:0 0;font-size:17.4px;color:#fff;transform:scaleX(1.1559);-webkit-text-stroke:0.3px #fff;">1,3540</span>
<span class="t" style="top:212.5px;left:1223.7px;transform-origin:0 0;font-size:17.4px;color:#fff;transform:scaleX(1.1559);-webkit-text-stroke:0.3px #fff;">0,8780</span>
<span class="t" style="top:212.5px;left:1321.5px;transform-origin:0 0;font-size:17.4px;color:#fff;transform:scaleX(1.1559);-webkit-text-stroke:0.3px #fff;">1,4912</span>
<span class="t" style="top:212.5px;left:1407.5px;transform-origin:0 0;font-size:17.4px;color:#fff;transform:scaleX(1.1559);-webkit-text-stroke:0.3px #fff;">0,8576</span>
<span class="t" style="top:212.5px;left:1493.8px;transform-origin:0 0;font-size:17.4px;color:#fff;transform:scaleX(1.1559);-webkit-text-stroke:0.3px #fff;">0,6484</span>
<span class="t" style="top:212.5px;left:1606.8px;transform-origin:0 0;font-size:17.4px;color:#fff;transform:scaleX(1.1559);-webkit-text-stroke:0.3px #fff;">1,3595</span>
<span class="t" style="top:212.5px;left:1727.0px;transform-origin:0 0;font-size:17.4px;color:#fff;transform:scaleX(1.1559);-webkit-text-stroke:0.3px #fff;">1,6964</span>
<span class="t" style="top:212.5px;left:1824.8px;transform-origin:0 0;font-size:17.4px;color:#fff;transform:scaleX(1.1441);-webkit-text-stroke:0.3px #fff;">1,53</span>
</div>
<div class="a" style="left:420.5px;top:955px;width:1445px;height:17.6px;background:#5c5c5c;border-radius:3px;"></div>
<div class="a" style="left:443.5px;top:956.3px;width:630px;height:15px;background:#444;border-radius:7.5px;"></div>
<div class="a" style="left:421.8px;top:955.8px;width:17.6px;height:16px;background:linear-gradient(#9a9a9a,#777);border-radius:3px;"></div>
<div class="a" style="left:1847.5px;top:955.8px;width:17.6px;height:16px;background:linear-gradient(#9a9a9a,#777);border-radius:3px;"></div>
<svg width="1912" height="980" viewBox="0 0 1912 980"><polygon points="434,958 434,969.5 426,963.8" fill="#484848"/><polygon points="1852.5,958 1852.5,969.5 1860.5,963.8" fill="#484848"/></svg>
<div class="a" style="left:0px;top:977px;width:1912px;height:63px;background:#2a2a2a;"></div>
<div class="a" style="left:1.2px;top:978px;width:51.2px;height:61px;background:linear-gradient(#9c9c9c 0%,#8c8c8c 35%,#707070 75%,#5c5c5c 100%);border:1px solid #a8a8a8;border-bottom-color:#555;border-left-color:#8c8c8c;border-right-color:#777;border-radius:5px 5px 4px 4px;"></div>
<div class="a" style="left:6.4px;top:983px;width:41.2px;height:35.6px;background:#ffffff;border-radius:3.5px;box-shadow:0 0 1.5px rgba(0,0,0,.55), inset 0 1px 1px rgba(255,255,255,.25);"></div>
<span class="t" style="top:1024.6px;left:27.0px;transform-origin:0 0;font-size:10.6px;color:#2b2b2b;font-weight:bold;transform:translateX(-14.35px) scaleX(0.9950);">White</span>
<div class="a" style="left:54.37px;top:978px;width:51.2px;height:61px;background:linear-gradient(#9c9c9c 0%,#8c8c8c 35%,#707070 75%,#5c5c5c 100%);border:1px solid #a8a8a8;border-bottom-color:#555;border-left-color:#8c8c8c;border-right-color:#777;border-radius:5px 5px 4px 4px;"></div>
<div class="a" style="left:59.57px;top:983px;width:41.2px;height:35.6px;background:#e6e6e6;border-radius:3.5px;box-shadow:0 0 1.5px rgba(0,0,0,.55), inset 0 1px 1px rgba(255,255,255,.25);"></div>
<span class="t" style="top:1024.6px;left:80.2px;transform-origin:0 0;font-size:10.6px;color:#2b2b2b;font-weight:bold;transform:translateX(-18.35px) scaleX(0.9441);">Gray 80</span>
<div class="a" style="left:107.54px;top:978px;width:51.2px;height:61px;background:linear-gradient(#9c9c9c 0%,#8c8c8c 35%,#707070 75%,#5c5c5c 100%);border:1px solid #a8a8a8;border-bottom-color:#555;border-left-color:#8c8c8c;border-right-color:#777;border-radius:5px 5px 4px 4px;"></div>
<div class="a" style="left:112.74px;top:983px;width:41.2px;height:35.6px;background:#d2d2d3;border-radius:3.5px;box-shadow:0 0 1.5px rgba(0,0,0,.55), inset 0 1px 1px rgba(255,255,255,.25);"></div>
<span class="t" style="top:1024.6px;left:133.3px;transform-origin:0 0;font-size:10.6px;color:#2b2b2b;font-weight:bold;transform:translateX(-18.35px) scaleX(0.9441);">Gray 65</span>
<div class="a" style="left:160.71px;top:978px;width:51.2px;height:61px;background:linear-gradient(#9c9c9c 0%,#8c8c8c 35%,#707070 75%,#5c5c5c 100%);border:1px solid #a8a8a8;border-bottom-color:#555;border-left-color:#8c8c8c;border-right-color:#777;border-radius:5px 5px 4px 4px;"></div>
<div class="a" style="left:165.91px;top:983px;width:41.2px;height:35.6px;background:#bbbbbc;border-radius:3.5px;box-shadow:0 0 1.5px rgba(0,0,0,.55), inset 0 1px 1px rgba(255,255,255,.25);"></div>
<span class="t" style="top:1024.6px;left:186.5px;transform-origin:0 0;font-size:10.6px;color:#2b2b2b;font-weight:bold;transform:translateX(-18.35px) scaleX(0.9441);">Gray 50</span>
<div class="a" style="left:213.88px;top:978px;width:51.2px;height:61px;background:linear-gradient(#9c9c9c 0%,#8c8c8c 35%,#707070 75%,#5c5c5c 100%);border:1px solid #a8a8a8;border-bottom-color:#555;border-left-color:#8c8c8c;border-right-color:#777;border-radius:5px 5px 4px 4px;"></div>
<div class="a" style="left:219.08px;top:983px;width:41.2px;height:35.6px;background:#a0a0a0;border-radius:3.5px;box-shadow:0 0 1.5px rgba(0,0,0,.55), inset 0 1px 1px rgba(255,255,255,.25);"></div>
<span class="t" style="top:1024.6px;left:239.7px;transform-origin:0 0;font-size:10.6px;color:#2b2b2b;font-weight:bold;transform:translateX(-18.35px) scaleX(0.9441);">Gray 35</span>
<div class="a" style="left:267.05px;top:978px;width:51.2px;height:61px;background:linear-gradient(#9c9c9c 0%,#8c8c8c 35%,#707070 75%,#5c5c5c 100%);border:1px solid #a8a8a8;border-bottom-color:#555;border-left-color:#8c8c8c;border-right-color:#777;border-radius:5px 5px 4px 4px;"></div>
<div class="a" style="left:272.25px;top:983px;width:41.2px;height:35.6px;background:#000000;border-radius:3.5px;box-shadow:0 0 1.5px rgba(0,0,0,.55), inset 0 1px 1px rgba(255,255,255,.25);"></div>
<span class="t" style="top:1024.6px;left:292.9px;transform-origin:0 0;font-size:10.6px;color:#2b2b2b;font-weight:bold;transform:translateX(-12.60px) scaleX(0.8910);">Black</span>
<div class="a" style="left:320.22px;top:978px;width:51.2px;height:61px;background:linear-gradient(#9c9c9c 0%,#8c8c8c 35%,#707070 75%,#5c5c5c 100%);border:1px solid #a8a8a8;border-bottom-color:#555;border-left-color:#8c8c8c;border-right-color:#777;border-radius:5px 5px 4px 4px;"></div>
<div class="a" style="left:325.42px;top:983px;width:41.2px;height:35.6px;background:#795443;border-radius:3.5px;box-shadow:0 0 1.5px rgba(0,0,0,.55), inset 0 1px 1px rgba(255,255,255,.25);"></div>
<span class="t" style="top:1024.6px;left:346.0px;transform-origin:0 0;font-size:10.6px;color:#2b2b2b;font-weight:bold;transform:translateX(-22.65px) scaleX(0.9269);">Dark Skin</span>
<div class="a" style="left:373.39px;top:978px;width:51.2px;height:61px;background:linear-gradient(#9c9c9c 0%,#8c8c8c 35%,#707070 75%,#5c5c5c 100%);border:1px solid #a8a8a8;border-bottom-color:#555;border-left-color:#8c8c8c;border-right-color:#777;border-radius:5px 5px 4px 4px;"></div>
<div class="a" style="left:378.59px;top:983px;width:41.2px;height:35.6px;background:#c99786;border-radius:3.5px;box-shadow:0 0 1.5px rgba(0,0,0,.55), inset 0 1px 1px rgba(255,255,255,.25);"></div>
<span class="t" style="top:1024.6px;left:399.2px;transform-origin:0 0;font-size:10.6px;color:#2b2b2b;font-weight:bold;transform:translateX(-24.25px) scaleX(0.9472);">Light Skin</span>
<div class="a" style="left:426.56px;top:978px;width:51.2px;height:61px;background:linear-gradient(#9c9c9c 0%,#8c8c8c 35%,#707070 75%,#5c5c5c 100%);border:1px solid #a8a8a8;border-bottom-color:#555;border-left-color:#8c8c8c;border-right-color:#777;border-radius:5px 5px 4px 4px;"></div>
<div class="a" style="left:431.76px;top:983px;width:41.2px;height:35.6px;background:#5d7ba3;border-radius:3.5px;box-shadow:0 0 1.5px rgba(0,0,0,.55), inset 0 1px 1px rgba(255,255,255,.25);"></div>
<span class="t" style="top:1024.6px;left:452.4px;transform-origin:0 0;font-size:10.6px;color:#2b2b2b;font-weight:bold;transform:translateX(-20.65px) scaleX(0.9229);">Blue Sky</span>
<div class="a" style="left:479.73px;top:978px;width:51.2px;height:61px;background:linear-gradient(#9c9c9c 0%,#8c8c8c 35%,#707070 75%,#5c5c5c 100%);border:1px solid #a8a8a8;border-bottom-color:#555;border-left-color:#8c8c8c;border-right-color:#777;border-radius:5px 5px 4px 4px;"></div>
<div class="a" style="left:484.93px;top:983px;width:41.2px;height:35.6px;background:#587040;border-radius:3.5px;box-shadow:0 0 1.5px rgba(0,0,0,.55), inset 0 1px 1px rgba(255,255,255,.25);"></div>
<span class="t" style="top:1024.6px;left:505.5px;transform-origin:0 0;font-size:10.6px;color:#2b2b2b;font-weight:bold;transform:translateX(-17.65px) scaleX(0.9516);">Foliage</span>
<div class="a" style="left:532.9px;top:978px;width:51.2px;height:61px;background:linear-gradient(#9c9c9c 0%,#8c8c8c 35%,#707070 75%,#5c5c5c 100%);border:1px solid #a8a8a8;border-bottom-color:#555;border-left-color:#8c8c8c;border-right-color:#777;border-radius:5px 5px 4px 4px;"></div>
<div class="a" style="left:538.1px;top:983px;width:41.2px;height:24.3px;background:#8583b9;border-radius:3.5px;box-shadow:0 0 1.5px rgba(0,0,0,.55), inset 0 1px 1px rgba(255,255,255,.25);"></div>
<span class="t" style="top:1013.2px;left:541.6px;transform-origin:0 0;font-size:10.6px;color:#2b2b2b;font-weight:bold;transform:scaleX(0.9273);">Blue</span>
<span class="t" style="top:1024.6px;left:541.6px;transform-origin:0 0;font-size:10.6px;color:#2b2b2b;font-weight:bold;transform:scaleX(0.9988);">Flower</span>
<div class="a" style="left:586.07px;top:978px;width:51.2px;height:61px;background:linear-gradient(#9c9c9c 0%,#8c8c8c 35%,#707070 75%,#5c5c5c 100%);border:1px solid #a8a8a8;border-bottom-color:#555;border-left-color:#8c8c8c;border-right-color:#777;border-radius:5px 5px 4px 4px;"></div>
<div class="a" style="left:591.27px;top:983px;width:41.2px;height:24.3px;background:#63c7ab;border-radius:3.5px;box-shadow:0 0 1.5px rgba(0,0,0,.55), inset 0 1px 1px rgba(255,255,255,.25);"></div>
<span class="t" style="top:1013.2px;left:597.1px;transform-origin:0 0;font-size:10.6px;color:#2b2b2b;font-weight:bold;transform:scaleX(0.9050);">Bluish</span>
<span class="t" style="top:1024.6px;left:597.1px;transform-origin:0 0;font-size:10.6px;color:#2b2b2b;font-weight:bold;transform:scaleX(0.9567);">Green</span>
<div class="a" style="left:639.24px;top:978px;width:51.2px;height:61px;background:linear-gradient(#9c9c9c 0%,#8c8c8c 35%,#707070 75%,#5c5c5c 100%);border:1px solid #a8a8a8;border-bottom-color:#555;border-left-color:#8c8c8c;border-right-color:#777;border-radius:5px 5px 4px 4px;"></div>
<div class="a" style="left:644.44px;top:983px;width:41.2px;height:35.6px;background:#e07c2b;border-radius:3.5px;box-shadow:0 0 1.5px rgba(0,0,0,.55), inset 0 1px 1px rgba(255,255,255,.25);"></div>
<span class="t" style="top:1024.6px;left:665.0px;transform-origin:0 0;font-size:10.6px;color:#2b2b2b;font-weight:bold;transform:translateX(-17.30px) scaleX(0.9328);">Orange</span>
<div class="a" style="left:692.41px;top:978px;width:51.2px;height:61px;background:linear-gradient(#9c9c9c 0%,#8c8c8c 35%,#707070 75%,#5c5c5c 100%);border:1px solid #a8a8a8;border-bottom-color:#555;border-left-color:#8c8c8c;border-right-color:#777;border-radius:5px 5px 4px 4px;"></div>
<div class="a" style="left:697.61px;top:983px;width:41.2px;height:24.3px;background:#4a5dab;border-radius:3.5px;box-shadow:0 0 1.5px rgba(0,0,0,.55), inset 0 1px 1px rgba(255,255,255,.25);"></div>
<span class="t" style="top:1013.2px;left:698.5px;transform-origin:0 0;font-size:10.6px;color:#2b2b2b;font-weight:bold;transform:scaleX(0.9271);">Purplish</span>
<span class="t" style="top:1024.6px;left:698.5px;transform-origin:0 0;font-size:10.6px;color:#2b2b2b;font-weight:bold;transform:scaleX(0.9273);">Blue</span>
<div class="a" style="left:745.58px;top:978px;width:51.2px;height:61px;background:linear-gradient(#9c9c9c 0%,#8c8c8c 35%,#707070 75%,#5c5c5c 100%);border:1px solid #a8a8a8;border-bottom-color:#555;border-left-color:#8c8c8c;border-right-color:#777;border-radius:5px 5px 4px 4px;"></div>
<div class="a" style="left:750.78px;top:983px;width:41.2px;height:24.3px;background:#d45567;border-radius:3.5px;box-shadow:0 0 1.5px rgba(0,0,0,.55), inset 0 1px 1px rgba(255,255,255,.25);"></div>
<span class="t" style="top:1013.2px;left:747.6px;transform-origin:0 0;font-size:10.6px;color:#2b2b2b;font-weight:bold;transform:scaleX(1.0044);">Moderate</span>
<span class="t" style="top:1024.6px;left:747.6px;transform-origin:0 0;font-size:10.6px;color:#2b2b2b;font-weight:bold;transform:scaleX(0.9293);">Red</span>
<div class="a" style="left:798.75px;top:978px;width:51.2px;height:61px;background:linear-gradient(#9c9c9c 0%,#8c8c8c 35%,#707070 75%,#5c5c5c 100%);border:1px solid #a8a8a8;border-bottom-color:#555;border-left-color:#8c8c8c;border-right-color:#777;border-radius:5px 5px 4px 4px;"></div>
<div class="a" style="left:803.95px;top:983px;width:41.2px;height:35.6px;background:#5e3b6e;border-radius:3.5px;box-shadow:0 0 1.5px rgba(0,0,0,.55), inset 0 1px 1px rgba(255,255,255,.25);"></div>
<span class="t" style="top:1024.6px;left:824.6px;transform-origin:0 0;font-size:10.6px;color:#2b2b2b;font-weight:bold;transform:translateX(-15.65px) scaleX(0.9494);">Purple</span>
<div class="a" style="left:851.92px;top:978px;width:51.2px;height:61px;background:linear-gradient(#9c9c9c 0%,#8c8c8c 35%,#707070 75%,#5c5c5c 100%);border:1px solid #a8a8a8;border-bottom-color:#555;border-left-color:#8c8c8c;border-right-color:#777;border-radius:5px 5px 4px 4px;"></div>
<div class="a" style="left:857.12px;top:983px;width:41.2px;height:24.3px;background:#a8c43e;border-radius:3.5px;box-shadow:0 0 1.5px rgba(0,0,0,.55), inset 0 1px 1px rgba(255,255,255,.25);"></div>
<span class="t" style="top:1013.2px;left:861.2px;transform-origin:0 0;font-size:10.6px;color:#2b2b2b;font-weight:bold;transform:scaleX(0.9944);">Yellow</span>
<span class="t" style="top:1024.6px;left:861.2px;transform-origin:0 0;font-size:10.6px;color:#2b2b2b;font-weight:bold;transform:scaleX(0.9567);">Green</span>
<div class="a" style="left:905.09px;top:978px;width:51.2px;height:61px;background:linear-gradient(#9c9c9c 0%,#8c8c8c 35%,#707070 75%,#5c5c5c 100%);border:1px solid #a8a8a8;border-bottom-color:#555;border-left-color:#8c8c8c;border-right-color:#777;border-radius:5px 5px 4px 4px;"></div>
<div class="a" style="left:910.29px;top:983px;width:41.2px;height:24.3px;background:#f0a531;border-radius:3.5px;box-shadow:0 0 1.5px rgba(0,0,0,.55), inset 0 1px 1px rgba(255,255,255,.25);"></div>
<span class="t" style="top:1013.2px;left:913.5px;transform-origin:0 0;font-size:10.6px;color:#2b2b2b;font-weight:bold;transform:scaleX(0.9328);">Orange</span>
<span class="t" style="top:1024.6px;left:913.5px;transform-origin:0 0;font-size:10.6px;color:#2b2b2b;font-weight:bold;transform:scaleX(0.9944);">Yellow</span>
<div class="a" style="left:958.26px;top:978px;width:51.2px;height:61px;background:linear-gradient(#9c9c9c 0%,#8c8c8c 35%,#707070 75%,#5c5c5c 100%);border:1px solid #a8a8a8;border-bottom-color:#555;border-left-color:#8c8c8c;border-right-color:#777;border-radius:5px 5px 4px 4px;"></div>
<div class="a" style="left:963.46px;top:983px;width:41.2px;height:35.6px;background:#2f3c9c;border-radius:3.5px;box-shadow:0 0 1.5px rgba(0,0,0,.55), inset 0 1px 1px rgba(255,255,255,.25);"></div>
<span class="t" style="top:1024.6px;left:984.1px;transform-origin:0 0;font-size:10.6px;color:#2b2b2b;font-weight:bold;transform:translateX(-10.65px) scaleX(0.9273);">Blue</span>
<div class="a" style="left:1011.43px;top:978px;width:51.2px;height:61px;background:linear-gradient(#9c9c9c 0%,#8c8c8c 35%,#707070 75%,#5c5c5c 100%);border:1px solid #a8a8a8;border-bottom-color:#555;border-left-color:#8c8c8c;border-right-color:#777;border-radius:5px 5px 4px 4px;"></div>
<div class="a" style="left:1016.63px;top:983px;width:41.2px;height:35.6px;background:#469a4a;border-radius:3.5px;box-shadow:0 0 1.5px rgba(0,0,0,.55), inset 0 1px 1px rgba(255,255,255,.25);"></div>
<span class="t" style="top:1024.6px;left:1037.2px;transform-origin:0 0;font-size:10.6px;color:#2b2b2b;font-weight:bold;transform:translateX(-14.65px) scaleX(0.9567);">Green</span>
<div class="a" style="left:1064.6px;top:978px;width:51.2px;height:61px;background:linear-gradient(#9c9c9c 0%,#8c8c8c 35%,#707070 75%,#5c5c5c 100%);border:1px solid #a8a8a8;border-bottom-color:#555;border-left-color:#8c8c8c;border-right-color:#777;border-radius:5px 5px 4px 4px;"></div>
<div class="a" style="left:1069.8px;top:983px;width:41.2px;height:35.6px;background:#b82e37;border-radius:3.5px;box-shadow:0 0 1.5px rgba(0,0,0,.55), inset 0 1px 1px rgba(255,255,255,.25);"></div>
<span class="t" style="top:1024.6px;left:1090.4px;transform-origin:0 0;font-size:10.6px;color:#2b2b2b;font-weight:bold;transform:translateX(-9.30px) scaleX(0.9293);">Red</span>
<div class="a" style="left:1117.77px;top:978px;width:51.2px;height:61px;background:linear-gradient(#9c9c9c 0%,#8c8c8c 35%,#707070 75%,#5c5c5c 100%);border:1px solid #a8a8a8;border-bottom-color:#555;border-left-color:#8c8c8c;border-right-color:#777;border-radius:5px 5px 4px 4px;"></div>
<div class="a" style="left:1122.97px;top:983px;width:41.2px;height:35.6px;background:#f0cd22;border-radius:3.5px;box-shadow:0 0 1.5px rgba(0,0,0,.55), inset 0 1px 1px rgba(255,255,255,.25);"></div>
<span class="t" style="top:1024.6px;left:1143.6px;transform-origin:0 0;font-size:10.6px;color:#2b2b2b;font-weight:bold;transform:translateX(-16.40px) scaleX(0.9944);">Yellow</span>
<div class="a" style="left:1170.94px;top:978px;width:51.2px;height:61px;background:linear-gradient(#9c9c9c 0%,#8c8c8c 35%,#707070 75%,#5c5c5c 100%);border:1px solid #a8a8a8;border-bottom-color:#555;border-left-color:#8c8c8c;border-right-color:#777;border-radius:5px 5px 4px 4px;"></div>
<div class="a" style="left:1176.14px;top:983px;width:41.2px;height:35.6px;background:#c2569a;border-radius:3.5px;box-shadow:0 0 1.5px rgba(0,0,0,.55), inset 0 1px 1px rgba(255,255,255,.25);"></div>
<span class="t" style="top:1024.6px;left:1196.7px;transform-origin:0 0;font-size:10.6px;color:#2b2b2b;font-weight:bold;transform:translateX(-21.30px) scaleX(0.9911);">Magenta</span>
<div class="a" style="left:1224.11px;top:978px;width:51.2px;height:61px;background:linear-gradient(#9c9c9c 0%,#8c8c8c 35%,#707070 75%,#5c5c5c 100%);border:1px solid #a8a8a8;border-bottom-color:#555;border-left-color:#8c8c8c;border-right-color:#777;border-radius:5px 5px 4px 4px;"></div>
<div class="a" style="left:1229.31px;top:983px;width:41.2px;height:35.6px;background:#0091b0;border-radius:3.5px;box-shadow:0 0 1.5px rgba(0,0,0,.55), inset 0 1px 1px rgba(255,255,255,.25);"></div>
<span class="t" style="top:1024.6px;left:1249.9px;transform-origin:0 0;font-size:10.6px;color:#2b2b2b;font-weight:bold;transform:translateX(-11.95px) scaleX(0.9226);">Cyan</span>
<div class="a" style="left:1277.28px;top:978px;width:51.2px;height:61px;background:linear-gradient(#9c9c9c 0%,#8c8c8c 35%,#707070 75%,#5c5c5c 100%);border:1px solid #a8a8a8;border-bottom-color:#555;border-left-color:#8c8c8c;border-right-color:#777;border-radius:5px 5px 4px 4px;"></div>
<div class="a" style="left:1282.48px;top:983px;width:41.2px;height:35.6px;background:#ff0000;border-radius:3.5px;box-shadow:0 0 1.5px rgba(0,0,0,.55), inset 0 1px 1px rgba(255,255,255,.25);"></div>
<span class="t" style="top:1024.6px;left:1303.1px;transform-origin:0 0;font-size:10.6px;color:#2b2b2b;font-weight:bold;transform:translateX(-24.00px) scaleX(0.9588);">100% Red</span>
<div class="a" style="left:1330.45px;top:978px;width:51.2px;height:61px;background:linear-gradient(#9c9c9c 0%,#8c8c8c 35%,#707070 75%,#5c5c5c 100%);border:1px solid #a8a8a8;border-bottom-color:#555;border-left-color:#8c8c8c;border-right-color:#777;border-radius:5px 5px 4px 4px;"></div>
<div class="a" style="left:1335.65px;top:983px;width:41.2px;height:24.3px;background:#00ff00;border-radius:3.5px;box-shadow:0 0 1.5px rgba(0,0,0,.55), inset 0 1px 1px rgba(255,255,255,.25);"></div>
<span class="t" style="top:1013.2px;left:1341.5px;transform-origin:0 0;font-size:10.6px;color:#2b2b2b;font-weight:bold;transform:scaleX(0.9812);">100%</span>
<span class="t" style="top:1024.6px;left:1341.5px;transform-origin:0 0;font-size:10.6px;color:#2b2b2b;font-weight:bold;transform:scaleX(0.9567);">Green</span>
<div class="a" style="left:1383.62px;top:978px;width:51.2px;height:61px;background:linear-gradient(#9c9c9c 0%,#8c8c8c 35%,#707070 75%,#5c5c5c 100%);border:1px solid #a8a8a8;border-bottom-color:#555;border-left-color:#8c8c8c;border-right-color:#777;border-radius:5px 5px 4px 4px;"></div>
<div class="a" style="left:1388.82px;top:983px;width:41.2px;height:24.3px;background:#0000ff;border-radius:3.5px;box-shadow:0 0 1.5px rgba(0,0,0,.55), inset 0 1px 1px rgba(255,255,255,.25);"></div>
<span class="t" style="top:1013.2px;left:1396.0px;transform-origin:0 0;font-size:10.6px;color:#2b2b2b;font-weight:bold;transform:scaleX(0.9812);">100%</span>
<span class="t" style="top:1024.6px;left:1396.0px;transform-origin:0 0;font-size:10.6px;color:#2b2b2b;font-weight:bold;transform:scaleX(0.9273);">Blue</span>
<div class="a" style="left:1436.79px;top:978px;width:51.2px;height:61px;background:linear-gradient(#9c9c9c 0%,#8c8c8c 35%,#707070 75%,#5c5c5c 100%);border:1px solid #a8a8a8;border-bottom-color:#555;border-left-color:#8c8c8c;border-right-color:#777;border-radius:5px 5px 4px 4px;"></div>
<div class="a" style="left:1441.99px;top:983px;width:41.2px;height:24.3px;background:#00ffff;border-radius:3.5px;box-shadow:0 0 1.5px rgba(0,0,0,.55), inset 0 1px 1px rgba(255,255,255,.25);"></div>
<span class="t" style="top:1013.2px;left:1449.2px;transform-origin:0 0;font-size:10.6px;color:#2b2b2b;font-weight:bold;transform:scaleX(0.9812);">100%</span>
<span class="t" style="top:1024.6px;left:1449.2px;transform-origin:0 0;font-size:10.6px;color:#2b2b2b;font-weight:bold;transform:scaleX(0.9226);">Cyan</span>
<div class="a" style="left:1489.96px;top:978px;width:51.2px;height:61px;background:linear-gradient(#9c9c9c 0%,#8c8c8c 35%,#707070 75%,#5c5c5c 100%);border:1px solid #a8a8a8;border-bottom-color:#555;border-left-color:#8c8c8c;border-right-color:#777;border-radius:5px 5px 4px 4px;"></div>
<div class="a" style="left:1495.16px;top:983px;width:41.2px;height:24.3px;background:#ff00ff;border-radius:3.5px;box-shadow:0 0 1.5px rgba(0,0,0,.55), inset 0 1px 1px rgba(255,255,255,.25);"></div>
<span class="t" style="top:1013.2px;left:1494.4px;transform-origin:0 0;font-size:10.6px;color:#2b2b2b;font-weight:bold;transform:scaleX(0.9812);">100%</span>
<span class="t" style="top:1024.6px;left:1494.4px;transform-origin:0 0;font-size:10.6px;color:#2b2b2b;font-weight:bold;transform:scaleX(0.9911);">Magenta</span>
<div class="a" style="left:1543.13px;top:978px;width:51.2px;height:61px;background:linear-gradient(#1e1e1e,#2a2a2a 60%,#303030);border:1px solid #1a1a1a;border-radius:5px 5px 4px 4px;"></div>
<div class="a" style="left:1548.33px;top:983px;width:41.2px;height:24.3px;background:#ffff00;border-radius:3.5px;box-shadow:0 0 1.5px rgba(0,0,0,.55), inset 0 1px 1px rgba(255,255,255,.25);"></div>
<span class="t" style="top:1013.2px;left:1551.4px;transform-origin:0 0;font-size:10.6px;color:#fff;font-weight:bold;transform:scaleX(1.0401);">100%</span>
<span class="t" style="top:1024.6px;left:1551.4px;transform-origin:0 0;font-size:10.6px;color:#fff;font-weight:bold;transform:scaleX(1.0541);">Yellow</span>
<div class="a" style="left:1596.7px;top:977.8px;width:48.5px;height:18.8px;background:linear-gradient(#aaaaaa 0%,#9a9a9a 40%,#7c7c7c 60%,#6a6a6a 100%);border-radius:5px 5px 0 0;border:1px solid #b0b0b0;border-bottom:1px solid #555;"></div>
<div class="a" style="left:1596.7px;top:997px;width:48.5px;height:43px;background:linear-gradient(#aaaaaa 0%,#9a9a9a 40%,#7c7c7c 60%,#6a6a6a 100%);border:1px solid #9c9c9c;border-top:1px solid #bbb;"></div>
<div class="a" style="left:1646px;top:978.1px;width:45.4px;height:30px;background:linear-gradient(#aaaaaa 0%,#9a9a9a 40%,#7c7c7c 60%,#6a6a6a 100%);border-left:1px solid #b8b8b8;border-top:1px solid #c0c0c0;border-radius:3px 3px 0 0;"></div>
<div class="a" style="left:1692.2px;top:978.1px;width:44.4px;height:30px;background:linear-gradient(#aaaaaa 0%,#9a9a9a 40%,#7c7c7c 60%,#6a6a6a 100%);border-left:1px solid #b8b8b8;border-top:1px solid #c0c0c0;border-radius:3px 3px 0 0;"></div>
<div class="a" style="left:1737.4px;top:978.1px;width:44.3px;height:30px;background:linear-gradient(#aaaaaa 0%,#9a9a9a 40%,#7c7c7c 60%,#6a6a6a 100%);border-left:1px solid #b8b8b8;border-top:1px solid #c0c0c0;border-radius:3px 3px 0 0;"></div>
<div class="a" style="left:1782.5px;top:978.1px;width:44.2px;height:30px;background:linear-gradient(#aaaaaa 0%,#9a9a9a 40%,#7c7c7c 60%,#6a6a6a 100%);border-left:1px solid #b8b8b8;border-top:1px solid #c0c0c0;border-radius:3px 3px 0 0;"></div>
<div class="a" style="left:1828px;top:978.1px;width:44px;height:30px;background:linear-gradient(#3e3e3e 0%,#343434 50%,#2a2a2a 100%);"></div>
<div class="a" style="left:1872.6px;top:978.1px;width:40px;height:30px;background:linear-gradient(#3e3e3e 0%,#343434 50%,#2a2a2a 100%);"></div>
<div class="a" style="left:1646px;top:1009.2px;width:136px;height:31px;background:linear-gradient(#b4b4b4 0%,#a6a6a6 40%,#8a8a8a 60%,#7a7a7a 100%);border-top:1px solid #cfcfcf;border-left:1px solid #c0c0c0;border-radius:4px 0 0 0;"></div>
<div class="a" style="left:1783px;top:1009.2px;width:129px;height:31px;background:linear-gradient(#b4b4b4 0%,#a6a6a6 40%,#8a8a8a 60%,#7a7a7a 100%);border-top:1px solid #cfcfcf;border-left:1px solid #c0c0c0;"></div>
<svg width="1912" height="1040" viewBox="0 0 1912 1040"><defs><radialGradient id="cb" cx="50%" cy="35%" r="65%"><stop offset="0" stop-color="#c4c4c4"/><stop offset="1" stop-color="#8c8c8c"/></radialGradient><radialGradient id="cd" cx="50%" cy="35%" r="65%"><stop offset="0" stop-color="#3c3c3c"/><stop offset="1" stop-color="#2c2c2c"/></radialGradient></defs><circle cx="1621.5" cy="986.5" r="7" fill="#8a8a8a" opacity=".7"/><polygon points="1616.8,989 1626.2,989 1621.5,983.8" fill="#444"/><rect x="1606.5" y="1003.8" width="28.5" height="27.5" rx="4" fill="#aaa" fill-opacity=".35" stroke="#383838" stroke-width="2.2"/><rect x="1614" y="1011.3" width="13.5" height="13" fill="#000"/><circle cx="1668.8" cy="992.8" r="10" fill="url(#cb)"/><circle cx="1715" cy="992.8" r="10" fill="url(#cb)"/><circle cx="1760" cy="992.8" r="10" fill="url(#cb)"/><circle cx="1805" cy="992.8" r="10" fill="url(#cb)"/><rect x="1664.6" y="988.6" width="8.4" height="8.4" fill="#3a3a3a"/><polygon points="1711.5,987.5 1711.5,998.5 1720.5,993" fill="#333"/><path d="M1757 988 h-2.5 v9.6 h2.5 M1763 988 h2.5 v9.6 h-2.5" fill="none" stroke="#333" stroke-width="1.6"/><rect x="1757.6" y="992" width="1.6" height="1.6" fill="#333"/><rect x="1760.8" y="992" width="1.6" height="1.6" fill="#333"/><path d="M1805 992.8 c-1.5,-2.6 -5.8,-2.6 -5.8,0 c0,2.6 4.3,2.6 5.8,0 c1.5,-2.6 5.8,-2.6 5.8,0 c0,2.6 -4.3,2.6 -5.8,0 Z" fill="none" stroke="#333" stroke-width="1.5"/><circle cx="1850" cy="992.8" r="10" fill="url(#cd)"/><path d="M1844.8 991.5 a5.4 5.4 0 0 1 9.6 -2 M1855.2 994.2 a5.4 5.4 0 0 1 -9.6 2" fill="none" stroke="#1c1c1c" stroke-width="2"/><polygon points="1855.8,986.5 1855.8,991.5 1851,990" fill="#1c1c1c"/><polygon points="1844.2,999.2 1844.2,994.2 1849,995.6" fill="#1c1c1c"/><circle cx="1894.8" cy="992.8" r="10" fill="url(#cd)"/><circle cx="1676.7" cy="1024" r="10" fill="url(#cb)"/><path d="M1675.5 1019.5 l-4 4.5 l4 4.5 M1681 1019.5 l-4 4.5 l4 4.5" fill="none" stroke="#333" stroke-width="1.5"/><circle cx="1890" cy="1024" r="10" fill="url(#cb)"/><path d="M1886 1019.5 l4 4.5 l-4 4.5 M1891.5 1019.5 l4 4.5 l-4 4.5" fill="none" stroke="#333" stroke-width="1.5"/></svg>
<span class="t" style="top:1012.8px;left:1704.0px;transform-origin:0 0;font-size:22.2px;color:#303030;transform:scaleX(1.0035);-webkit-text-stroke:0.45px #303030;">Back</span>
<span class="t" style="top:1012.8px;left:1810.3px;transform-origin:0 0;font-size:22.2px;color:#303030;transform:scaleX(1.1288);-webkit-text-stroke:0.45px #303030;">Next</span>
</body></html>
